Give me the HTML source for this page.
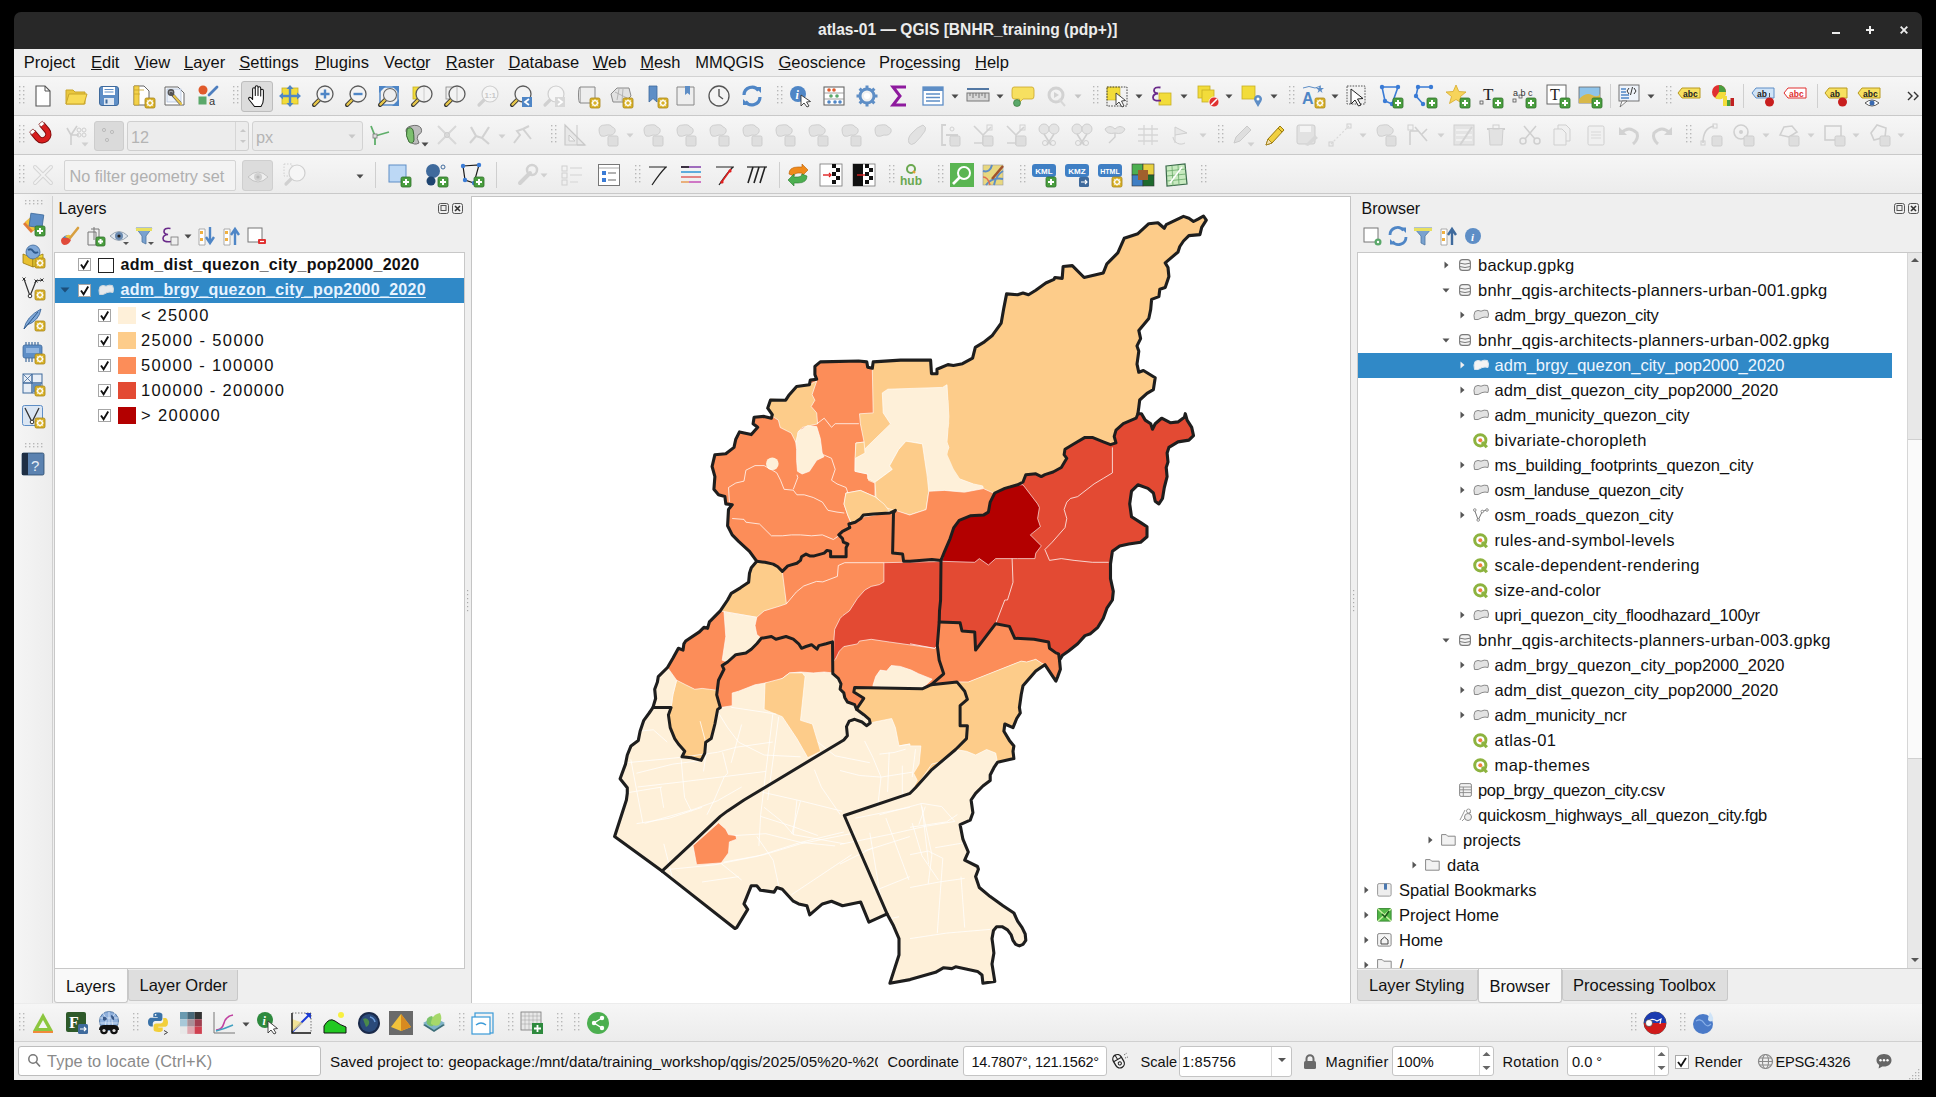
<!DOCTYPE html><html><head><meta charset="utf-8"><style>
html,body{margin:0;padding:0}
body{width:1936px;height:1097px;background:#000;position:relative;overflow:hidden;font-family:"Liberation Sans",sans-serif}
.a{position:absolute}
.t{position:absolute;white-space:pre;line-height:1;font-family:"Liberation Sans",sans-serif}
svg.a{overflow:visible}
</style></head><body>
<div class="a" style="left:14px;top:40px;width:1908px;height:1040px;background:#efefef;"></div>
<div class="a" style="left:14px;top:12px;width:1908px;height:37px;background:#282828;border-radius:7px 7px 0 0"></div>
<div class="t" style="left:818px;top:21.79px;font-size:15.6px;color:#ececec;font-weight:700;">atlas-01 — QGIS [BNHR_training (pdp+)]</div>
<div class="a" style="left:1832px;top:32px;width:8px;height:2px;background:#ececec;"></div>
<div class="a" style="left:1866px;top:29px;width:8px;height:2px;background:#ececec;"></div>
<div class="a" style="left:1869px;top:26px;width:2px;height:8px;background:#ececec;"></div>
<svg class="a" style="left:1900px;top:26px;" width="8" height="8" viewBox="0 0 8 8"><path d="M0.7 0.7L7.3 7.3M7.3 0.7L0.7 7.3" stroke="#ececec" stroke-width="1.9"/></svg>
<div class="a" style="left:14px;top:49px;width:1908px;height:27px;background:#efefef;"></div>
<div class="a" style="left:14px;top:76px;width:1908px;height:1px;background:#d2d2d2;"></div>
<div class="t" style="left:23.8px;top:53.93px;font-size:16.5px;color:#111;font-weight:400;">Pro<u>j</u>ect</div>
<div class="t" style="left:91px;top:53.93px;font-size:16.5px;color:#111;font-weight:400;"><u>E</u>dit</div>
<div class="t" style="left:134.6px;top:53.93px;font-size:16.5px;color:#111;font-weight:400;"><u>V</u>iew</div>
<div class="t" style="left:184px;top:53.93px;font-size:16.5px;color:#111;font-weight:400;"><u>L</u>ayer</div>
<div class="t" style="left:239.2px;top:53.93px;font-size:16.5px;color:#111;font-weight:400;"><u>S</u>ettings</div>
<div class="t" style="left:314.9px;top:53.93px;font-size:16.5px;color:#111;font-weight:400;"><u>P</u>lugins</div>
<div class="t" style="left:383.8px;top:53.93px;font-size:16.5px;color:#111;font-weight:400;">Vect<u>o</u>r</div>
<div class="t" style="left:445.8px;top:53.93px;font-size:16.5px;color:#111;font-weight:400;"><u>R</u>aster</div>
<div class="t" style="left:508.5px;top:53.93px;font-size:16.5px;color:#111;font-weight:400;"><u>D</u>atabase</div>
<div class="t" style="left:592.8px;top:53.93px;font-size:16.5px;color:#111;font-weight:400;"><u>W</u>eb</div>
<div class="t" style="left:640.2px;top:53.93px;font-size:16.5px;color:#111;font-weight:400;"><u>M</u>esh</div>
<div class="t" style="left:695.2px;top:53.93px;font-size:16.5px;color:#111;font-weight:400;">MMQGIS</div>
<div class="t" style="left:778.5px;top:53.93px;font-size:16.5px;color:#111;font-weight:400;"><u>G</u>eoscience</div>
<div class="t" style="left:879px;top:53.93px;font-size:16.5px;color:#111;font-weight:400;">Pro<u>c</u>essing</div>
<div class="t" style="left:975px;top:53.93px;font-size:16.5px;color:#111;font-weight:400;"><u>H</u>elp</div>
<div class="a" style="left:14px;top:77px;width:1908px;height:38px;background:linear-gradient(#f6f6f6,#ececec);"></div>
<div class="a" style="left:14px;top:115px;width:1908px;height:1px;background:#c9c9c9;"></div>
<div class="a" style="left:14px;top:116px;width:1908px;height:38px;background:linear-gradient(#f6f6f6,#ececec);"></div>
<div class="a" style="left:14px;top:154px;width:1908px;height:1px;background:#c9c9c9;"></div>
<div class="a" style="left:14px;top:155px;width:1908px;height:38px;background:linear-gradient(#f6f6f6,#ececec);"></div>
<div class="a" style="left:14px;top:193px;width:1908px;height:1px;background:#c9c9c9;"></div>
<div class="a" style="left:14px;top:194px;width:1908px;height:886px;background:#efefef;"></div>
<div class="a" style="left:14px;top:194px;width:38px;height:810px;background:linear-gradient(90deg,#f5f5f5,#ededed);"></div>
<div class="a" style="left:52px;top:196px;width:1px;height:807px;background:#d0d0d0;"></div>
<div class="t" style="left:58.5px;top:201.46px;font-size:16px;color:#111;font-weight:400;">Layers</div>
<svg class="a" style="left:438px;top:203px;" width="26" height="12" viewBox="0 0 26 12"><rect x="0.5" y="0.5" width="10" height="10" rx="2" fill="none" stroke="#555"/><rect x="3" y="2.5" width="5" height="5" fill="none" stroke="#555"/><rect x="14.5" y="0.5" width="10" height="10" rx="2" fill="none" stroke="#555"/><path d="M17 3L22 8M22 3L17 8" stroke="#333" stroke-width="1.6"/></svg>
<div class="a" style="left:54px;top:252px;width:411px;height:717px;background:#fff;box-sizing:border-box;border:1px solid #c8c8c8"></div>
<div class="a" style="left:54px;top:969px;width:74px;height:34px;background:#f9f9f9;box-sizing:border-box;border:1px solid #c8c8c8;border-top:none;border-radius:0 0 3px 3px"></div>
<div class="a" style="left:128px;top:970px;width:110px;height:31px;background:#dedede;box-sizing:border-box;border:1px solid #c8c8c8;border-top:none;border-radius:0 0 3px 3px"></div>
<div class="t" style="left:66px;top:977.53px;font-size:16.5px;color:#111;font-weight:400;">Layers</div>
<div class="t" style="left:139.5px;top:977.03px;font-size:16.5px;color:#111;font-weight:400;">Layer Order</div>
<div class="a" style="left:471px;top:196px;width:880px;height:808px;background:#fff;box-sizing:border-box;border:1px solid #c4c4c4"></div>
<div class="t" style="left:1361.5px;top:201.46px;font-size:16px;color:#111;font-weight:400;">Browser</div>
<svg class="a" style="left:1894px;top:203px;" width="28" height="12" viewBox="0 0 28 12"><rect x="0.5" y="0.5" width="10" height="10" rx="2" fill="none" stroke="#555"/><rect x="3" y="2.5" width="5" height="5" fill="none" stroke="#555"/><rect x="14.5" y="0.5" width="10" height="10" rx="2" fill="none" stroke="#555"/><path d="M17 3L22 8M22 3L17 8" stroke="#333" stroke-width="1.6"/></svg>
<div class="a" style="left:1357px;top:252px;width:565px;height:717px;background:#fff;box-sizing:border-box;border:1px solid #c8c8c8;border-right:none"></div>
<div class="a" style="left:1907px;top:253px;width:15px;height:715px;background:#e8e8e8;box-sizing:border-box;border-left:1px solid #d6d6d6"></div>
<div class="a" style="left:1908px;top:439px;width:14px;height:320px;background:#fafafa;box-sizing:border-box;border-top:1px solid #d0d0d0;border-bottom:1px solid #d0d0d0"></div>
<svg class="a" style="left:1908px;top:253px;" width="14" height="14" viewBox="0 0 14 14"><path d="M3 9L7 5L11 9Z" fill="#555"/></svg>
<svg class="a" style="left:1908px;top:953px;" width="14" height="14" viewBox="0 0 14 14"><path d="M3 5L7 9L11 5Z" fill="#555"/></svg>
<div class="a" style="left:1357px;top:970px;width:121px;height:31px;background:#dedede;box-sizing:border-box;border:1px solid #c8c8c8;border-top:none;border-radius:0 0 3px 3px"></div>
<div class="a" style="left:1478px;top:969px;width:84px;height:34px;background:#f9f9f9;box-sizing:border-box;border:1px solid #c8c8c8;border-top:none;border-radius:0 0 3px 3px"></div>
<div class="a" style="left:1562px;top:970px;width:166px;height:31px;background:#dedede;box-sizing:border-box;border:1px solid #c8c8c8;border-top:none;border-radius:0 0 3px 3px"></div>
<div class="t" style="left:1369px;top:977.03px;font-size:16.5px;color:#111;font-weight:400;">Layer Styling</div>
<div class="t" style="left:1489.5px;top:977.53px;font-size:16.5px;color:#111;font-weight:400;">Browser</div>
<div class="t" style="left:1573px;top:977.03px;font-size:16.5px;color:#111;font-weight:400;">Processing Toolbox</div>
<div class="a" style="left:14px;top:1003px;width:1908px;height:38px;background:linear-gradient(#f6f6f6,#ececec);"></div>
<div class="a" style="left:14px;top:1003px;width:1908px;height:1px;background:#ececec;"></div>
<div class="a" style="left:14px;top:1041px;width:1908px;height:1px;background:#d0d0d0;"></div>
<div class="a" style="left:14px;top:1042px;width:1908px;height:38px;background:#efefef;"></div>
<div class="a" style="left:18px;top:1046px;width:303px;height:30px;background:#fff;box-sizing:border-box;border:1px solid #bdbdbd;border-radius:3px"></div>
<svg class="a" style="left:27px;top:1053px;" width="14" height="15" viewBox="0 0 14 15"><circle cx="6" cy="6" r="4.2" fill="none" stroke="#777" stroke-width="1.5"/><path d="M9 9L13 13.5" stroke="#777" stroke-width="1.6"/></svg>
<div class="t" style="left:47px;top:1053.00px;font-size:16.3px;color:#8a8a8a;font-weight:400;letter-spacing:0.12px">Type to locate (Ctrl+K)</div>
<div class="a" style="left:330px;top:1046px;width:548px;height:30px;overflow:hidden">
<div class="t" style="left:0px;top:7.93px;font-size:15.2px;color:#111;font-weight:400;">Saved project to: geopackage:/mnt/data/training_workshop/qgis/2025/05%20-%20</div>
</div>
<div class="t" style="left:887.5px;top:1054.64px;font-size:14.6px;color:#111;font-weight:400;">Coordinate</div>
<div class="a" style="left:963px;top:1046px;width:144px;height:30px;background:#fff;box-sizing:border-box;border:1px solid #c4c4c4;border-radius:3px"></div>
<div class="t" style="left:971.5px;top:1054.73px;font-size:14.5px;color:#111;font-weight:400;letter-spacing:-0.28px">14.7807°, 121.1562°</div>
<svg class="a" style="left:1110px;top:1052px;" width="18" height="18" viewBox="0 0 18 18"><g transform="rotate(-30 9 9)"><rect x="4" y="2" width="9" height="14" rx="4.5" fill="#f4f4f4" stroke="#222" stroke-width="1.3"/><path d="M8.5 2V7M4 7H13" stroke="#222" stroke-width="1"/><circle cx="8.5" cy="11.5" r="1.6" fill="none" stroke="#222"/></g><path d="M14 3L17 1M15 6L18 5" stroke="#333" stroke-width="0.8" stroke-dasharray="1 1"/></svg>
<svg class="a" style="left:1303px;top:1054px;" width="14" height="15" viewBox="0 0 14 15"><path d="M3.5 7V4.8A3.5 3.5 0 0 1 10.5 4.8V7" fill="none" stroke="#6a6a6a" stroke-width="2"/><rect x="1" y="7" width="12" height="8" rx="1.5" fill="#6a6a6a"/></svg>
<div class="t" style="left:1140.5px;top:1054.64px;font-size:14.6px;color:#111;font-weight:400;">Scale</div>
<div class="a" style="left:1179px;top:1046px;width:113px;height:31px;background:#fff;box-sizing:border-box;border:1px solid #c4c4c4;border-radius:3px"></div>
<div class="a" style="left:1271px;top:1047px;width:1px;height:29px;background:#d8d8d8;"></div>
<svg class="a" style="left:1275px;top:1055px;" width="14" height="10" viewBox="0 0 14 10"><path d="M3 3L7 7L11 3Z" fill="#555"/></svg>
<div class="t" style="left:1182px;top:1054.64px;font-size:14.6px;color:#111;font-weight:400;letter-spacing:0.2px">1:85756</div>
<div class="t" style="left:1325.5px;top:1054.64px;font-size:14.6px;color:#111;font-weight:400;letter-spacing:0.35px">Magnifier</div>
<div class="a" style="left:1392px;top:1046px;width:102px;height:30px;background:#fff;box-sizing:border-box;border:1px solid #c4c4c4;border-radius:3px"></div>
<div class="a" style="left:1479px;top:1047px;width:1px;height:28px;background:#d8d8d8;"></div>
<svg class="a" style="left:1480px;top:1047px;" width="13" height="28" viewBox="0 0 13 28"><path d="M2.5 9L6.5 5L10.5 9Z" fill="#666"/><path d="M2.5 19L6.5 23L10.5 19Z" fill="#666"/></svg>
<div class="t" style="left:1396.5px;top:1054.64px;font-size:14.6px;color:#111;font-weight:400;">100%</div>
<div class="t" style="left:1502.5px;top:1054.64px;font-size:14.6px;color:#111;font-weight:400;letter-spacing:0.28px">Rotation</div>
<div class="a" style="left:1567px;top:1046px;width:102px;height:30px;background:#fff;box-sizing:border-box;border:1px solid #c4c4c4;border-radius:3px"></div>
<div class="a" style="left:1654px;top:1047px;width:1px;height:28px;background:#d8d8d8;"></div>
<svg class="a" style="left:1655px;top:1047px;" width="13" height="28" viewBox="0 0 13 28"><path d="M2.5 9L6.5 5L10.5 9Z" fill="#666"/><path d="M2.5 19L6.5 23L10.5 19Z" fill="#666"/></svg>
<div class="t" style="left:1572px;top:1054.64px;font-size:14.6px;color:#111;font-weight:400;">0.0 °</div>
<div class="a" style="left:1675px;top:1055px;width:14px;height:14px;background:#fff;box-sizing:border-box;border:1px solid #aaa"></div>
<svg class="a" style="left:1675px;top:1055px;" width="14" height="14" viewBox="0 0 14 14"><path d="M3 7L6 11L11 3" fill="none" stroke="#111" stroke-width="1.8"/></svg>
<div class="t" style="left:1694.5px;top:1054.64px;font-size:14.6px;color:#111;font-weight:400;">Render</div>
<svg class="a" style="left:1757px;top:1053px;" width="17" height="17" viewBox="0 0 17 17"><circle cx="8.5" cy="8.5" r="7" fill="none" stroke="#888" stroke-width="1.2"/><ellipse cx="8.5" cy="8.5" rx="3" ry="7" fill="none" stroke="#888" stroke-width="1.1"/><path d="M1.5 8.5H15.5M2.5 5H14.5M2.5 12H14.5" stroke="#888" stroke-width="1.1"/></svg>
<div class="t" style="left:1775.5px;top:1054.64px;font-size:14.6px;color:#111;font-weight:400;letter-spacing:-0.25px">EPSG:4326</div>
<svg class="a" style="left:1906px;top:1066px;" width="14" height="14" viewBox="0 0 14 14"><rect x="12" y="12" width="1.3" height="1.3" fill="#b0b0b0"/><rect x="12" y="9" width="1.3" height="1.3" fill="#b0b0b0"/><rect x="12" y="6" width="1.3" height="1.3" fill="#b0b0b0"/><rect x="12" y="3" width="1.3" height="1.3" fill="#b0b0b0"/><rect x="9" y="12" width="1.3" height="1.3" fill="#b0b0b0"/><rect x="9" y="9" width="1.3" height="1.3" fill="#b0b0b0"/><rect x="9" y="6" width="1.3" height="1.3" fill="#b0b0b0"/><rect x="6" y="12" width="1.3" height="1.3" fill="#b0b0b0"/><rect x="6" y="9" width="1.3" height="1.3" fill="#b0b0b0"/><rect x="3" y="12" width="1.3" height="1.3" fill="#b0b0b0"/></svg>
<svg class="a" style="left:1875px;top:1052px;" width="18" height="18" viewBox="0 0 18 18"><path d="M9 2C4.5 2 1.5 4.8 1.5 8.3C1.5 10.3 2.5 12 4.2 13.1L3.6 16.5L7.3 14.4C7.9 14.5 8.4 14.6 9 14.6C13.5 14.6 16.5 11.8 16.5 8.3C16.5 4.8 13.5 2 9 2Z" fill="#666"/><circle cx="5.5" cy="8.3" r="1.2" fill="#fff"/><circle cx="9" cy="8.3" r="1.2" fill="#fff"/><circle cx="12.5" cy="8.3" r="1.2" fill="#fff"/></svg>
<svg class="a" style="left:78px;top:258px;" width="13" height="13" viewBox="0 0 13 13"><rect x="0.5" y="0.5" width="12" height="12" fill="#fff" stroke="#a6a6a6"/><path d="M3 6.5L5.6 10.2L10.2 2.6" fill="none" stroke="#111" stroke-width="1.9"/></svg>
<div class="a" style="left:98px;top:258px;width:16px;height:15px;background:#fff;box-sizing:border-box;border:1.6px solid #222"></div>
<div class="t" style="left:120.5px;top:256.96px;font-size:16px;color:#111;font-weight:700;letter-spacing:0.27px">adm_dist_quezon_city_pop2000_2020</div>
<div class="a" style="left:55px;top:278px;width:409px;height:25px;background:#3089c7;"></div>
<svg class="a" style="left:60px;top:287px;" width="10" height="6" viewBox="0 0 10 6"><path d="M0.5 0.5L9.5 0.5L5 5.5Z" fill="#1d4f7a"/></svg>
<svg class="a" style="left:78px;top:284px;" width="13" height="13" viewBox="0 0 13 13"><rect x="0.5" y="0.5" width="12" height="12" fill="#fff" stroke="#a6a6a6"/><path d="M3 6.5L5.6 10.2L10.2 2.6" fill="none" stroke="#111" stroke-width="1.9"/></svg>
<svg class="a" style="left:98px;top:284px;" width="17" height="12" viewBox="0 0 17 12"><path d="M2 2.5Q5 0.5 8 2.2Q11 0.5 14.5 1.5Q16.3 5 15 8.5Q12 7.5 9 8.6Q5 11.5 1.5 10.5Q0.2 6 2 2.5Z" fill="#e6e9ec" stroke="#cfd6dc" stroke-width="1"/></svg>
<div class="t" style="left:120.5px;top:281.96px;font-size:16px;color:#e7f3ff;font-weight:700;letter-spacing:0.28px;text-decoration:underline;text-underline-offset:2px">adm_brgy_quezon_city_pop2000_2020</div>
<svg class="a" style="left:98px;top:308.5px;" width="13" height="13" viewBox="0 0 13 13"><rect x="0.5" y="0.5" width="12" height="12" fill="#fff" stroke="#a6a6a6"/><path d="M3 6.5L5.6 10.2L10.2 2.6" fill="none" stroke="#111" stroke-width="1.9"/></svg>
<div class="a" style="left:118px;top:307px;width:18px;height:17px;background:#fef0d9;"></div>
<div class="t" style="left:141px;top:306.53px;font-size:16.5px;color:#111;font-weight:400;letter-spacing:1.2px">&lt; 25000</div>
<svg class="a" style="left:98px;top:333.5px;" width="13" height="13" viewBox="0 0 13 13"><rect x="0.5" y="0.5" width="12" height="12" fill="#fff" stroke="#a6a6a6"/><path d="M3 6.5L5.6 10.2L10.2 2.6" fill="none" stroke="#111" stroke-width="1.9"/></svg>
<div class="a" style="left:118px;top:332px;width:18px;height:17px;background:#fdcc8a;"></div>
<div class="t" style="left:141px;top:331.53px;font-size:16.5px;color:#111;font-weight:400;letter-spacing:1.35px">25000 - 50000</div>
<svg class="a" style="left:98px;top:358.5px;" width="13" height="13" viewBox="0 0 13 13"><rect x="0.5" y="0.5" width="12" height="12" fill="#fff" stroke="#a6a6a6"/><path d="M3 6.5L5.6 10.2L10.2 2.6" fill="none" stroke="#111" stroke-width="1.9"/></svg>
<div class="a" style="left:118px;top:357px;width:18px;height:17px;background:#fc8d59;"></div>
<div class="t" style="left:141px;top:356.53px;font-size:16.5px;color:#111;font-weight:400;letter-spacing:1.3px">50000 - 100000</div>
<svg class="a" style="left:98px;top:383.5px;" width="13" height="13" viewBox="0 0 13 13"><rect x="0.5" y="0.5" width="12" height="12" fill="#fff" stroke="#a6a6a6"/><path d="M3 6.5L5.6 10.2L10.2 2.6" fill="none" stroke="#111" stroke-width="1.9"/></svg>
<div class="a" style="left:118px;top:382px;width:18px;height:17px;background:#e34a33;"></div>
<div class="t" style="left:141px;top:381.53px;font-size:16.5px;color:#111;font-weight:400;letter-spacing:1.3px">100000 - 200000</div>
<svg class="a" style="left:98px;top:408.5px;" width="13" height="13" viewBox="0 0 13 13"><rect x="0.5" y="0.5" width="12" height="12" fill="#fff" stroke="#a6a6a6"/><path d="M3 6.5L5.6 10.2L10.2 2.6" fill="none" stroke="#111" stroke-width="1.9"/></svg>
<div class="a" style="left:118px;top:407px;width:18px;height:17px;background:#b30000;"></div>
<div class="t" style="left:141px;top:406.53px;font-size:16.5px;color:#111;font-weight:400;letter-spacing:1.35px">&gt; 200000</div>
<div class="a" style="left:1358px;top:353px;width:534px;height:25px;background:#3089c7;"></div>
<svg class="a" style="left:1444px;top:261px;" width="5" height="8" viewBox="0 0 5 8"><path d="M0.5 0.5L4.5 4L0.5 7.5Z" fill="#555"/></svg>
<svg class="a" style="left:1459px;top:259px;" width="12" height="12" viewBox="0 0 12 12"><rect x="0.6" y="0.6" width="10.8" height="10.8" rx="3" fill="#f4f4f4" stroke="#7a7a7a" stroke-width="1.1"/><path d="M1 4.2Q6 6 11 4.2M1 7.6Q6 9.4 11 7.6" fill="none" stroke="#7a7a7a" stroke-width="1"/></svg>
<div class="t" style="left:1478px;top:257.03px;font-size:16.5px;color:#111;font-weight:400;letter-spacing:0.25px">backup.gpkg</div>
<svg class="a" style="left:1442px;top:287.5px;" width="8" height="5" viewBox="0 0 8 5"><path d="M0.5 0.5L7.5 0.5L4 4.5Z" fill="#555"/></svg>
<svg class="a" style="left:1459px;top:284px;" width="12" height="12" viewBox="0 0 12 12"><rect x="0.6" y="0.6" width="10.8" height="10.8" rx="3" fill="#f4f4f4" stroke="#7a7a7a" stroke-width="1.1"/><path d="M1 4.2Q6 6 11 4.2M1 7.6Q6 9.4 11 7.6" fill="none" stroke="#7a7a7a" stroke-width="1"/></svg>
<div class="t" style="left:1478px;top:282.03px;font-size:16.5px;color:#111;font-weight:400;letter-spacing:0.249px">bnhr_qgis-architects-planners-urban-001.gpkg</div>
<svg class="a" style="left:1460px;top:311px;" width="5" height="8" viewBox="0 0 5 8"><path d="M0.5 0.5L4.5 4L0.5 7.5Z" fill="#555"/></svg>
<svg class="a" style="left:1473px;top:309px;" width="17" height="12" viewBox="0 0 17 12"><path d="M2 2.5Q5 0.5 8 2.2Q11 0.5 14.5 1.5Q16.3 5 15 8.5Q12 7.5 9 8.6Q5 11.5 1.5 10.5Q0.2 6 2 2.5Z" fill="#e2e2e2" stroke="#8a8a8a" stroke-width="1"/></svg>
<div class="t" style="left:1494.6px;top:307.03px;font-size:16.5px;color:#111;font-weight:400;letter-spacing:-0.342px">adm_brgy_quezon_city</div>
<svg class="a" style="left:1442px;top:337.5px;" width="8" height="5" viewBox="0 0 8 5"><path d="M0.5 0.5L7.5 0.5L4 4.5Z" fill="#555"/></svg>
<svg class="a" style="left:1459px;top:334px;" width="12" height="12" viewBox="0 0 12 12"><rect x="0.6" y="0.6" width="10.8" height="10.8" rx="3" fill="#f4f4f4" stroke="#7a7a7a" stroke-width="1.1"/><path d="M1 4.2Q6 6 11 4.2M1 7.6Q6 9.4 11 7.6" fill="none" stroke="#7a7a7a" stroke-width="1"/></svg>
<div class="t" style="left:1478px;top:332.03px;font-size:16.5px;color:#111;font-weight:400;letter-spacing:0.302px">bnhr_qgis-architects-planners-urban-002.gpkg</div>
<svg class="a" style="left:1460px;top:361px;" width="5" height="8" viewBox="0 0 5 8"><path d="M0.5 0.5L4.5 4L0.5 7.5Z" fill="#f0f0f0"/></svg>
<svg class="a" style="left:1473px;top:359px;" width="17" height="12" viewBox="0 0 17 12"><path d="M2 2.5Q5 0.5 8 2.2Q11 0.5 14.5 1.5Q16.3 5 15 8.5Q12 7.5 9 8.6Q5 11.5 1.5 10.5Q0.2 6 2 2.5Z" fill="#f4f4f4" stroke="#d8e4ee" stroke-width="1"/></svg>
<div class="t" style="left:1494.6px;top:357.03px;font-size:16.5px;color:#eef6ff;font-weight:400;letter-spacing:0.0px">adm_brgy_quezon_city_pop2000_2020</div>
<svg class="a" style="left:1460px;top:386px;" width="5" height="8" viewBox="0 0 5 8"><path d="M0.5 0.5L4.5 4L0.5 7.5Z" fill="#555"/></svg>
<svg class="a" style="left:1473px;top:384px;" width="17" height="12" viewBox="0 0 17 12"><path d="M2 2.5Q5 0.5 8 2.2Q11 0.5 14.5 1.5Q16.3 5 15 8.5Q12 7.5 9 8.6Q5 11.5 1.5 10.5Q0.2 6 2 2.5Z" fill="#e2e2e2" stroke="#8a8a8a" stroke-width="1"/></svg>
<div class="t" style="left:1494.6px;top:382.03px;font-size:16.5px;color:#111;font-weight:400;letter-spacing:0.0px">adm_dist_quezon_city_pop2000_2020</div>
<svg class="a" style="left:1460px;top:411px;" width="5" height="8" viewBox="0 0 5 8"><path d="M0.5 0.5L4.5 4L0.5 7.5Z" fill="#555"/></svg>
<svg class="a" style="left:1473px;top:409px;" width="17" height="12" viewBox="0 0 17 12"><path d="M2 2.5Q5 0.5 8 2.2Q11 0.5 14.5 1.5Q16.3 5 15 8.5Q12 7.5 9 8.6Q5 11.5 1.5 10.5Q0.2 6 2 2.5Z" fill="#e2e2e2" stroke="#8a8a8a" stroke-width="1"/></svg>
<div class="t" style="left:1494.6px;top:407.03px;font-size:16.5px;color:#111;font-weight:400;letter-spacing:-0.174px">adm_municity_quezon_city</div>
<svg class="a" style="left:1473px;top:432.5px;" width="16" height="16" viewBox="0 0 16 16"><circle cx="7.3" cy="7.3" r="5.6" fill="none" stroke="#8db33f" stroke-width="3"/><path d="M9 9L13.8 14.3" stroke="#8db33f" stroke-width="3.2"/><circle cx="7.3" cy="7.3" r="2" fill="#f0803c"/></svg>
<div class="t" style="left:1494.6px;top:432.03px;font-size:16.5px;color:#111;font-weight:400;letter-spacing:0.368px">bivariate-choropleth</div>
<svg class="a" style="left:1460px;top:461px;" width="5" height="8" viewBox="0 0 5 8"><path d="M0.5 0.5L4.5 4L0.5 7.5Z" fill="#555"/></svg>
<svg class="a" style="left:1473px;top:459px;" width="17" height="12" viewBox="0 0 17 12"><path d="M2 2.5Q5 0.5 8 2.2Q11 0.5 14.5 1.5Q16.3 5 15 8.5Q12 7.5 9 8.6Q5 11.5 1.5 10.5Q0.2 6 2 2.5Z" fill="#e2e2e2" stroke="#8a8a8a" stroke-width="1"/></svg>
<div class="t" style="left:1494.6px;top:457.03px;font-size:16.5px;color:#111;font-weight:400;letter-spacing:-0.106px">ms_building_footprints_quezon_city</div>
<svg class="a" style="left:1460px;top:486px;" width="5" height="8" viewBox="0 0 5 8"><path d="M0.5 0.5L4.5 4L0.5 7.5Z" fill="#555"/></svg>
<svg class="a" style="left:1473px;top:484px;" width="17" height="12" viewBox="0 0 17 12"><path d="M2 2.5Q5 0.5 8 2.2Q11 0.5 14.5 1.5Q16.3 5 15 8.5Q12 7.5 9 8.6Q5 11.5 1.5 10.5Q0.2 6 2 2.5Z" fill="#e2e2e2" stroke="#8a8a8a" stroke-width="1"/></svg>
<div class="t" style="left:1494.6px;top:482.03px;font-size:16.5px;color:#111;font-weight:400;letter-spacing:-0.295px">osm_landuse_quezon_city</div>
<svg class="a" style="left:1460px;top:511px;" width="5" height="8" viewBox="0 0 5 8"><path d="M0.5 0.5L4.5 4L0.5 7.5Z" fill="#555"/></svg>
<svg class="a" style="left:1473px;top:508px;" width="17" height="14" viewBox="0 0 17 14"><path d="M1.5 2L5.2 12L9.3 3.5L13.5 2" fill="none" stroke="#777" stroke-width="1"/><circle cx="1.8" cy="2" r="1.3" fill="#fff" stroke="#777" stroke-width="0.8"/><circle cx="5.2" cy="12" r="1.3" fill="#fff" stroke="#777" stroke-width="0.8"/><circle cx="9.3" cy="3.5" r="1.3" fill="#fff" stroke="#777" stroke-width="0.8"/><circle cx="14" cy="2" r="1.3" fill="#fff" stroke="#777" stroke-width="0.8"/></svg>
<div class="t" style="left:1494.6px;top:507.03px;font-size:16.5px;color:#111;font-weight:400;letter-spacing:0.0px">osm_roads_quezon_city</div>
<svg class="a" style="left:1473px;top:532.5px;" width="16" height="16" viewBox="0 0 16 16"><circle cx="7.3" cy="7.3" r="5.6" fill="none" stroke="#8db33f" stroke-width="3"/><path d="M9 9L13.8 14.3" stroke="#8db33f" stroke-width="3.2"/><circle cx="7.3" cy="7.3" r="2" fill="#f0803c"/></svg>
<div class="t" style="left:1494.6px;top:532.03px;font-size:16.5px;color:#111;font-weight:400;letter-spacing:0.255px">rules-and-symbol-levels</div>
<svg class="a" style="left:1473px;top:557.5px;" width="16" height="16" viewBox="0 0 16 16"><circle cx="7.3" cy="7.3" r="5.6" fill="none" stroke="#8db33f" stroke-width="3"/><path d="M9 9L13.8 14.3" stroke="#8db33f" stroke-width="3.2"/><circle cx="7.3" cy="7.3" r="2" fill="#f0803c"/></svg>
<div class="t" style="left:1494.6px;top:557.03px;font-size:16.5px;color:#111;font-weight:400;letter-spacing:0.321px">scale-dependent-rendering</div>
<svg class="a" style="left:1473px;top:582.5px;" width="16" height="16" viewBox="0 0 16 16"><circle cx="7.3" cy="7.3" r="5.6" fill="none" stroke="#8db33f" stroke-width="3"/><path d="M9 9L13.8 14.3" stroke="#8db33f" stroke-width="3.2"/><circle cx="7.3" cy="7.3" r="2" fill="#f0803c"/></svg>
<div class="t" style="left:1494.6px;top:582.03px;font-size:16.5px;color:#111;font-weight:400;letter-spacing:0.2px">size-and-color</div>
<svg class="a" style="left:1460px;top:611px;" width="5" height="8" viewBox="0 0 5 8"><path d="M0.5 0.5L4.5 4L0.5 7.5Z" fill="#555"/></svg>
<svg class="a" style="left:1473px;top:609px;" width="17" height="12" viewBox="0 0 17 12"><path d="M2 2.5Q5 0.5 8 2.2Q11 0.5 14.5 1.5Q16.3 5 15 8.5Q12 7.5 9 8.6Q5 11.5 1.5 10.5Q0.2 6 2 2.5Z" fill="#e2e2e2" stroke="#8a8a8a" stroke-width="1"/></svg>
<div class="t" style="left:1494.6px;top:607.03px;font-size:16.5px;color:#111;font-weight:400;letter-spacing:-0.155px">upri_quezon_city_floodhazard_100yr</div>
<svg class="a" style="left:1442px;top:637.5px;" width="8" height="5" viewBox="0 0 8 5"><path d="M0.5 0.5L7.5 0.5L4 4.5Z" fill="#555"/></svg>
<svg class="a" style="left:1459px;top:634px;" width="12" height="12" viewBox="0 0 12 12"><rect x="0.6" y="0.6" width="10.8" height="10.8" rx="3" fill="#f4f4f4" stroke="#7a7a7a" stroke-width="1.1"/><path d="M1 4.2Q6 6 11 4.2M1 7.6Q6 9.4 11 7.6" fill="none" stroke="#7a7a7a" stroke-width="1"/></svg>
<div class="t" style="left:1478px;top:632.03px;font-size:16.5px;color:#111;font-weight:400;letter-spacing:0.326px">bnhr_qgis-architects-planners-urban-003.gpkg</div>
<svg class="a" style="left:1460px;top:661px;" width="5" height="8" viewBox="0 0 5 8"><path d="M0.5 0.5L4.5 4L0.5 7.5Z" fill="#555"/></svg>
<svg class="a" style="left:1473px;top:659px;" width="17" height="12" viewBox="0 0 17 12"><path d="M2 2.5Q5 0.5 8 2.2Q11 0.5 14.5 1.5Q16.3 5 15 8.5Q12 7.5 9 8.6Q5 11.5 1.5 10.5Q0.2 6 2 2.5Z" fill="#e2e2e2" stroke="#8a8a8a" stroke-width="1"/></svg>
<div class="t" style="left:1494.6px;top:657.03px;font-size:16.5px;color:#111;font-weight:400;letter-spacing:0.0px">adm_brgy_quezon_city_pop2000_2020</div>
<svg class="a" style="left:1460px;top:686px;" width="5" height="8" viewBox="0 0 5 8"><path d="M0.5 0.5L4.5 4L0.5 7.5Z" fill="#555"/></svg>
<svg class="a" style="left:1473px;top:684px;" width="17" height="12" viewBox="0 0 17 12"><path d="M2 2.5Q5 0.5 8 2.2Q11 0.5 14.5 1.5Q16.3 5 15 8.5Q12 7.5 9 8.6Q5 11.5 1.5 10.5Q0.2 6 2 2.5Z" fill="#e2e2e2" stroke="#8a8a8a" stroke-width="1"/></svg>
<div class="t" style="left:1494.6px;top:682.03px;font-size:16.5px;color:#111;font-weight:400;letter-spacing:0.0px">adm_dist_quezon_city_pop2000_2020</div>
<svg class="a" style="left:1460px;top:711px;" width="5" height="8" viewBox="0 0 5 8"><path d="M0.5 0.5L4.5 4L0.5 7.5Z" fill="#555"/></svg>
<svg class="a" style="left:1473px;top:709px;" width="17" height="12" viewBox="0 0 17 12"><path d="M2 2.5Q5 0.5 8 2.2Q11 0.5 14.5 1.5Q16.3 5 15 8.5Q12 7.5 9 8.6Q5 11.5 1.5 10.5Q0.2 6 2 2.5Z" fill="#e2e2e2" stroke="#8a8a8a" stroke-width="1"/></svg>
<div class="t" style="left:1494.6px;top:707.03px;font-size:16.5px;color:#111;font-weight:400;letter-spacing:-0.12px">adm_municity_ncr</div>
<svg class="a" style="left:1473px;top:732.5px;" width="16" height="16" viewBox="0 0 16 16"><circle cx="7.3" cy="7.3" r="5.6" fill="none" stroke="#8db33f" stroke-width="3"/><path d="M9 9L13.8 14.3" stroke="#8db33f" stroke-width="3.2"/><circle cx="7.3" cy="7.3" r="2" fill="#f0803c"/></svg>
<div class="t" style="left:1494.6px;top:732.03px;font-size:16.5px;color:#111;font-weight:400;letter-spacing:0.386px">atlas-01</div>
<svg class="a" style="left:1473px;top:757.5px;" width="16" height="16" viewBox="0 0 16 16"><circle cx="7.3" cy="7.3" r="5.6" fill="none" stroke="#8db33f" stroke-width="3"/><path d="M9 9L13.8 14.3" stroke="#8db33f" stroke-width="3.2"/><circle cx="7.3" cy="7.3" r="2" fill="#f0803c"/></svg>
<div class="t" style="left:1494.6px;top:757.03px;font-size:16.5px;color:#111;font-weight:400;letter-spacing:0.389px">map-themes</div>
<svg class="a" style="left:1459px;top:783px;" width="13" height="14" viewBox="0 0 13 14"><rect x="0.6" y="0.6" width="11.8" height="12.8" rx="1.5" fill="#f2f2f2" stroke="#888" stroke-width="1"/><path d="M1 4H12M1 6.8H12M1 9.6H12M4.3 4V13" stroke="#888" stroke-width="0.9"/></svg>
<div class="t" style="left:1478px;top:782.03px;font-size:16.5px;color:#111;font-weight:400;letter-spacing:-0.313px">pop_brgy_quezon_city.csv</div>
<svg class="a" style="left:1459px;top:808px;" width="14" height="14" viewBox="0 0 14 14"><path d="M1 12L6 2M3 13L12 4" stroke="#999" stroke-width="1"/><circle cx="9" cy="9" r="3.5" fill="#eee" stroke="#888"/><circle cx="9.5" cy="3" r="2" fill="#fff" stroke="#999"/></svg>
<div class="t" style="left:1478px;top:807.03px;font-size:16.5px;color:#111;font-weight:400;letter-spacing:-0.211px">quickosm_highways_all_quezon_city.fgb</div>
<svg class="a" style="left:1428px;top:836px;" width="5" height="8" viewBox="0 0 5 8"><path d="M0.5 0.5L4.5 4L0.5 7.5Z" fill="#555"/></svg>
<svg class="a" style="left:1441px;top:833px;" width="15" height="13" viewBox="0 0 15 13"><path d="M0.6 1.6H5.2L6.7 3.2H14.2V12.2H0.6Z" fill="#f2f2f2" stroke="#888" stroke-width="1"/></svg>
<div class="t" style="left:1463px;top:832.03px;font-size:16.5px;color:#111;font-weight:400;">projects</div>
<svg class="a" style="left:1412px;top:861px;" width="5" height="8" viewBox="0 0 5 8"><path d="M0.5 0.5L4.5 4L0.5 7.5Z" fill="#555"/></svg>
<svg class="a" style="left:1425px;top:858px;" width="15" height="13" viewBox="0 0 15 13"><path d="M0.6 1.6H5.2L6.7 3.2H14.2V12.2H0.6Z" fill="#f2f2f2" stroke="#888" stroke-width="1"/></svg>
<div class="t" style="left:1447px;top:857.03px;font-size:16.5px;color:#111;font-weight:400;">data</div>
<svg class="a" style="left:1364px;top:886px;" width="5" height="8" viewBox="0 0 5 8"><path d="M0.5 0.5L4.5 4L0.5 7.5Z" fill="#555"/></svg>
<svg class="a" style="left:1377px;top:883px;" width="15" height="14" viewBox="0 0 15 14"><rect x="0.6" y="0.6" width="13.5" height="12.5" rx="1.5" fill="#eee" stroke="#999"/><rect x="7" y="0.6" width="3" height="6" fill="#4a78b0"/></svg>
<div class="t" style="left:1399px;top:882.03px;font-size:16.5px;color:#111;font-weight:400;">Spatial Bookmarks</div>
<svg class="a" style="left:1364px;top:911px;" width="5" height="8" viewBox="0 0 5 8"><path d="M0.5 0.5L4.5 4L0.5 7.5Z" fill="#555"/></svg>
<svg class="a" style="left:1377px;top:908px;" width="15" height="14" viewBox="0 0 15 14"><rect x="0.6" y="0.6" width="13.5" height="12.5" rx="1" fill="#52b846" stroke="#3a8a35"/><path d="M1 1L14 13M14 1L1 13" stroke="#c8f0a0" stroke-width="1.5"/><path d="M5 6L8 9L12 3" stroke="#1a5a1a" stroke-width="1.6" fill="none"/></svg>
<div class="t" style="left:1399px;top:907.03px;font-size:16.5px;color:#111;font-weight:400;">Project Home</div>
<svg class="a" style="left:1364px;top:936px;" width="5" height="8" viewBox="0 0 5 8"><path d="M0.5 0.5L4.5 4L0.5 7.5Z" fill="#555"/></svg>
<svg class="a" style="left:1377px;top:933px;" width="15" height="14" viewBox="0 0 15 14"><rect x="0.6" y="0.6" width="13.5" height="12.5" rx="1.5" fill="#f4f4f4" stroke="#888"/><path d="M4 11V7L7.5 4L11 7V11Z" fill="none" stroke="#444" stroke-width="1"/></svg>
<div class="t" style="left:1399px;top:932.03px;font-size:16.5px;color:#111;font-weight:400;">Home</div>
<div class="a" style="left:1358px;top:950px;width:540px;height:18px;overflow:hidden">
<svg class="a" style="left:6px;top:11px;" width="5" height="8" viewBox="0 0 5 8"><path d="M0.5 0.5L4.5 4L0.5 7.5Z" fill="#555"/></svg>
<svg class="a" style="left:19px;top:8px;" width="15" height="13" viewBox="0 0 15 13"><path d="M0.6 1.6H5.2L6.7 3.2H14.2V12.2H0.6Z" fill="#f2f2f2" stroke="#888" stroke-width="1"/></svg>
<div class="t" style="left:41px;top:7.03px;font-size:16.5px;color:#111;font-weight:400;">/</div>
</div>
<svg class="a" style="left:0;top:0;overflow:hidden" width="1936" height="1097" viewBox="0 0 1936 1097"><defs><clipPath id="mc"><rect x="472" y="197" width="878" height="806"/></clipPath></defs><g clip-path="url(#mc)"><path d="M785.7 400.2 L789.3 394.7 L796.6 386.5 L809.4 384.7 L810.3 380.1 L816.7 379.2 L814.9 374.6 L814.9 366.4 L820.3 361.9 L858.6 361.0 L866.8 361.9 L867.7 367.3 L872.3 368.3 L873.2 361.9 L900.5 360.1 L930.6 360.1 L931.5 373.7 L937.0 373.7 L937.0 369.2 L947.9 364.6 L953.4 365.5 L962.5 363.7 L972.6 358.2 L975.3 347.3 L984.4 341.8 L992.0 335.8 L1001.2 323.1 L1003.9 307.6 L1006.6 293.9 L1017.6 294.8 L1023.0 293.0 L1028.5 294.8 L1035.8 290.2 L1045.8 283.0 L1054.0 279.3 L1054.9 277.5 L1062.2 278.4 L1063.1 266.5 L1072.3 265.6 L1084.1 277.5 L1103.3 272.9 L1106.9 263.8 L1117.8 252.9 L1124.2 238.3 L1137.9 233.7 L1148.8 223.7 L1157.9 222.8 L1164.3 228.3 L1166.2 224.6 L1183.5 216.4 L1188.9 218.2 L1193.5 221.5 L1198.1 219.1 L1203.5 216.0 L1206.3 220.1 L1201.7 227.3 L1199.9 234.6 L1188.9 235.6 L1183.5 241.0 L1179.8 246.5 L1178.0 252.0 L1165.2 262.9 L1168.0 267.5 L1168.9 276.6 L1165.2 287.5 L1159.8 289.3 L1158.9 296.6 L1151.6 299.4 L1150.7 309.4 L1148.8 318.5 L1138.8 330.4 L1140.6 338.6 L1137.0 345.9 L1138.8 351.3 L1137.0 364.1 L1138.8 372.3 L1143.4 370.5 L1155.2 377.8 L1153.4 389.6 L1147.0 393.3 L1139.7 400.0 L1138.8 407.3 L1137.9 413.7 L1141.5 413.7 L1145.2 420.1 L1150.7 423.7 L1152.5 429.2 L1155.2 423.7 L1161.6 418.2 L1170.7 422.8 L1178.0 421.9 L1184.4 417.3 L1185.3 413.7 L1187.1 420.1 L1191.7 427.3 L1193.5 435.6 L1188.9 440.1 L1178.0 441.9 L1168.9 447.4 L1167.1 452.9 L1168.0 462.0 L1166.2 467.5 L1167.1 476.6 L1164.3 487.5 L1162.5 498.5 L1158.9 503.9 L1155.2 501.2 L1153.4 493.0 L1147.9 488.4 L1137.9 484.8 L1131.5 491.2 L1129.7 503.9 L1131.5 516.7 L1141.5 523.1 L1147.0 526.7 L1147.0 536.7 L1140.6 542.2 L1128.8 544.0 L1119.7 545.9 L1112.4 551.3 L1110.5 564.1 L1110.5 578.7 L1113.3 591.4 L1112.4 600.0 L1106.9 608.2 L1103.3 618.2 L1097.8 627.3 L1090.5 633.7 L1085.0 635.6 L1077.7 643.8 L1068.6 651.0 L1062.2 655.6 L1059.5 660.2 L1060.4 669.3 L1057.7 676.6 L1055.9 681.1 L1050.4 672.9 L1044.9 664.7 L1035.8 671.1 L1023.0 685.7 L1021.2 694.8 L1019.4 707.6 L1020.3 713.0 L1016.7 718.5 L1013.0 727.6 L1004.8 724.0 L1003.9 731.3 L1009.4 740.4 L1013.9 745.9 L1013.0 751.3 L1013.9 758.6 L997.5 762.3 L993.9 767.7 L990.2 775.0 L990.2 780.5 L982.9 786.0 L975.6 793.3 L971.1 800.0 L972.9 812.8 L970.2 820.1 L960.1 824.6 L962.9 839.2 L968.3 852.0 L964.7 860.2 L977.5 866.5 L978.4 869.3 L975.6 876.6 L979.3 887.5 L990.2 896.6 L1003.0 905.7 L1013.9 913.0 L1017.6 921.2 L1022.1 927.6 L1025.2 934.0 L1025.8 940.4 L1023.0 944.4 L1019.4 945.9 L1015.7 944.4 L1013.0 940.4 L1011.2 934.9 L1007.5 929.8 L1002.1 926.7 L996.6 926.7 L993.5 930.4 L992.0 938.6 L993.0 945.9 L993.9 953.1 L992.0 964.1 L994.8 981.4 L982.9 983.2 L982.0 975.0 L977.5 971.4 L955.6 966.8 L951.9 968.6 L943.7 967.7 L935.5 972.3 L910.0 979.6 L889.9 983.2 L899.0 955.0 L899.0 938.6 L893.5 925.8 L887.1 913.9 L868.9 922.2 L860.7 902.1 L842.5 905.7 L831.5 901.2 L822.4 903.9 L809.7 914.9 L806.9 905.7 L798.7 903.9 L793.3 901.2 L782.3 889.3 L776.8 887.5 L774.1 892.1 L760.4 890.2 L756.8 885.7 L751.3 885.7 L744.0 903.9 L747.7 909.4 L736.7 927.6 L734.9 928.5 L662.0 871.1 L614.6 836.5 L626.4 800.0 L627.3 793.3 L627.3 787.8 L620.1 778.7 L625.5 764.1 L627.3 755.0 L631.0 745.9 L638.3 740.4 L640.1 731.3 L643.8 720.3 L649.2 713.0 L652.9 707.6 L655.6 698.5 L654.7 689.3 L657.4 682.0 L658.3 676.6 L667.5 667.5 L672.9 658.3 L678.4 648.3 L683.0 650.1 L683.9 643.8 L685.7 641.0 L699.4 631.9 L703.9 627.3 L707.6 628.3 L709.4 621.9 L720.3 610.9 L727.6 600.0 L731.3 593.3 L740.4 587.8 L748.6 582.3 L749.5 573.2 L751.3 567.7 L756.8 561.3 L749.5 551.3 L738.6 541.3 L732.2 534.9 L727.6 525.8 L728.5 509.4 L732.2 504.8 L725.8 503.9 L724.9 496.6 L718.5 494.8 L713.9 489.3 L714.9 476.6 L712.1 466.5 L714.9 454.7 L725.8 453.8 L734.0 447.4 L735.8 439.2 L739.5 431.9 L751.3 434.6 L757.7 427.3 L753.1 423.7 L754.1 417.3 L764.1 416.4 L771.4 418.2 L772.3 414.6 L767.7 408.2 L770.5 400.0Z" fill="#fef0d9"/><path d="M756.8 561.3 L765.0 562.3 L773.2 564.1 L777.8 566.8 L782.3 571.4 L787.8 565.9 L796.9 563.2 L800.5 560.4 L801.5 556.8 L806.0 554.1 L809.7 555.9 L814.2 555.9 L824.2 553.1 L827.0 550.4 L830.6 551.3 L830.6 556.8 L846.1 556.8 L846.1 547.7 L847.9 544.0 L843.4 542.2 L842.5 538.6 L838.8 534.9 L842.5 531.3 L849.8 527.6 L848.9 524.0 L855.2 522.2 L860.7 518.5 L863.4 514.9 L873.5 513.9 L889.9 513.0 L895.4 510.3 L893.5 513.0 L892.6 553.1 L902.6 554.1 L903.6 561.3 L909.9 561.3 L931.9 559.5 L941.0 560.4 L940.6 600.0 L939.5 610.9 L939.2 621.9 L937.3 645.6 L939.2 660.2 L943.7 673.8 L931.3 684.7 L922.2 688.8 L854.7 687.4 L853.8 692.0 L863.8 698.3 L858.3 706.5 L856.5 709.3 L856.5 709.3 L854.7 704.7 L847.4 702.0 L844.7 697.4 L843.8 692.9 L840.1 689.2 L841.0 683.8 L838.3 678.3 L832.8 673.7 L832.5 641.9 L826.1 643.8 L818.8 645.6 L817.0 649.2 L811.5 644.7 L806.0 646.5 L801.5 648.3 L798.7 643.8 L793.3 639.2 L786.0 636.5 L775.9 639.2 L771.4 636.5 L761.3 638.3 L756.8 643.8 L751.3 649.2 L745.9 652.9 L735.8 654.7 L727.6 662.0 L722.2 665.6 L724.0 669.3 L718.5 680.2 L716.7 694.8 L720.3 707.6 L717.6 709.4 L714.9 724.0 L711.2 738.6 L705.7 742.2 L704.8 753.1 L701.2 760.4 L691.2 757.7 L682.0 756.8 L684.8 751.3 L678.4 744.0 L674.7 738.6 L670.2 727.6 L668.4 714.9 L671.1 707.6 L652.9 707.6 L655.6 698.5 L654.7 689.3 L657.4 682.0 L658.3 676.6 L667.5 667.5 L672.9 658.3 L678.4 648.3 L683.0 650.1 L683.9 643.8 L685.7 641.0 L699.4 631.9 L703.9 627.3 L707.6 628.3 L709.4 621.9 L720.3 610.9 L727.6 600.0 L731.3 593.3 L740.4 587.8 L748.6 582.3 L749.5 573.2 L751.3 567.7Z" fill="#fc8d59"/><path d="M749.5 551.3 L738.6 541.3 L732.2 534.9 L727.6 525.8 L728.5 509.4 L732.2 504.8 L725.8 503.9 L724.9 496.6 L718.5 494.8 L713.9 489.3 L714.9 476.6 L712.1 466.5 L714.9 454.7 L725.8 453.8 L734.0 447.4 L735.8 439.2 L739.5 431.9 L751.3 434.6 L757.7 427.3 L753.1 423.7 L754.1 417.3 L764.1 416.4 L771.4 418.2 L772.3 414.6 L767.7 408.2 L770.5 400.0 L785.7 400.2 L789.3 394.7 L796.6 386.5 L809.4 384.7 L810.3 380.1 L816.7 379.2 L814.9 374.6 L814.9 366.4 L820.3 361.9 L858.6 361.0 L866.8 361.9 L867.7 367.3 L872.3 368.3 L873.2 361.9 L900.5 360.1 L930.6 360.1 L931.5 373.7 L937.0 373.7 L937.0 369.2 L947.9 364.6 L953.4 365.5 L962.5 363.7 L972.6 358.2 L975.3 347.3 L984.4 341.8 L992.0 335.8 L1001.2 323.1 L1003.9 307.6 L1006.6 293.9 L1017.6 294.8 L1023.0 293.0 L1028.5 294.8 L1035.8 290.2 L1045.8 283.0 L1054.0 279.3 L1054.9 277.5 L1062.2 278.4 L1063.1 266.5 L1072.3 265.6 L1084.1 277.5 L1103.3 272.9 L1106.9 263.8 L1117.8 252.9 L1124.2 238.3 L1137.9 233.7 L1148.8 223.7 L1157.9 222.8 L1164.3 228.3 L1166.2 224.6 L1183.5 216.4 L1188.9 218.2 L1193.5 221.5 L1198.1 219.1 L1203.5 216.0 L1206.3 220.1 L1201.7 227.3 L1199.9 234.6 L1188.9 235.6 L1183.5 241.0 L1179.8 246.5 L1178.0 252.0 L1165.2 262.9 L1168.0 267.5 L1168.9 276.6 L1165.2 287.5 L1159.8 289.3 L1158.9 296.6 L1151.6 299.4 L1150.7 309.4 L1148.8 318.5 L1138.8 330.4 L1140.6 338.6 L1137.0 345.9 L1138.8 351.3 L1137.0 364.1 L1138.8 372.3 L1143.4 370.5 L1155.2 377.8 L1153.4 389.6 L1147.0 393.3 L1139.7 400.0 L1138.8 407.3 L1137.9 413.7 L1137.9 413.7 L1136.1 418.2 L1123.3 423.7 L1116.0 430.1 L1114.2 436.5 L1116.0 442.8 L1110.5 444.7 L1103.3 441.9 L1092.3 437.4 L1085.0 437.4 L1074.1 443.8 L1065.0 449.2 L1064.1 454.7 L1066.8 458.3 L1061.3 467.5 L1053.1 472.0 L1044.9 474.7 L1041.3 476.6 L1035.8 473.8 L1025.8 474.7 L1023.0 482.0 L1017.6 484.8 L1004.8 488.4 L994.8 493.0 L990.2 502.1 L988.4 512.1 L983.8 514.9 L970.2 515.8 L959.2 520.3 L953.8 527.6 L950.1 538.6 L944.6 551.3 L941.0 560.4 L931.9 559.5 L909.9 561.3 L903.6 561.3 L902.6 554.1 L892.6 553.1 L893.5 513.0 L895.4 510.3 L889.9 513.0 L873.5 513.9 L863.4 514.9 L860.7 518.5 L855.2 522.2 L848.9 524.0 L849.8 527.6 L842.5 531.3 L838.8 534.9 L842.5 538.6 L843.4 542.2 L847.9 544.0 L846.1 547.7 L846.1 556.8 L830.6 556.8 L830.6 551.3 L827.0 550.4 L824.2 553.1 L814.2 555.9 L809.7 555.9 L806.0 554.1 L801.5 556.8 L800.5 560.4 L796.9 563.2 L787.8 565.9 L782.3 571.4 L777.8 566.8 L773.2 564.1 L765.0 562.3 L756.8 561.3Z" fill="#fdcc8a"/><path d="M941.0 560.4 L944.6 551.3 L950.1 538.6 L953.8 527.6 L959.2 520.3 L970.2 515.8 L983.8 514.9 L988.4 512.1 L990.2 502.1 L994.8 493.0 L1004.8 488.4 L1017.6 484.8 L1023.0 482.0 L1025.8 474.7 L1035.8 473.8 L1041.3 476.6 L1044.9 474.7 L1053.1 472.0 L1061.3 467.5 L1066.8 458.3 L1064.1 454.7 L1065.0 449.2 L1074.1 443.8 L1085.0 437.4 L1092.3 437.4 L1103.3 441.9 L1110.5 444.7 L1116.0 442.8 L1114.2 436.5 L1116.0 430.1 L1123.3 423.7 L1136.1 418.2 L1137.9 413.7 L1141.5 413.7 L1145.2 420.1 L1150.7 423.7 L1152.5 429.2 L1155.2 423.7 L1161.6 418.2 L1170.7 422.8 L1178.0 421.9 L1184.4 417.3 L1185.3 413.7 L1187.1 420.1 L1191.7 427.3 L1193.5 435.6 L1188.9 440.1 L1178.0 441.9 L1168.9 447.4 L1167.1 452.9 L1168.0 462.0 L1166.2 467.5 L1167.1 476.6 L1164.3 487.5 L1162.5 498.5 L1158.9 503.9 L1155.2 501.2 L1153.4 493.0 L1147.9 488.4 L1137.9 484.8 L1131.5 491.2 L1129.7 503.9 L1131.5 516.7 L1141.5 523.1 L1147.0 526.7 L1147.0 536.7 L1140.6 542.2 L1128.8 544.0 L1119.7 545.9 L1112.4 551.3 L1110.5 564.1 L1110.5 578.7 L1113.3 591.4 L1112.4 600.0 L1106.9 608.2 L1103.3 618.2 L1097.8 627.3 L1090.5 633.7 L1085.0 635.6 L1077.7 643.8 L1068.6 651.0 L1062.2 655.6 L1059.5 660.2 L1059.5 660.2 L1058.6 653.8 L1055.9 652.9 L1049.5 648.3 L1048.6 641.9 L1034.0 639.2 L1014.8 638.3 L1009.4 626.4 L995.7 623.7 L975.6 650.1 L974.7 631.9 L962.0 631.0 L960.1 622.8 L939.2 621.9 L940.6 600.0 L939.5 610.9Z" fill="#e34a33"/><path d="M939.2 621.9 L960.1 622.8 L962.0 631.0 L974.7 631.9 L975.6 650.1 L995.7 623.7 L1009.4 626.4 L1014.8 638.3 L1034.0 639.2 L1048.6 641.9 L1049.5 648.3 L1055.9 652.9 L1058.6 653.8 L1059.5 660.2 L1060.4 669.3 L1057.7 676.6 L1055.9 681.1 L1050.4 672.9 L1044.9 664.7 L1041.3 662.9 L1035.8 659.3 L1026.7 662.0 L1021.2 661.1 L968.3 682.0 L956.9 681.9 L931.3 684.7 L943.7 673.8 L939.2 660.2 L937.3 645.6Z" fill="#fc8d59"/><path d="M956.9 681.9 L968.3 682.0 L1021.2 661.1 L1026.7 662.0 L1035.8 659.3 L1041.3 662.9 L1044.9 664.7 L1035.8 671.1 L1023.0 685.7 L1021.2 694.8 L1019.4 707.6 L1020.3 713.0 L1016.7 718.5 L1013.0 727.6 L1004.8 724.0 L1003.9 731.3 L1009.4 740.4 L1013.9 745.9 L1013.0 751.3 L1013.9 758.6 L997.5 762.3 L995.7 753.1 L986.6 749.5 L975.6 755.0 L966.5 751.3 L955.6 749.5 L966.5 738.6 L967.4 725.8 L960.1 725.8 L960.1 705.7 L967.4 699.4 L964.7 691.2Z" fill="#fdcc8a" stroke="#fff" stroke-opacity="0.8" stroke-width="0.8"/><path d="M854.7 687.4 L922.2 688.8 L931.3 684.7 L956.9 681.9 L964.7 691.2 L967.4 699.4 L960.1 705.7 L960.1 725.8 L967.4 725.8 L966.5 738.6 L955.6 749.5 L931.9 769.6 L915.5 787.8 L910.0 793.3 L917.3 780.5 L913.6 773.2 L919.1 764.1 L920.9 745.9 L910.0 745.9 L909.9 744.0 L899.0 745.9 L895.4 727.6 L891.7 718.5 L873.5 722.2 L869.8 724.0 L870.2 723.0 L869.3 719.3 L863.8 714.7 L856.5 709.3 L858.3 706.5 L863.8 698.3 L853.8 692.0Z" fill="#fdcc8a" stroke="#fff" stroke-opacity="0.8" stroke-width="0.8"/><path d="M872.9 685.6 L875.7 676.5 L880.2 670.1 L886.6 671.0 L891.2 665.5 L900.3 666.4 L911.2 670.1 L918.5 673.7 L932.2 679.2 L922.2 688.3 L891.2 687.4 L872.9 686.5Z" fill="#fef0d9" stroke="#fff" stroke-opacity="0.8" stroke-width="0.8"/><path d="M883.9 562.7 L941.5 561.5 L940.6 600.0 L939.5 610.9 L939.2 621.9 L937.3 645.6 L935.0 648.4 L889.4 642.0 L871.2 639.3 L859.3 641.1 L857.5 643.9 L843.8 646.6 L839.3 651.2 L835.5 659.1 L833.5 661.0 L833.8 641.1 L834.7 629.3 L840.2 618.3 L842.9 615.6 L849.3 611.0 L857.5 598.3 L864.8 590.1 L871.2 586.4 L879.4 584.6 L883.9 581.9Z" fill="#e34a33" stroke="#fff" stroke-opacity="0.8" stroke-width="0.8"/><path d="M720.3 610.9 L727.6 600.0 L731.3 593.3 L740.4 587.8 L748.6 582.3 L749.5 573.2 L751.3 567.7 L756.8 561.3 L765.0 562.3 L773.2 564.1 L777.8 566.8 L782.3 571.4 L786.4 603.8 L780.0 606.0 L764.1 610.9 L756.8 617.3Z" fill="#fdcc8a" stroke="#fff" stroke-opacity="0.8" stroke-width="0.8"/><path d="M724.0 611.9 L756.8 617.3 L755.0 625.5 L756.8 634.6 L761.3 638.3 L756.8 643.8 L751.3 649.2 L745.9 652.9 L735.8 654.7 L727.6 662.0 L722.2 660.2 L725.8 636.5Z" fill="#fef0d9" stroke="#fff" stroke-opacity="0.8" stroke-width="0.8"/><path d="M676.6 680.2 L685.7 684.8 L694.8 689.3 L702.1 688.4 L709.4 689.3 L716.7 690.2 L716.7 694.8 L720.3 707.6 L717.6 709.4 L714.9 724.0 L711.2 738.6 L705.7 742.2 L704.8 753.1 L701.2 760.4 L691.2 757.7 L682.0 756.8 L684.8 751.3 L678.4 744.0 L674.7 738.6 L670.2 727.6 L668.4 714.9 L671.1 707.6 L672.9 694.8Z" fill="#fdcc8a" stroke="#fff" stroke-opacity="0.8" stroke-width="0.8"/><path d="M667.5 667.5 L676.6 680.2 L672.9 694.8 L671.1 707.6 L652.9 707.6 L655.6 698.5 L654.7 689.3 L657.4 682.0 L658.3 676.6Z" fill="#fef0d9" stroke="#fff" stroke-opacity="0.8" stroke-width="0.8"/><path d="M720.3 707.6 L716.7 694.8 L718.5 680.2 L724.0 669.3 L722.2 665.6 L727.6 662.0 L735.8 654.7 L745.9 652.9 L751.3 649.2 L756.8 643.8 L761.3 638.3 L771.4 636.5 L775.9 639.2 L786.0 636.5 L793.3 639.2 L798.7 643.8 L801.5 648.3 L806.0 646.5 L811.5 644.7 L817.0 649.2 L818.8 645.6 L826.1 643.8 L832.5 641.9 L832.5 672.9 L824.2 672.0 L813.3 672.9 L800.5 672.0 L789.6 672.9 L782.3 678.4 L771.4 683.9 L765.0 683.0 L755.0 684.8 L738.6 691.2 L732.2 693.0 L732.2 705.7Z" fill="#fc8d59" stroke="#fff" stroke-opacity="0.8" stroke-width="0.8"/><path d="M765.0 683.0 L782.3 678.4 L789.6 672.9 L802.4 672.9 L805.1 676.6 L800.5 720.3 L812.4 724.0 L820.6 751.3 L807.8 757.7 L796.9 738.6 L782.3 716.7 L764.1 709.4Z" fill="#fdcc8a" stroke="#fff" stroke-opacity="0.8" stroke-width="0.8"/><path d="M693.0 845.6 L718.5 822.8 L725.8 829.2 L728.5 834.6 L735.8 835.6 L736.7 839.2 L729.4 841.9 L728.5 852.9 L721.2 862.9 L696.6 864.7Z" fill="#fc8d59" stroke="#fff" stroke-opacity="0.8" stroke-width="0.8"/><path d="M756.8 561.3 L749.5 551.3 L738.6 541.3 L732.2 534.9 L727.6 525.8 L728.5 509.4 L732.2 504.8 L725.8 503.9 L724.9 496.6 L718.5 494.8 L713.9 489.3 L714.9 476.6 L712.1 466.5 L714.9 454.7 L725.8 453.8 L734.0 447.4 L735.8 439.2 L739.5 431.9 L751.3 434.6 L757.7 427.3 L753.1 423.7 L754.1 417.3 L764.1 416.4 L771.4 418.2 L772.3 414.6 L767.7 408.2 L770.5 400.0 L785.7 400.2 L789.3 394.7 L796.6 386.5 L809.4 384.7 L810.3 380.1 L816.7 379.2 L814.9 374.6 L814.9 366.4 L820.3 361.9 L858.6 361.0 L866.8 361.9 L867.7 367.3 L872.3 368.3 L873.2 412.9 L859.5 413.8 L860.4 423.9 L864.1 442.1 L855.9 443.0 L855.0 471.3 L867.7 474.0 L868.6 480.4 L875.0 483.1 L875.0 496.8 L860.4 490.4 L845.9 493.1 L844.0 504.1 L847.7 515.0 L851.3 523.2 L848.9 524.0 L849.8 527.6 L842.5 531.3 L838.8 534.9 L842.5 538.6 L843.4 542.2 L847.9 544.0 L846.1 547.7 L846.1 556.8 L830.6 556.8 L830.6 551.3 L827.0 550.4 L824.2 553.1 L814.2 555.9 L809.7 555.9 L806.0 554.1 L801.5 556.8 L800.5 560.4 L796.9 563.2 L787.8 565.9 L782.3 571.4 L777.8 566.8 L773.2 564.1 L765.0 562.3 L756.8 561.3Z" fill="#fc8d59" stroke="#fff" stroke-opacity="0.8" stroke-width="0.8"/><path d="M770.2 398.3 L785.7 400.2 L796.6 386.5 L809.4 384.7 L816.7 381.0 L812.1 394.7 L814.9 400.2 L811.2 406.5 L816.7 412.9 L817.6 423.9 L809.4 425.7 L802.1 427.5 L797.5 433.0 L799.4 442.1 L795.7 442.1 L791.2 433.0 L787.5 431.2 L780.2 427.5 L778.4 420.2 L772.9 416.6 L772.0 412.9 L768.4 409.3 L769.3 403.8Z" fill="#fdcc8a" stroke="#fff" stroke-opacity="0.8" stroke-width="0.8"/><path d="M798.5 431.2 L807.6 425.7 L816.7 426.6 L820.3 438.5 L822.2 453.0 L824.0 456.7 L816.7 460.3 L809.4 471.3 L802.1 474.0 L797.5 471.3 L796.6 460.3 L796.6 449.4 L795.7 442.1Z" fill="#fef0d9" stroke="#fff" stroke-opacity="0.8" stroke-width="0.8"/><path d="M882.3 392.9 L887.8 389.2 L942.5 387.4 L947.0 384.7 L947.9 400.2 L948.9 416.6 L947.0 442.1 L948.9 447.6 L946.1 454.9 L951.6 467.6 L958.9 478.6 L973.5 484.0 L982.6 485.9 L983.5 488.6 L973.5 491.3 L955.2 491.3 L930.6 491.3 L928.8 474.9 L922.4 443.9 L906.0 441.2 L898.7 449.4 L889.6 465.8 L892.3 469.4 L875.0 482.2 L867.7 478.6 L867.7 474.0 L855.0 471.3 L855.0 458.5 L890.5 423.9 L883.2 412.9Z" fill="#fef0d9" stroke="#fff" stroke-opacity="0.8" stroke-width="0.8"/><path d="M910.0 400.0 L948.3 400.0 L949.2 423.7 L945.6 438.3 L948.3 445.6 L947.4 454.7 L953.8 469.3 L961.0 480.2 L972.0 483.9 L981.1 485.7 L984.7 491.2 L990.2 493.0 L979.3 487.5 L964.7 491.2 L946.5 487.5 L930.1 492.1 L928.2 493.0 L927.3 476.6 L924.6 463.8 L920.9 440.1 L915.5 438.3 L910.0 441.9Z" fill="#fef0d9"/><path d="M906.0 441.2 L922.4 443.9 L927.0 474.9 L928.8 491.3 L926.1 509.6 L909.7 515.0 L896.9 511.4 L886.0 507.7 L875.9 496.8 L875.0 482.2 L892.3 469.4 L889.6 465.8 L898.7 449.4Z" fill="#fdcc8a" stroke="#fff" stroke-opacity="0.8" stroke-width="0.8"/><path d="M845.9 493.1 L860.4 490.4 L875.0 496.8 L884.1 504.1 L889.6 511.4 L875.0 515.0 L864.1 516.8 L851.3 523.2 L847.7 515.0 L844.0 504.1Z" fill="#fdcc8a" stroke="#fff" stroke-opacity="0.8" stroke-width="0.8"/><path d="M855.9 443.0 L864.1 442.1 L865.0 453.0 L855.0 458.5Z" fill="#fdcc8a" stroke="#fff" stroke-opacity="0.8" stroke-width="0.8"/><path d="M896.0 510.5 L909.7 515.0 L926.1 509.6 L928.8 491.3 L944.3 490.4 L964.4 492.2 L983.5 488.6 L993.5 493.1 L1009.9 485.9 L1004.8 488.4 L994.8 493.0 L990.2 502.1 L988.4 512.1 L983.8 514.9 L970.2 515.8 L959.2 520.3 L953.8 527.6 L950.1 538.6 L944.6 551.3 L941.0 560.4 L931.9 559.5 L909.9 561.3 L903.6 561.3 L902.6 554.1 L892.6 553.1 L893.5 513.0Z" fill="#fc8d59" stroke="#fff" stroke-opacity="0.8" stroke-width="0.8"/><path d="M1023.0 484.8 L1037.6 503.9 L1039.4 507.6 L1037.6 518.5 L1040.4 526.7 L1030.3 534.9 L1041.3 545.9 L1035.8 553.1 L1034.9 558.6 L1017.6 558.6 L995.7 558.6 L988.4 565.0 L979.3 558.6 L974.7 562.3 L941.9 561.3 L944.6 551.3 L950.1 538.6 L953.8 527.6 L959.2 520.3 L970.2 515.8 L983.8 514.9 L988.4 512.1 L990.2 502.1 L994.8 493.0 L1004.8 488.4 L1017.6 484.8Z" fill="#b30000" stroke="#fff" stroke-opacity="0.8" stroke-width="0.8"/><circle cx="772.3" cy="463.8" r="6.3" fill="#fef0d9"/><path d="M729.4 502.1 L728.5 487.5 L735.8 483.0 L744.0 481.1 L745.9 470.2 L755.0 465.6 L764.1 465.6 L772.3 470.2 L776.8 472.9 L780.5 480.2 L784.1 489.3 L793.3 490.2 L796.9 494.8 L804.2 494.8 L813.3 497.5 L822.4 502.1 L827.9 510.3 L837.0 512.1 L844.3 513.0" fill="none" stroke="#fff" stroke-opacity="0.85" stroke-width="0.9"/><path d="M732.2 518.5 L744.0 519.4 L745.9 522.2 L759.5 524.0 L771.4 535.8 L782.3 535.8 L791.4 534.9 L800.5 534.9 L811.5 535.8 L822.4 534.9 L833.4 539.5 L838.8 535.8" fill="none" stroke="#fff" stroke-opacity="0.85" stroke-width="0.9"/><path d="M823.3 454.7 L831.5 458.3 L835.2 469.3 L831.5 480.2 L837.0 483.9 L846.1 487.5 L847.9 493.0" fill="none" stroke="#fff" stroke-opacity="0.85" stroke-width="0.9"/><path d="M793.3 489.3 L797.8 477.5 L796.9 474.7" fill="none" stroke="#fff" stroke-opacity="0.85" stroke-width="0.9"/><path d="M817.0 423.7 L824.2 418.2 L831.5 427.3 L835.2 423.7 L858.9 423.7" fill="none" stroke="#fff" stroke-opacity="0.85" stroke-width="0.9"/><path d="M1112.4 447.4 L1112.4 472.9 L1103.3 478.4 L1094.1 483.9 L1077.7 496.6 L1070.4 498.5 L1066.8 502.1 L1064.1 509.4 L1066.8 518.5 L1065.0 527.6 L1052.2 542.2 L1044.9 549.5 L1049.5 560.4 L1061.3 558.6 L1074.1 560.4 L1092.3 562.3 L1108.7 562.3" fill="none" stroke="#fff" stroke-opacity="0.85" stroke-width="0.9"/><path d="M1012.1 558.6 L1013.0 582.3 L1007.5 600.0 L1004.8 600.0 L995.7 623.7" fill="none" stroke="#fff" stroke-opacity="0.85" stroke-width="0.9"/><path d="M786.4 603.8 L796.4 591.9 L803.7 586.0 L816.5 581.4 L822.8 581.9 L837.4 576.4 L838.3 565.5 L844.7 562.7 L883.9 562.7" fill="none" stroke="#fff" stroke-opacity="0.85" stroke-width="0.9"/><path d="M910.0 643.8 L934.6 648.3 L937.3 645.6" fill="none" stroke="#fff" stroke-opacity="0.85" stroke-width="0.9"/><path d="M899.0 745.9 L909.9 744.0" fill="none" stroke="#fff" stroke-opacity="0.85" stroke-width="0.9"/><path d="M636.5 773.2 L672.9 764.1 L702.1 760.4" fill="none" stroke="#fff" stroke-opacity="0.85" stroke-width="0.9"/><path d="M718.5 713.0 L727.6 727.6 L738.6 742.2 L764.1 755.0 L800.5 756.8" fill="none" stroke="#fff" stroke-opacity="0.85" stroke-width="0.9"/><path d="M778.7 716.7 L767.7 800.0" fill="none" stroke="#fff" stroke-opacity="0.85" stroke-width="0.9"/><path d="M636.5 823.7 L669.3 818.2 L702.1 807.3" fill="none" stroke="#fff" stroke-opacity="0.85" stroke-width="0.9"/><path d="M764.1 807.3 L782.3 821.9 L793.3 834.6 L844.3 843.8" fill="none" stroke="#fff" stroke-opacity="0.85" stroke-width="0.9"/><path d="M724.0 862.0 L764.1 854.7 L800.5 843.8 L855.2 832.8" fill="none" stroke="#fff" stroke-opacity="0.85" stroke-width="0.9"/><path d="M756.8 836.5 L773.2 860.2 L778.7 885.7" fill="none" stroke="#fff" stroke-opacity="0.85" stroke-width="0.9"/><path d="M796.9 800.0 L793.3 834.6" fill="none" stroke="#fff" stroke-opacity="0.85" stroke-width="0.9"/><path d="M663.8 843.8 L676.6 894.8" fill="none" stroke="#fff" stroke-opacity="0.85" stroke-width="0.9"/><path d="M702.1 882.0 L738.6 876.6" fill="none" stroke="#fff" stroke-opacity="0.85" stroke-width="0.9"/><path d="M791.4 894.8 L851.6 854.7" fill="none" stroke="#fff" stroke-opacity="0.85" stroke-width="0.9"/><path d="M855.2 818.2 L909.9 807.3" fill="none" stroke="#fff" stroke-opacity="0.85" stroke-width="0.9"/><path d="M864.4 851.0 L909.9 836.5" fill="none" stroke="#fff" stroke-opacity="0.85" stroke-width="0.9"/><path d="M873.5 891.2 L909.9 876.6" fill="none" stroke="#fff" stroke-opacity="0.85" stroke-width="0.9"/><path d="M910.0 827.3 L946.5 821.9 L957.4 814.6" fill="none" stroke="#fff" stroke-opacity="0.85" stroke-width="0.9"/><path d="M910.0 887.5 L939.2 882.0 L964.7 878.4" fill="none" stroke="#fff" stroke-opacity="0.85" stroke-width="0.9"/><path d="M910.0 938.6 L946.5 933.1 L990.2 929.4" fill="none" stroke="#fff" stroke-opacity="0.85" stroke-width="0.9"/><path d="M942.8 858.3 L937.3 933.1" fill="none" stroke="#fff" stroke-opacity="0.85" stroke-width="0.9"/><path d="M920.9 803.6 L931.9 854.7 L928.2 883.9" fill="none" stroke="#fff" stroke-opacity="0.85" stroke-width="0.9"/><path d="M915.5 787.8 L931.9 764.1 L946.5 760.4" fill="none" stroke="#fff" stroke-opacity="0.85" stroke-width="0.9"/><path d="M627.3 762.7 L679.3 757.5 L717.4 752.3 L736.4 747.2 L772.8 742.0" fill="none" stroke="#fff" stroke-opacity="0.85" stroke-width="0.9"/><path d="M637.7 787.0 L682.7 781.8 L724.3 776.6 L765.9 771.4" fill="none" stroke="#fff" stroke-opacity="0.85" stroke-width="0.9"/><path d="M644.6 823.4 L693.1 809.5 L717.4 800.8 L741.6 787.0" fill="none" stroke="#fff" stroke-opacity="0.85" stroke-width="0.9"/><path d="M681.0 757.5 L684.5 797.4 L691.4 811.2" fill="none" stroke="#fff" stroke-opacity="0.85" stroke-width="0.9"/><path d="M722.6 752.3 L727.8 773.1 L724.3 776.6 L713.9 800.8 L707.0 814.7" fill="none" stroke="#fff" stroke-opacity="0.85" stroke-width="0.9"/><path d="M772.8 714.2 L765.9 771.4 L760.7 814.7 L758.9 845.9" fill="none" stroke="#fff" stroke-opacity="0.85" stroke-width="0.9"/><path d="M731.2 707.3 L765.9 712.5 L776.3 714.2" fill="none" stroke="#fff" stroke-opacity="0.85" stroke-width="0.9"/><path d="M741.6 724.6 L731.2 762.7" fill="none" stroke="#fff" stroke-opacity="0.85" stroke-width="0.9"/><path d="M620.4 793.9 L662.0 787.0" fill="none" stroke="#fff" stroke-opacity="0.85" stroke-width="0.9"/><path d="M630.8 759.3 L642.9 823.4" fill="none" stroke="#fff" stroke-opacity="0.85" stroke-width="0.9"/><path d="M660.2 787.0 L663.7 807.8" fill="none" stroke="#fff" stroke-opacity="0.85" stroke-width="0.9"/><path d="M800.5 800.8 L791.8 833.7" fill="none" stroke="#fff" stroke-opacity="0.85" stroke-width="0.9"/><path d="M762.4 792.2 L800.5 800.8 L842.1 811.2" fill="none" stroke="#fff" stroke-opacity="0.85" stroke-width="0.9"/><path d="M760.7 816.4 L793.6 826.8 L817.8 835.5" fill="none" stroke="#fff" stroke-opacity="0.85" stroke-width="0.9"/><path d="M734.7 835.5 L765.9 833.7 L800.5 842.4 L835.1 845.9" fill="none" stroke="#fff" stroke-opacity="0.85" stroke-width="0.9"/><path d="M662.0 870.1 L713.9 864.9 L757.2 856.3 L800.5 842.4 L843.8 832.0" fill="none" stroke="#fff" stroke-opacity="0.85" stroke-width="0.9"/><path d="M634.2 731.6 L653.3 729.8 L667.2 742.0" fill="none" stroke="#fff" stroke-opacity="0.85" stroke-width="0.9"/><path d="M814.4 769.7 L821.3 787.0 L840.3 814.7" fill="none" stroke="#fff" stroke-opacity="0.85" stroke-width="0.9"/><path d="M720.8 863.2 L741.6 880.0" fill="none" stroke="#fff" stroke-opacity="0.85" stroke-width="0.9"/><path d="M700.1 721.2 L707.0 747.2 L703.5 771.4" fill="none" stroke="#fff" stroke-opacity="0.85" stroke-width="0.9"/><path d="M817.8 742.0 L835.1 755.8 L869.8 762.7" fill="none" stroke="#fff" stroke-opacity="0.85" stroke-width="0.9"/><path d="M840.0 770.5 L859.7 775.5 L881.0 777.1 L912.2 772.2" fill="none" stroke="#fff" stroke-opacity="0.85" stroke-width="0.9"/><path d="M864.6 741.0 L872.8 757.4 L881.0 777.1 L877.7 806.6" fill="none" stroke="#fff" stroke-opacity="0.85" stroke-width="0.9"/><path d="M879.4 754.1 L894.1 752.5 L905.6 749.2" fill="none" stroke="#fff" stroke-opacity="0.85" stroke-width="0.9"/><path d="M889.2 752.5 L887.6 791.9" fill="none" stroke="#fff" stroke-opacity="0.85" stroke-width="0.9"/><path d="M902.3 765.6 L902.3 798.4" fill="none" stroke="#fff" stroke-opacity="0.85" stroke-width="0.9"/><path d="M915.5 749.2 L912.2 777.1" fill="none" stroke="#fff" stroke-opacity="0.85" stroke-width="0.9"/><path d="M840.0 844.4 L889.2 834.5 L925.3 826.3 L954.8 821.4" fill="none" stroke="#fff" stroke-opacity="0.85" stroke-width="0.9"/><path d="M879.4 814.8 L922.0 803.4 L941.7 806.6 L954.8 821.4" fill="none" stroke="#fff" stroke-opacity="0.85" stroke-width="0.9"/><path d="M922.0 806.6 L928.6 864.1" fill="none" stroke="#fff" stroke-opacity="0.85" stroke-width="0.9"/><path d="M885.9 818.1 L908.9 880.0" fill="none" stroke="#fff" stroke-opacity="0.85" stroke-width="0.9"/><path d="M912.2 823.1 L922.0 855.9 L938.4 880.0" fill="none" stroke="#fff" stroke-opacity="0.85" stroke-width="0.9"/><path d="M935.2 847.7 L964.7 842.7" fill="none" stroke="#fff" stroke-opacity="0.85" stroke-width="0.9"/><path d="M840.0 864.1 L872.8 847.7" fill="none" stroke="#fff" stroke-opacity="0.85" stroke-width="0.9"/><path d="M925.3 806.6 L918.8 824.7" fill="none" stroke="#fff" stroke-opacity="0.85" stroke-width="0.9"/><path d="M910.0 854.7 L928.2 851.0 L942.8 858.3" fill="none" stroke="#fff" stroke-opacity="0.85" stroke-width="0.9"/><path d="M961.0 876.6 L964.7 927.6" fill="none" stroke="#fff" stroke-opacity="0.85" stroke-width="0.9"/><path d="M869.8 832.8 L882.6 909.4" fill="none" stroke="#fff" stroke-opacity="0.85" stroke-width="0.9"/><path d="M851.6 927.6 L899.0 916.7" fill="none" stroke="#fff" stroke-opacity="0.85" stroke-width="0.9"/><path d="M858.9 955.0 L899.0 945.9" fill="none" stroke="#fff" stroke-opacity="0.85" stroke-width="0.9"/><path d="M785.7 400.2 L789.3 394.7 L796.6 386.5 L809.4 384.7 L810.3 380.1 L816.7 379.2 L814.9 374.6 L814.9 366.4 L820.3 361.9 L858.6 361.0 L866.8 361.9 L867.7 367.3 L872.3 368.3 L873.2 361.9 L900.5 360.1 L930.6 360.1 L931.5 373.7 L937.0 373.7 L937.0 369.2 L947.9 364.6 L953.4 365.5 L962.5 363.7 L972.6 358.2 L975.3 347.3 L984.4 341.8 L992.0 335.8 L1001.2 323.1 L1003.9 307.6 L1006.6 293.9 L1017.6 294.8 L1023.0 293.0 L1028.5 294.8 L1035.8 290.2 L1045.8 283.0 L1054.0 279.3 L1054.9 277.5 L1062.2 278.4 L1063.1 266.5 L1072.3 265.6 L1084.1 277.5 L1103.3 272.9 L1106.9 263.8 L1117.8 252.9 L1124.2 238.3 L1137.9 233.7 L1148.8 223.7 L1157.9 222.8 L1164.3 228.3 L1166.2 224.6 L1183.5 216.4 L1188.9 218.2 L1193.5 221.5 L1198.1 219.1 L1203.5 216.0 L1206.3 220.1 L1201.7 227.3 L1199.9 234.6 L1188.9 235.6 L1183.5 241.0 L1179.8 246.5 L1178.0 252.0 L1165.2 262.9 L1168.0 267.5 L1168.9 276.6 L1165.2 287.5 L1159.8 289.3 L1158.9 296.6 L1151.6 299.4 L1150.7 309.4 L1148.8 318.5 L1138.8 330.4 L1140.6 338.6 L1137.0 345.9 L1138.8 351.3 L1137.0 364.1 L1138.8 372.3 L1143.4 370.5 L1155.2 377.8 L1153.4 389.6 L1147.0 393.3 L1139.7 400.0 L1138.8 407.3 L1137.9 413.7 L1141.5 413.7 L1145.2 420.1 L1150.7 423.7 L1152.5 429.2 L1155.2 423.7 L1161.6 418.2 L1170.7 422.8 L1178.0 421.9 L1184.4 417.3 L1185.3 413.7 L1187.1 420.1 L1191.7 427.3 L1193.5 435.6 L1188.9 440.1 L1178.0 441.9 L1168.9 447.4 L1167.1 452.9 L1168.0 462.0 L1166.2 467.5 L1167.1 476.6 L1164.3 487.5 L1162.5 498.5 L1158.9 503.9 L1155.2 501.2 L1153.4 493.0 L1147.9 488.4 L1137.9 484.8 L1131.5 491.2 L1129.7 503.9 L1131.5 516.7 L1141.5 523.1 L1147.0 526.7 L1147.0 536.7 L1140.6 542.2 L1128.8 544.0 L1119.7 545.9 L1112.4 551.3 L1110.5 564.1 L1110.5 578.7 L1113.3 591.4 L1112.4 600.0 L1106.9 608.2 L1103.3 618.2 L1097.8 627.3 L1090.5 633.7 L1085.0 635.6 L1077.7 643.8 L1068.6 651.0 L1062.2 655.6 L1059.5 660.2 L1060.4 669.3 L1057.7 676.6 L1055.9 681.1 L1050.4 672.9 L1044.9 664.7 L1035.8 671.1 L1023.0 685.7 L1021.2 694.8 L1019.4 707.6 L1020.3 713.0 L1016.7 718.5 L1013.0 727.6 L1004.8 724.0 L1003.9 731.3 L1009.4 740.4 L1013.9 745.9 L1013.0 751.3 L1013.9 758.6 L997.5 762.3 L993.9 767.7 L990.2 775.0 L990.2 780.5 L982.9 786.0 L975.6 793.3 L971.1 800.0 L972.9 812.8 L970.2 820.1 L960.1 824.6 L962.9 839.2 L968.3 852.0 L964.7 860.2 L977.5 866.5 L978.4 869.3 L975.6 876.6 L979.3 887.5 L990.2 896.6 L1003.0 905.7 L1013.9 913.0 L1017.6 921.2 L1022.1 927.6 L1025.2 934.0 L1025.8 940.4 L1023.0 944.4 L1019.4 945.9 L1015.7 944.4 L1013.0 940.4 L1011.2 934.9 L1007.5 929.8 L1002.1 926.7 L996.6 926.7 L993.5 930.4 L992.0 938.6 L993.0 945.9 L993.9 953.1 L992.0 964.1 L994.8 981.4 L982.9 983.2 L982.0 975.0 L977.5 971.4 L955.6 966.8 L951.9 968.6 L943.7 967.7 L935.5 972.3 L910.0 979.6 L889.9 983.2 L899.0 955.0 L899.0 938.6 L893.5 925.8 L887.1 913.9 L868.9 922.2 L860.7 902.1 L842.5 905.7 L831.5 901.2 L822.4 903.9 L809.7 914.9 L806.9 905.7 L798.7 903.9 L793.3 901.2 L782.3 889.3 L776.8 887.5 L774.1 892.1 L760.4 890.2 L756.8 885.7 L751.3 885.7 L744.0 903.9 L747.7 909.4 L736.7 927.6 L734.9 928.5 L662.0 871.1 L614.6 836.5 L626.4 800.0 L627.3 793.3 L627.3 787.8 L620.1 778.7 L625.5 764.1 L627.3 755.0 L631.0 745.9 L638.3 740.4 L640.1 731.3 L643.8 720.3 L649.2 713.0 L652.9 707.6 L655.6 698.5 L654.7 689.3 L657.4 682.0 L658.3 676.6 L667.5 667.5 L672.9 658.3 L678.4 648.3 L683.0 650.1 L683.9 643.8 L685.7 641.0 L699.4 631.9 L703.9 627.3 L707.6 628.3 L709.4 621.9 L720.3 610.9 L727.6 600.0 L731.3 593.3 L740.4 587.8 L748.6 582.3 L749.5 573.2 L751.3 567.7 L756.8 561.3 L749.5 551.3 L738.6 541.3 L732.2 534.9 L727.6 525.8 L728.5 509.4 L732.2 504.8 L725.8 503.9 L724.9 496.6 L718.5 494.8 L713.9 489.3 L714.9 476.6 L712.1 466.5 L714.9 454.7 L725.8 453.8 L734.0 447.4 L735.8 439.2 L739.5 431.9 L751.3 434.6 L757.7 427.3 L753.1 423.7 L754.1 417.3 L764.1 416.4 L771.4 418.2 L772.3 414.6 L767.7 408.2 L770.5 400.0Z" fill="none" stroke="#1e1e1e" stroke-width="3.1" stroke-linejoin="round"/><path d="M756.8 561.3 L765.0 562.3 L773.2 564.1 L777.8 566.8 L782.3 571.4 L787.8 565.9 L796.9 563.2 L800.5 560.4 L801.5 556.8 L806.0 554.1 L809.7 555.9 L814.2 555.9 L824.2 553.1 L827.0 550.4 L830.6 551.3 L830.6 556.8 L846.1 556.8 L846.1 547.7 L847.9 544.0 L843.4 542.2 L842.5 538.6 L838.8 534.9 L842.5 531.3 L849.8 527.6 L848.9 524.0 L855.2 522.2 L860.7 518.5 L863.4 514.9 L873.5 513.9 L889.9 513.0 L895.4 510.3 L893.5 513.0 L892.6 553.1 L902.6 554.1 L903.6 561.3 L909.9 561.3 L931.9 559.5 L941.0 560.4 L944.6 551.3 L950.1 538.6 L953.8 527.6 L959.2 520.3 L970.2 515.8 L983.8 514.9 L988.4 512.1 L990.2 502.1 L994.8 493.0 L1004.8 488.4 L1017.6 484.8 L1023.0 482.0 L1025.8 474.7 L1035.8 473.8 L1041.3 476.6 L1044.9 474.7 L1053.1 472.0 L1061.3 467.5 L1066.8 458.3 L1064.1 454.7 L1065.0 449.2 L1074.1 443.8 L1085.0 437.4 L1092.3 437.4 L1103.3 441.9 L1110.5 444.7 L1116.0 442.8 L1114.2 436.5 L1116.0 430.1 L1123.3 423.7 L1136.1 418.2 L1137.9 413.7" fill="none" stroke="#1e1e1e" stroke-width="3.0" stroke-linejoin="round" stroke-linecap="round"/><path d="M941.0 560.4 L940.6 600.0 L939.5 610.9 L939.2 621.9 L937.3 645.6 L939.2 660.2 L943.7 673.8 L931.3 684.7 L922.2 688.8 L854.7 687.4 L853.8 692.0 L863.8 698.3 L858.3 706.5 L856.5 709.3" fill="none" stroke="#1e1e1e" stroke-width="3.0" stroke-linejoin="round" stroke-linecap="round"/><path d="M652.9 707.6 L671.1 707.6 L668.4 714.9 L670.2 727.6 L674.7 738.6 L678.4 744.0 L684.8 751.3 L682.0 756.8 L691.2 757.7 L701.2 760.4 L704.8 753.1 L705.7 742.2 L711.2 738.6 L714.9 724.0 L717.6 709.4 L720.3 707.6 L716.7 694.8 L718.5 680.2 L724.0 669.3 L722.2 665.6 L727.6 662.0 L735.8 654.7 L745.9 652.9 L751.3 649.2 L756.8 643.8 L761.3 638.3 L771.4 636.5 L775.9 639.2 L786.0 636.5 L793.3 639.2 L798.7 643.8 L801.5 648.3 L806.0 646.5 L811.5 644.7 L817.0 649.2 L818.8 645.6 L826.1 643.8 L832.5 641.9 L832.8 673.7 L838.3 678.3 L841.0 683.8 L840.1 689.2 L843.8 692.9 L844.7 697.4 L847.4 702.0 L854.7 704.7 L856.5 709.3 L863.8 714.7 L869.3 719.3 L870.2 723.0 L866.5 725.7 L862.0 722.0 L854.7 719.3 L849.2 721.1 L846.5 726.6 L847.4 735.7 L843.8 740.0 L843.8 740.0 L744.0 800.0 L727.6 810.9 L720.3 816.4 L691.2 843.8 L662.0 871.1" fill="none" stroke="#1e1e1e" stroke-width="3.0" stroke-linejoin="round" stroke-linecap="round"/><path d="M931.3 684.7 L956.9 681.9 L964.7 691.2 L967.4 699.4 L960.1 705.7 L960.1 725.8 L967.4 725.8 L966.5 738.6 L955.6 749.5 L931.9 769.6 L915.5 787.8 L910.0 793.3 L844.3 815.5 L887.1 913.9" fill="none" stroke="#1e1e1e" stroke-width="3.0" stroke-linejoin="round" stroke-linecap="round"/><path d="M939.2 621.9 L960.1 622.8 L962.0 631.0 L974.7 631.9 L975.6 650.1 L995.7 623.7 L1009.4 626.4 L1014.8 638.3 L1034.0 639.2 L1048.6 641.9 L1049.5 648.3 L1055.9 652.9 L1058.6 653.8 L1059.5 660.2" fill="none" stroke="#1e1e1e" stroke-width="3.0" stroke-linejoin="round" stroke-linecap="round"/></g></svg>
<svg class="a" style="left:19px;top:86.0px;" width="6" height="20" viewBox="0 0 6 20"><rect x="0" y="0" width="1.4" height="1.4" fill="#b8b8b8"/><rect x="4" y="0" width="1.4" height="1.4" fill="#b8b8b8"/><rect x="0" y="4" width="1.4" height="1.4" fill="#b8b8b8"/><rect x="4" y="4" width="1.4" height="1.4" fill="#b8b8b8"/><rect x="0" y="8" width="1.4" height="1.4" fill="#b8b8b8"/><rect x="4" y="8" width="1.4" height="1.4" fill="#b8b8b8"/><rect x="0" y="12" width="1.4" height="1.4" fill="#b8b8b8"/><rect x="4" y="12" width="1.4" height="1.4" fill="#b8b8b8"/><rect x="0" y="16" width="1.4" height="1.4" fill="#b8b8b8"/><rect x="4" y="16" width="1.4" height="1.4" fill="#b8b8b8"/></svg>
<svg class="a" style="left:31.0px;top:84.0px;" width="24" height="24" viewBox="0 0 24 24"><path d="M5 2H14L19 7V22H5Z" fill="#fff" stroke="#555" stroke-width="1.1"/><path d="M14 2V7H19" fill="none" stroke="#555" stroke-width="1"/></svg>
<svg class="a" style="left:64.0px;top:84.0px;" width="24" height="24" viewBox="0 0 24 24"><path d="M2 6H9L11 8H21V20H2Z" fill="#e9c73e" stroke="#c9a52a" stroke-width="1"/><path d="M2 20L5 10H23L20 20Z" fill="#f7da55" stroke="#c9a52a" stroke-width="1"/></svg>
<svg class="a" style="left:97.0px;top:84.0px;" width="24" height="24" viewBox="0 0 24 24"><rect x="2.5" y="2.5" width="19" height="19" rx="2.5" fill="#5e8ec6" stroke="#3f6a9c" stroke-width="1"/><rect x="6" y="3" width="12" height="8" fill="#fff"/><path d="M7.5 5.5H16.5M7.5 8H16.5" stroke="#5e8ec6" stroke-width="1"/><rect x="7" y="14" width="10" height="7" fill="#dfe8f3"/><rect x="8.5" y="15.5" width="2" height="4" fill="#3f6a9c"/></svg>
<svg class="a" style="left:130.5px;top:84.0px;" width="24" height="24" viewBox="0 0 24 24"><path d="M3 2H13L18 7V21H3Z" fill="#fff" stroke="#666" stroke-width="1"/><path d="M3 2H8V21H3Z" fill="#f2d14a" stroke="#c9a52a" stroke-width="0.8"/><path d="M3 6H13M3 10H9" stroke="#c9a52a" stroke-width="0.8"/><rect x="14" y="14" width="10" height="10" rx="1.5" fill="#d8b22a" stroke="#a78417" stroke-width="0.8"/><circle cx="19" cy="19" r="2.4" fill="none" stroke="#fff" stroke-width="1.3"/><path d="M19 15.3V16.6M19 21.4V22.7M15.3 19H16.6M21.4 19H22.7M16.4 16.4L17.3 17.3M20.7 20.7L21.6 21.6M21.6 16.4L20.7 17.3M17.3 20.7L16.4 21.6" stroke="#fff" stroke-width="1"/></svg>
<svg class="a" style="left:163.0px;top:84.0px;" width="24" height="24" viewBox="0 0 24 24"><path d="M2 3H15L21 9V21H2Z" fill="#fff" stroke="#666" stroke-width="1"/><rect x="4" y="5" width="14" height="13" fill="#eef3fa" stroke="#9aaed0" stroke-width="0.6"/><path d="M8 9L17 19" stroke="#555" stroke-width="3.2" stroke-linecap="round"/><path d="M11 12L18 20" stroke="#e6c34a" stroke-width="2.2" stroke-linecap="round"/><circle cx="8" cy="8.5" r="2.6" fill="none" stroke="#555" stroke-width="1.6"/></svg>
<svg class="a" style="left:195.5px;top:84.0px;" width="24" height="24" viewBox="0 0 24 24"><circle cx="7" cy="6" r="4.5" fill="#e05a2b"/><rect x="2.5" y="12.5" width="8" height="8" fill="#5aa86a"/><path d="M13 11L21 3" stroke="#4f7fbf" stroke-width="2.8" stroke-linecap="round"/><text x="13" y="21" font-size="11" font-family="Liberation Sans" fill="#333">a</text></svg>
<svg class="a" style="left:233px;top:86.0px;" width="6" height="20" viewBox="0 0 6 20"><rect x="0" y="0" width="1.4" height="1.4" fill="#b8b8b8"/><rect x="4" y="0" width="1.4" height="1.4" fill="#b8b8b8"/><rect x="0" y="4" width="1.4" height="1.4" fill="#b8b8b8"/><rect x="4" y="4" width="1.4" height="1.4" fill="#b8b8b8"/><rect x="0" y="8" width="1.4" height="1.4" fill="#b8b8b8"/><rect x="4" y="8" width="1.4" height="1.4" fill="#b8b8b8"/><rect x="0" y="12" width="1.4" height="1.4" fill="#b8b8b8"/><rect x="4" y="12" width="1.4" height="1.4" fill="#b8b8b8"/><rect x="0" y="16" width="1.4" height="1.4" fill="#b8b8b8"/><rect x="4" y="16" width="1.4" height="1.4" fill="#b8b8b8"/></svg>
<div class="a" style="left:241px;top:81px;width:32px;height:31px;background:#dcdcdc;box-sizing:border-box;border:1px solid #bdbdbd;border-radius:3px"></div>
<svg class="a" style="left:245.0px;top:84.0px;" width="24" height="24" viewBox="0 0 24 24"><path d="M7.6 14.5V5A1.35 1.35 0 0 1 10.3 5V11.5V3A1.35 1.35 0 0 1 13 3V11.5V4A1.35 1.35 0 0 1 15.7 4V12V6.5A1.35 1.35 0 0 1 18.4 6.5V15Q18.4 19.5 16 22.5H9.5Q7.5 20 4 15.5Q3 14 4.3 13.4Q5.6 12.8 7.6 15.5Z" fill="#fff" stroke="#111" stroke-width="1.05" stroke-linejoin="round"/></svg>
<svg class="a" style="left:278.0px;top:84.0px;" width="24" height="24" viewBox="0 0 24 24"><rect x="4" y="4" width="16" height="16" fill="#f2dc3a" stroke="#c7b024" stroke-width="0.8"/><path d="M12 1L15.5 5H8.5Z M12 23L15.5 19H8.5Z M1 12L5 8.5V15.5Z M23 12L19 8.5V15.5Z" fill="#4f86c6"/><path d="M12 4V20M4 12H20" stroke="#4f86c6" stroke-width="2.4"/></svg>
<svg class="a" style="left:310.5px;top:84.0px;" width="24" height="24" viewBox="0 0 24 24"><path d="M3 21L9 15" stroke="#333" stroke-width="4" stroke-linecap="round"/><path d="M3.4 20.6L8.6 15.4" stroke="#e8c84a" stroke-width="2.2" stroke-linecap="round"/><circle cx="14" cy="10" r="8" fill="#f3f3f3" stroke="#5b5b5b" stroke-width="1.3"/><path d="M14 5.5V14.5M9.5 10H18.5" stroke="#4f86c6" stroke-width="2.4"/></svg>
<svg class="a" style="left:344.0px;top:84.0px;" width="24" height="24" viewBox="0 0 24 24"><path d="M3 21L9 15" stroke="#333" stroke-width="4" stroke-linecap="round"/><path d="M3.4 20.6L8.6 15.4" stroke="#e8c84a" stroke-width="2.2" stroke-linecap="round"/><circle cx="14" cy="10" r="8" fill="#f3f3f3" stroke="#5b5b5b" stroke-width="1.3"/><path d="M9.5 10H18.5" stroke="#4f86c6" stroke-width="2.4"/></svg>
<svg class="a" style="left:377.0px;top:84.0px;" width="24" height="24" viewBox="0 0 24 24"><path d="M2 2H9L2 9Z M22 2H15L22 9Z M22 22H15L22 15Z" fill="#4f86c6"/><rect x="3" y="3" width="18" height="18" fill="none" stroke="#4f86c6" stroke-width="1.4"/><path d="M3 21L9 15" stroke="#333" stroke-width="4" stroke-linecap="round"/><path d="M3.4 20.6L8.6 15.4" stroke="#e8c84a" stroke-width="2.2" stroke-linecap="round"/><circle cx="13" cy="11" r="6.5" fill="#eee" stroke="#666" stroke-width="1.1"/></svg>
<svg class="a" style="left:410.0px;top:84.0px;" width="24" height="24" viewBox="0 0 24 24"><rect x="3" y="3" width="9" height="12" fill="#f2dc3a" stroke="#c7b024" stroke-width="0.8"/><path d="M3 21L9 15" stroke="#333" stroke-width="4" stroke-linecap="round"/><path d="M3.4 20.6L8.6 15.4" stroke="#e8c84a" stroke-width="2.2" stroke-linecap="round"/><circle cx="14" cy="10" r="8" fill="#f3f3f3" stroke="#5b5b5b" stroke-width="1.3"/><path d="M14 3V17" stroke="#ccc" stroke-width="1"/></svg>
<svg class="a" style="left:443.0px;top:84.0px;" width="24" height="24" viewBox="0 0 24 24"><rect x="3" y="3" width="9" height="12" fill="#eee" stroke="#888" stroke-width="0.8"/><path d="M3 21L9 15" stroke="#333" stroke-width="4" stroke-linecap="round"/><path d="M3.4 20.6L8.6 15.4" stroke="#e8c84a" stroke-width="2.2" stroke-linecap="round"/><circle cx="14" cy="10" r="8" fill="#f3f3f3" stroke="#5b5b5b" stroke-width="1.3"/><path d="M14 3V17" stroke="#bbb" stroke-width="1"/></svg>
<svg class="a" style="left:476.0px;top:84.0px;" width="24" height="24" viewBox="0 0 24 24"><path d="M3 21L9 15" stroke="#d0d0d0" stroke-width="3.2" stroke-linecap="round"/><circle cx="14" cy="10" r="8" fill="#f6f6f6" stroke="#cfcfcf" stroke-width="1.2"/><text x="8.5" y="13.5" font-size="8" font-family="Liberation Sans" font-weight="bold" fill="#c8c8c8">1:1</text></svg>
<svg class="a" style="left:509.0px;top:84.0px;" width="24" height="24" viewBox="0 0 24 24"><path d="M3 21L9 15" stroke="#333" stroke-width="4" stroke-linecap="round"/><path d="M3.4 20.6L8.6 15.4" stroke="#e8c84a" stroke-width="2.2" stroke-linecap="round"/><circle cx="14" cy="10" r="8" fill="#f3f3f3" stroke="#5b5b5b" stroke-width="1.3"/><rect x="13" y="13" width="10" height="10" fill="#4f86c6"/><path d="M20 15L16 18L20 21" fill="none" stroke="#fff" stroke-width="1.8"/></svg>
<svg class="a" style="left:542.0px;top:84.0px;" width="24" height="24" viewBox="0 0 24 24"><path d="M3 21L9 15" stroke="#d0d0d0" stroke-width="3.2" stroke-linecap="round"/><circle cx="14" cy="10" r="8" fill="#f6f6f6" stroke="#cfcfcf" stroke-width="1.2"/><rect x="13" y="13" width="10" height="10" fill="#d8d8d8"/><path d="M16 15L20 18L16 21" fill="none" stroke="#fff" stroke-width="1.8"/></svg>
<svg class="a" style="left:576.0px;top:84.0px;" width="24" height="24" viewBox="0 0 24 24"><path d="M4 3H19V19H4Z" fill="#eee" stroke="#888" stroke-width="1"/><path d="M4 3C2 3 2 19 4 19" fill="#ddd" stroke="#888"/><rect x="14" y="14" width="10" height="10" rx="1.5" fill="#d8b22a" stroke="#a78417" stroke-width="0.8"/><circle cx="19" cy="19" r="2.4" fill="none" stroke="#fff" stroke-width="1.3"/><path d="M19 15.3V16.6M19 21.4V22.7M15.3 19H16.6M21.4 19H22.7M16.4 16.4L17.3 17.3M20.7 20.7L21.6 21.6M21.6 16.4L20.7 17.3M17.3 20.7L16.4 21.6" stroke="#fff" stroke-width="1"/></svg>
<svg class="a" style="left:608.5px;top:84.0px;" width="24" height="24" viewBox="0 0 24 24"><path d="M2 10L8 4H20L22 12L16 18H4Z" fill="#e2e2e2" stroke="#8a8a8a" stroke-width="1"/><path d="M6 8L18 14M10 5L8 16M14 5L13 17" stroke="#aaa" stroke-width="0.8"/><rect x="14" y="14" width="10" height="10" rx="1.5" fill="#d8b22a" stroke="#a78417" stroke-width="0.8"/><circle cx="19" cy="19" r="2.4" fill="none" stroke="#fff" stroke-width="1.3"/><path d="M19 15.3V16.6M19 21.4V22.7M15.3 19H16.6M21.4 19H22.7M16.4 16.4L17.3 17.3M20.7 20.7L21.6 21.6M21.6 16.4L20.7 17.3M17.3 20.7L16.4 21.6" stroke="#fff" stroke-width="1"/></svg>
<svg class="a" style="left:644.0px;top:84.0px;" width="24" height="24" viewBox="0 0 24 24"><path d="M5 2H13V18L9 14.5L5 18Z" fill="#5e8ec6" stroke="#3f6a9c" stroke-width="0.8"/><rect x="14" y="14" width="10" height="10" rx="1.5" fill="#d8b22a" stroke="#a78417" stroke-width="0.8"/><circle cx="19" cy="19" r="2.4" fill="none" stroke="#fff" stroke-width="1.3"/><path d="M19 15.3V16.6M19 21.4V22.7M15.3 19H16.6M21.4 19H22.7M16.4 16.4L17.3 17.3M20.7 20.7L21.6 21.6M21.6 16.4L20.7 17.3M17.3 20.7L16.4 21.6" stroke="#fff" stroke-width="1"/></svg>
<svg class="a" style="left:674.0px;top:84.0px;" width="24" height="24" viewBox="0 0 24 24"><path d="M3 3H20V21H3Z" fill="#eee" stroke="#888" stroke-width="1"/><path d="M11 2H16V11L13.5 9L11 11Z" fill="#5e8ec6"/></svg>
<svg class="a" style="left:707.0px;top:84.0px;" width="24" height="24" viewBox="0 0 24 24"><circle cx="12" cy="12" r="10" fill="#f4f4f4" stroke="#555" stroke-width="1.3"/><path d="M12 5V12L16 15" fill="none" stroke="#555" stroke-width="1.4"/></svg>
<svg class="a" style="left:740.0px;top:84.0px;" width="24" height="24" viewBox="0 0 24 24"><path d="M4 11A8 8 0 0 1 18.5 6.5" fill="none" stroke="#4f86c6" stroke-width="3.2"/><path d="M15 3H21V9Z" fill="#4f86c6"/><path d="M20 13A8 8 0 0 1 5.5 17.5" fill="none" stroke="#4f86c6" stroke-width="3.2"/><path d="M9 21H3V15Z" fill="#4f86c6"/></svg>
<svg class="a" style="left:777px;top:86.0px;" width="6" height="20" viewBox="0 0 6 20"><rect x="0" y="0" width="1.4" height="1.4" fill="#b8b8b8"/><rect x="4" y="0" width="1.4" height="1.4" fill="#b8b8b8"/><rect x="0" y="4" width="1.4" height="1.4" fill="#b8b8b8"/><rect x="4" y="4" width="1.4" height="1.4" fill="#b8b8b8"/><rect x="0" y="8" width="1.4" height="1.4" fill="#b8b8b8"/><rect x="4" y="8" width="1.4" height="1.4" fill="#b8b8b8"/><rect x="0" y="12" width="1.4" height="1.4" fill="#b8b8b8"/><rect x="4" y="12" width="1.4" height="1.4" fill="#b8b8b8"/><rect x="0" y="16" width="1.4" height="1.4" fill="#b8b8b8"/><rect x="4" y="16" width="1.4" height="1.4" fill="#b8b8b8"/></svg>
<svg class="a" style="left:788.0px;top:84.0px;" width="24" height="24" viewBox="0 0 24 24"><circle cx="10" cy="10" r="8" fill="#4f86c6"/><text x="7.5" y="15" font-size="12" font-weight="bold" font-style="italic" font-family="Liberation Serif" fill="#fff">i</text><path d="M13 11L13 22L16 19L19 23L21 22L18.5 18L22.5 17.5Z" fill="#fff" stroke="#333" stroke-width="0.9"/></svg>
<svg class="a" style="left:822.0px;top:84.0px;" width="24" height="24" viewBox="0 0 24 24"><rect x="2" y="3" width="20" height="18" fill="#fff" stroke="#666" stroke-width="1.1"/><path d="M2 9H22M2 15H22" stroke="#888" stroke-width="0.8"/><circle cx="7" cy="6" r="1.8" fill="#e05a2b"/><circle cx="12" cy="6" r="1.8" fill="#e05a2b"/><circle cx="9" cy="12" r="1.8" fill="#5aa86a"/><circle cx="15" cy="12" r="1.8" fill="#5aa86a"/><circle cx="7" cy="18" r="1.8" fill="#4f86c6"/><circle cx="13" cy="18" r="1.8" fill="#4f86c6"/><circle cx="18" cy="18" r="1.8" fill="#4f86c6"/></svg>
<svg class="a" style="left:855.0px;top:84.0px;" width="24" height="24" viewBox="0 0 24 24"><circle cx="12" cy="12" r="7" fill="none" stroke="#5e8ec6" stroke-width="3"/><path d="M12 1.5V6M12 18V22.5M1.5 12H6M18 12H22.5M4.6 4.6L7.7 7.7M16.3 16.3L19.4 19.4M19.4 4.6L16.3 7.7M7.7 16.3L4.6 19.4" stroke="#5e8ec6" stroke-width="3"/><circle cx="12" cy="12" r="3" fill="#fff"/></svg>
<svg class="a" style="left:888.0px;top:84.0px;" width="24" height="24" viewBox="0 0 24 24"><path d="M18 3H5L12 12L5 21H18" fill="none" stroke="#8e1a9e" stroke-width="3"/></svg>
<svg class="a" style="left:921.0px;top:84.0px;" width="24" height="24" viewBox="0 0 24 24"><rect x="2" y="3" width="20" height="18" fill="#fff" stroke="#5e8ec6" stroke-width="1.3"/><rect x="2" y="3" width="20" height="4" fill="#5e8ec6"/><path d="M5 10H19M5 13.5H19M5 17H19" stroke="#5e8ec6" stroke-width="1.3"/></svg>
<svg class="a" style="left:951px;top:94px;" width="8" height="5" viewBox="0 0 8 5"><path d="M0.5 0.5H7.5L4 4.5Z" fill="#4a4a4a"/></svg>
<svg class="a" style="left:966.0px;top:84.0px;" width="24" height="24" viewBox="0 0 24 24"><rect x="1" y="9" width="22" height="8" fill="#d8d8d8" stroke="#777" stroke-width="1"/><path d="M4 9V12M7 9V14M10 9V12M13 9V14M16 9V12M19 9V14" stroke="#777" stroke-width="1"/><path d="M1 5H23" stroke="#1e4f8a" stroke-width="1.5"/></svg>
<svg class="a" style="left:996px;top:94px;" width="8" height="5" viewBox="0 0 8 5"><path d="M0.5 0.5H7.5L4 4.5Z" fill="#4a4a4a"/></svg>
<svg class="a" style="left:1011.0px;top:84.0px;" width="24" height="24" viewBox="0 0 24 24"><path d="M3 3H21Q23 3 23 6V12Q23 15 21 15H12L8 19L8.5 15H3Q1 15 1 12V6Q1 3 3 3Z" fill="#f7e060" stroke="#c9a52a" stroke-width="0.8"/><circle cx="6" cy="19" r="3.5" fill="#5aa86a" stroke="#2f6f2a" stroke-width="0.6"/></svg>
<svg class="a" style="left:1044.0px;top:84.0px;" width="24" height="24" viewBox="0 0 24 24"><circle cx="12" cy="11" r="7" fill="none" stroke="#d2d2d2" stroke-width="3"/><path d="M10 8L15 11L10 14Z" fill="#d2d2d2"/><path d="M15 15L21 22" stroke="#d8d8d8" stroke-width="2"/></svg>
<svg class="a" style="left:1074px;top:94px;" width="8" height="5" viewBox="0 0 8 5"><path d="M0.5 0.5H7.5L4 4.5Z" fill="#c4c4c4"/></svg>
<svg class="a" style="left:1093px;top:86.0px;" width="6" height="20" viewBox="0 0 6 20"><rect x="0" y="0" width="1.4" height="1.4" fill="#b8b8b8"/><rect x="4" y="0" width="1.4" height="1.4" fill="#b8b8b8"/><rect x="0" y="4" width="1.4" height="1.4" fill="#b8b8b8"/><rect x="4" y="4" width="1.4" height="1.4" fill="#b8b8b8"/><rect x="0" y="8" width="1.4" height="1.4" fill="#b8b8b8"/><rect x="4" y="8" width="1.4" height="1.4" fill="#b8b8b8"/><rect x="0" y="12" width="1.4" height="1.4" fill="#b8b8b8"/><rect x="4" y="12" width="1.4" height="1.4" fill="#b8b8b8"/><rect x="0" y="16" width="1.4" height="1.4" fill="#b8b8b8"/><rect x="4" y="16" width="1.4" height="1.4" fill="#b8b8b8"/></svg>
<svg class="a" style="left:1105.0px;top:84.0px;" width="24" height="24" viewBox="0 0 24 24"><rect x="2" y="3" width="13" height="13" fill="#f2dc3a" stroke="#c7b024" stroke-width="0.6"/><rect x="2" y="3" width="20" height="19" fill="none" stroke="#333" stroke-width="0.9" stroke-dasharray="1.6 1.2"/><path d="M11 9L11 21L14 18L17 23L19 22L16.5 17L20.5 16.5Z" fill="#fff" stroke="#333" stroke-width="0.9"/></svg>
<svg class="a" style="left:1135px;top:94px;" width="8" height="5" viewBox="0 0 8 5"><path d="M0.5 0.5H7.5L4 4.5Z" fill="#4a4a4a"/></svg>
<svg class="a" style="left:1150.0px;top:84.0px;" width="24" height="24" viewBox="0 0 24 24"><rect x="9" y="9" width="12" height="12" fill="#f2dc3a" stroke="#c7b024" stroke-width="0.8"/><path d="M10.5 3.5Q4 2.5 4 6.5Q4 9 8 9.5Q3 10 3 13.5Q3 17.5 11 16.5" fill="none" stroke="#6a2a8a" stroke-width="1.8"/></svg>
<svg class="a" style="left:1180px;top:94px;" width="8" height="5" viewBox="0 0 8 5"><path d="M0.5 0.5H7.5L4 4.5Z" fill="#4a4a4a"/></svg>
<svg class="a" style="left:1196.0px;top:84.0px;" width="24" height="24" viewBox="0 0 24 24"><rect x="2" y="2" width="12" height="12" fill="#f2dc3a" stroke="#c7b024" stroke-width="0.8"/><rect x="6" y="6" width="12" height="12" fill="#f2dc3a" stroke="#c7b024" stroke-width="0.8"/><circle cx="18" cy="18" r="5" fill="#e03030" stroke="#fff" stroke-width="0.8"/><path d="M15 21L21 15" stroke="#fff" stroke-width="1.6"/></svg>
<svg class="a" style="left:1225px;top:94px;" width="8" height="5" viewBox="0 0 8 5"><path d="M0.5 0.5H7.5L4 4.5Z" fill="#4a4a4a"/></svg>
<svg class="a" style="left:1240.0px;top:84.0px;" width="24" height="24" viewBox="0 0 24 24"><rect x="2" y="2" width="13" height="13" fill="#f2dc3a" stroke="#c7b024" stroke-width="0.8"/><path d="M18 23L14.5 17A4 4 0 1 1 21.5 17Z" fill="#5e8ec6"/><circle cx="18" cy="15" r="1.5" fill="#fff"/></svg>
<svg class="a" style="left:1270px;top:94px;" width="8" height="5" viewBox="0 0 8 5"><path d="M0.5 0.5H7.5L4 4.5Z" fill="#4a4a4a"/></svg>
<svg class="a" style="left:1288.5px;top:86.0px;" width="6" height="20" viewBox="0 0 6 20"><rect x="0" y="0" width="1.4" height="1.4" fill="#b8b8b8"/><rect x="4" y="0" width="1.4" height="1.4" fill="#b8b8b8"/><rect x="0" y="4" width="1.4" height="1.4" fill="#b8b8b8"/><rect x="4" y="4" width="1.4" height="1.4" fill="#b8b8b8"/><rect x="0" y="8" width="1.4" height="1.4" fill="#b8b8b8"/><rect x="4" y="8" width="1.4" height="1.4" fill="#b8b8b8"/><rect x="0" y="12" width="1.4" height="1.4" fill="#b8b8b8"/><rect x="4" y="12" width="1.4" height="1.4" fill="#b8b8b8"/><rect x="0" y="16" width="1.4" height="1.4" fill="#b8b8b8"/><rect x="4" y="16" width="1.4" height="1.4" fill="#b8b8b8"/></svg>
<svg class="a" style="left:1301.0px;top:84.0px;" width="24" height="24" viewBox="0 0 24 24"><path d="M2 4Q8 1 14 4M14 4L20 2" stroke="#5e8ec6" stroke-width="1" fill="none"/><text x="1" y="20" font-size="16" font-weight="bold" font-family="Liberation Sans" fill="#4f86c6">A</text><path d="M19 1L20 4H23L20.5 6L21.5 9L19 7L16.5 9L17.5 6L15 4H18Z" fill="#5e8ec6"/><rect x="14" y="14" width="10" height="10" rx="1.5" fill="#d8b22a" stroke="#a78417" stroke-width="0.8"/><circle cx="19" cy="19" r="2.4" fill="none" stroke="#fff" stroke-width="1.3"/><path d="M19 15.3V16.6M19 21.4V22.7M15.3 19H16.6M21.4 19H22.7M16.4 16.4L17.3 17.3M20.7 20.7L21.6 21.6M21.6 16.4L20.7 17.3M17.3 20.7L16.4 21.6" stroke="#fff" stroke-width="1"/></svg>
<svg class="a" style="left:1331px;top:94px;" width="8" height="5" viewBox="0 0 8 5"><path d="M0.5 0.5H7.5L4 4.5Z" fill="#4a4a4a"/></svg>
<svg class="a" style="left:1345.0px;top:84.0px;" width="24" height="24" viewBox="0 0 24 24"><rect x="2" y="2" width="18" height="18" fill="none" stroke="#444" stroke-width="0.9" stroke-dasharray="1.6 1.2"/><path d="M6 5L6 20L10 16L13.5 22L16 21L12.5 15L18 14.5Z" fill="#fff" stroke="#222" stroke-width="1"/></svg>
<svg class="a" style="left:1379.0px;top:84.0px;" width="24" height="24" viewBox="0 0 24 24"><path d="M3 3L19 3L13 20L6 17Z" fill="none" stroke="#3a7bd5" stroke-width="1.6"/><circle cx="3" cy="3" r="2.2" fill="#3a7bd5"/><circle cx="19" cy="3" r="2.2" fill="#3a7bd5"/><circle cx="13" cy="20" r="2.2" fill="#3a7bd5"/><circle cx="6" cy="17" r="2.2" fill="#3a7bd5"/><rect x="14" y="14" width="10" height="10" rx="1.5" fill="#4a9e3f" stroke="#2f6f2a" stroke-width="0.8"/><path d="M19 16V22M16 19H22" stroke="#fff" stroke-width="2"/></svg>
<svg class="a" style="left:1413.0px;top:84.0px;" width="24" height="24" viewBox="0 0 24 24"><path d="M18 3L5 3L3 12L10 20" fill="none" stroke="#3a7bd5" stroke-width="1.6"/><circle cx="18" cy="3" r="2.2" fill="#3a7bd5"/><circle cx="5" cy="3" r="2.2" fill="#3a7bd5"/><circle cx="3" cy="12" r="2.2" fill="#3a7bd5"/><circle cx="10" cy="20" r="2.2" fill="#3a7bd5"/><rect x="14" y="14" width="10" height="10" rx="1.5" fill="#4a9e3f" stroke="#2f6f2a" stroke-width="0.8"/><path d="M19 16V22M16 19H22" stroke="#fff" stroke-width="2"/></svg>
<svg class="a" style="left:1446.0px;top:84.0px;" width="24" height="24" viewBox="0 0 24 24"><path d="M10 1L12.8 7.5L20 8L14.5 12.5L16.5 19.5L10 15.5L3.5 19.5L5.5 12.5L0 8L7.2 7.5Z" fill="#f7d45a" stroke="#d6a92a" stroke-width="0.8"/><rect x="14" y="14" width="10" height="10" rx="1.5" fill="#4a9e3f" stroke="#2f6f2a" stroke-width="0.8"/><path d="M19 16V22M16 19H22" stroke="#fff" stroke-width="2"/></svg>
<svg class="a" style="left:1479.0px;top:84.0px;" width="24" height="24" viewBox="0 0 24 24"><text x="4" y="16" font-size="17" font-family="Liberation Serif" fill="#222">T</text><rect x="1" y="17" width="3" height="3" fill="none" stroke="#555" stroke-width="0.8"/><rect x="14" y="14" width="10" height="10" rx="1.5" fill="#4a9e3f" stroke="#2f6f2a" stroke-width="0.8"/><path d="M19 16V22M16 19H22" stroke="#fff" stroke-width="2"/></svg>
<svg class="a" style="left:1512.0px;top:84.0px;" width="24" height="24" viewBox="0 0 24 24"><text x="1" y="12" font-size="9" font-family="Liberation Sans" fill="#333">a b c</text><rect x="1" y="15" width="3" height="3" fill="none" stroke="#555" stroke-width="0.8"/><rect x="7" y="11" width="3" height="3" fill="none" stroke="#555" stroke-width="0.8"/><rect x="14" y="14" width="10" height="10" rx="1.5" fill="#4a9e3f" stroke="#2f6f2a" stroke-width="0.8"/><path d="M19 16V22M16 19H22" stroke="#fff" stroke-width="2"/></svg>
<svg class="a" style="left:1545.5px;top:84.0px;" width="24" height="24" viewBox="0 0 24 24"><rect x="1" y="1" width="19" height="19" fill="#fff" stroke="#666" stroke-width="1"/><text x="4" y="16" font-size="16" font-family="Liberation Serif" fill="#222">T</text><rect x="14" y="14" width="10" height="10" rx="1.5" fill="#4a9e3f" stroke="#2f6f2a" stroke-width="0.8"/><path d="M19 16V22M16 19H22" stroke="#fff" stroke-width="2"/></svg>
<svg class="a" style="left:1578.0px;top:84.0px;" width="24" height="24" viewBox="0 0 24 24"><rect x="1" y="3" width="21" height="16" fill="#8fc4ea" stroke="#666" stroke-width="0.8"/><path d="M1 15Q8 8 14 11T22 10V19H1Z" fill="#d8b84a"/><rect x="14" y="14" width="10" height="10" rx="1.5" fill="#4a9e3f" stroke="#2f6f2a" stroke-width="0.8"/><path d="M19 16V22M16 19H22" stroke="#fff" stroke-width="2"/></svg>
<div class="a" style="left:1609.5px;top:84.0px;width:1px;height:24px;background:#cfcfcf;"></div>
<svg class="a" style="left:1617.0px;top:84.0px;" width="24" height="24" viewBox="0 0 24 24"><rect x="2" y="1" width="20" height="16" fill="#eef3fa" stroke="#666" stroke-width="0.9"/><path d="M4 5H9M4 8H9M4 11H12M4 14H12" stroke="#4f86c6" stroke-width="1.4"/><path d="M12 4L10 7L12 10M17 4L19 7L17 10M15.5 3L13.5 11" fill="none" stroke="#333" stroke-width="1"/><path d="M5 17L3 23L10 17Z" fill="#fff" stroke="#666" stroke-width="0.8"/></svg>
<svg class="a" style="left:1647px;top:94px;" width="8" height="5" viewBox="0 0 8 5"><path d="M0.5 0.5H7.5L4 4.5Z" fill="#4a4a4a"/></svg>
<svg class="a" style="left:1666px;top:86.0px;" width="6" height="20" viewBox="0 0 6 20"><rect x="0" y="0" width="1.4" height="1.4" fill="#b8b8b8"/><rect x="4" y="0" width="1.4" height="1.4" fill="#b8b8b8"/><rect x="0" y="4" width="1.4" height="1.4" fill="#b8b8b8"/><rect x="4" y="4" width="1.4" height="1.4" fill="#b8b8b8"/><rect x="0" y="8" width="1.4" height="1.4" fill="#b8b8b8"/><rect x="4" y="8" width="1.4" height="1.4" fill="#b8b8b8"/><rect x="0" y="12" width="1.4" height="1.4" fill="#b8b8b8"/><rect x="4" y="12" width="1.4" height="1.4" fill="#b8b8b8"/><rect x="0" y="16" width="1.4" height="1.4" fill="#b8b8b8"/><rect x="4" y="16" width="1.4" height="1.4" fill="#b8b8b8"/></svg>
<svg class="a" style="left:1677.0px;top:84.0px;" width="24" height="24" viewBox="0 0 24 24"><path d="M1 9L5 4H23V14H5Z" fill="#f7e060" stroke="#b89a20" stroke-width="1"/><text x="6" y="12.5" font-size="8.5" font-weight="bold" font-family="Liberation Sans" fill="#222">abc</text></svg>
<svg class="a" style="left:1711.0px;top:84.0px;" width="24" height="24" viewBox="0 0 24 24"><circle cx="8" cy="8" r="7" fill="#e03030"/><path d="M8 8L8 1A7 7 0 0 1 15 8Z" fill="#4a9e3f"/><path d="M8 8L15 8A7 7 0 0 1 4 14Z" fill="#f2dc3a"/><rect x="12" y="12" width="4" height="10" fill="#f2dc3a"/><rect x="16" y="16" width="3.5" height="6" fill="#4a9e3f"/><rect x="19.5" y="14" width="3.5" height="8" fill="#c02020"/></svg>
<div class="a" style="left:1743px;top:84.0px;width:1px;height:24px;background:#cfcfcf;"></div>
<svg class="a" style="left:1751.0px;top:84.0px;" width="24" height="24" viewBox="0 0 24 24"><path d="M1 9L5 4H23V14H5Z" fill="#cfe3f7" stroke="#5e8ec6" stroke-width="1"/><text x="6" y="12.5" font-size="8.5" font-weight="bold" font-family="Liberation Sans" fill="#222">ab</text><circle cx="18.5" cy="18" r="4.5" fill="#c81e1e"/><path d="M18.5 13V9" stroke="#555" stroke-width="1"/></svg>
<svg class="a" style="left:1783.0px;top:84.0px;" width="24" height="24" viewBox="0 0 24 24"><path d="M1 9L5 4H23V14H5Z" fill="#fff" stroke="#e03030" stroke-width="1"/><text x="6" y="12.5" font-size="8.5" font-weight="bold" font-family="Liberation Sans" fill="#e03030">abc</text></svg>
<div class="a" style="left:1816.5px;top:84.0px;width:1px;height:24px;background:#cfcfcf;"></div>
<svg class="a" style="left:1824.0px;top:84.0px;" width="24" height="24" viewBox="0 0 24 24"><path d="M1 9L5 4H23V14H5Z" fill="#f7e060" stroke="#b89a20" stroke-width="1"/><text x="6" y="12.5" font-size="8.5" font-weight="bold" font-family="Liberation Sans" fill="#222">ab</text><circle cx="18.5" cy="18" r="4.5" fill="#c81e1e"/></svg>
<svg class="a" style="left:1857.0px;top:84.0px;" width="24" height="24" viewBox="0 0 24 24"><path d="M1 9L5 4H23V14H5Z" fill="#f7e060" stroke="#b89a20" stroke-width="1"/><text x="6" y="12.5" font-size="8.5" font-weight="bold" font-family="Liberation Sans" fill="#222">abc</text><path d="M8 19Q15 13 22 19Q15 25 8 19Z" fill="#fff" stroke="#333" stroke-width="0.8"/><circle cx="15" cy="19" r="2.5" fill="#3a6ab0"/></svg>
<svg class="a" style="left:1906px;top:90px;" width="14" height="12" viewBox="0 0 14 12"><path d="M2 2L6 6L2 10M8 2L12 6L8 10" fill="none" stroke="#333" stroke-width="1.4"/></svg>
<svg class="a" style="left:19px;top:125.0px;" width="6" height="20" viewBox="0 0 6 20"><rect x="0" y="0" width="1.4" height="1.4" fill="#b8b8b8"/><rect x="4" y="0" width="1.4" height="1.4" fill="#b8b8b8"/><rect x="0" y="4" width="1.4" height="1.4" fill="#b8b8b8"/><rect x="4" y="4" width="1.4" height="1.4" fill="#b8b8b8"/><rect x="0" y="8" width="1.4" height="1.4" fill="#b8b8b8"/><rect x="4" y="8" width="1.4" height="1.4" fill="#b8b8b8"/><rect x="0" y="12" width="1.4" height="1.4" fill="#b8b8b8"/><rect x="4" y="12" width="1.4" height="1.4" fill="#b8b8b8"/><rect x="0" y="16" width="1.4" height="1.4" fill="#b8b8b8"/><rect x="4" y="16" width="1.4" height="1.4" fill="#b8b8b8"/></svg>
<svg class="a" style="left:31.0px;top:123.0px;" width="24" height="24" viewBox="0 0 24 24"><g transform="rotate(-40 12 12)"><path d="M6 3V11A6 6 0 0 0 18 11V3" fill="none" stroke="#7a0a0a" stroke-width="6.4"/><path d="M6 3V11A6 6 0 0 0 18 11V3" fill="none" stroke="#d81e1e" stroke-width="4.6"/><rect x="3.7" y="1" width="4.6" height="3.6" fill="#fff" stroke="#7a0a0a" stroke-width="0.6"/><rect x="15.7" y="1" width="4.6" height="3.6" fill="#fff" stroke="#7a0a0a" stroke-width="0.6"/></g></svg>
<svg class="a" style="left:65.0px;top:123.0px;" width="24" height="24" viewBox="0 0 24 24"><path d="M6 22V12L2 5M6 12L12 3M6 12H14" stroke="#cfcfcf" stroke-width="1.6" fill="none"/><circle cx="14" cy="7" r="2" fill="none" stroke="#cfcfcf"/><circle cx="19" cy="7" r="2" fill="none" stroke="#cfcfcf"/><circle cx="14" cy="12" r="2" fill="none" stroke="#cfcfcf"/><circle cx="19" cy="12" r="2" fill="none" stroke="#cfcfcf"/></svg>
<svg class="a" style="left:81px;top:142px;" width="8" height="5" viewBox="0 0 8 5"><path d="M0.5 0.5H7.5L4 4.5Z" fill="#d0d0d0"/></svg>
<div class="a" style="left:94px;top:121px;width:30px;height:30px;background:#dadada;box-sizing:border-box;border:1px solid #cdcdcd;border-radius:3px"></div>
<svg class="a" style="left:100px;top:126px;" width="18" height="20" viewBox="0 0 18 20"><circle cx="4" cy="4" r="1.6" fill="none" stroke="#bbb"/><circle cx="12" cy="6" r="1.6" fill="none" stroke="#bbb"/><circle cx="7" cy="14" r="1.6" fill="none" stroke="#bbb"/></svg>
<div class="a" style="left:127px;top:121px;width:122px;height:30px;background:#ececec;box-sizing:border-box;border:1px solid #cfcfcf;border-radius:3px"></div>
<div class="a" style="left:235px;top:122px;width:1px;height:28px;background:#d6d6d6;"></div>
<svg class="a" style="left:237px;top:124px;" width="12" height="24" viewBox="0 0 12 24"><path d="M3 8L6 5L9 8Z" fill="#c8c8c8"/><path d="M3 16L6 19L9 16Z" fill="#c8c8c8"/></svg>
<div class="t" style="left:131px;top:128.70px;font-size:16.3px;color:#b4b4b4;font-weight:400;">12</div>
<div class="a" style="left:252px;top:121px;width:111px;height:30px;background:#ececec;box-sizing:border-box;border:1px solid #d2d2d2;border-radius:3px"></div>
<div class="t" style="left:256px;top:128.70px;font-size:16.3px;color:#b4b4b4;font-weight:400;">px</div>
<svg class="a" style="left:348px;top:134px;" width="8" height="5" viewBox="0 0 8 5"><path d="M0.5 0.5H7.5L4 4.5Z" fill="#c8c8c8"/></svg>
<svg class="a" style="left:369.0px;top:123.0px;" width="24" height="24" viewBox="0 0 24 24"><path d="M6 22V13M6 13L2 3M6 13L20 9" stroke="#5fae6a" stroke-width="1.8" fill="none"/><rect x="4" y="11" width="4" height="4" fill="#ddd" stroke="#777" stroke-width="0.8"/></svg>
<svg class="a" style="left:402.0px;top:123.0px;" width="24" height="24" viewBox="0 0 24 24"><path d="M9 3Q16 1 19 5Q21 10 16 12Q14 15 17 20Q12 23 8 18Q5 12 4 8Q4 4 9 3Z" fill="#bdbdbd" stroke="#555" stroke-width="0.8"/><path d="M5 6Q9 3 11 7Q12 11 12 17Q11 22 7 19Q3 13 5 6Z" fill="#7cbf6e" stroke="#2f5f2a" stroke-width="0.9"/></svg>
<svg class="a" style="left:421px;top:142px;" width="8" height="5" viewBox="0 0 8 5"><path d="M0.5 0.5H7.5L4 4.5Z" fill="#4a4a4a"/></svg>
<svg class="a" style="left:435.0px;top:123.0px;" width="24" height="24" viewBox="0 0 24 24"><path d="M3 3L21 21M21 3L3 21" stroke="#d8d8d8" stroke-width="2"/><circle cx="12" cy="12" r="2.5" fill="none" stroke="#ccc"/></svg>
<svg class="a" style="left:468.0px;top:123.0px;" width="24" height="24" viewBox="0 0 24 24"><path d="M2 20L8 13L14 15L21 4M8 13L3 4M14 15L21 21" stroke="#d2d2d2" stroke-width="2.2" fill="none"/></svg>
<svg class="a" style="left:497.5px;top:134px;" width="8" height="5" viewBox="0 0 8 5"><path d="M0.5 0.5H7.5L4 4.5Z" fill="#d0d0d0"/></svg>
<svg class="a" style="left:511.0px;top:123.0px;" width="24" height="24" viewBox="0 0 24 24"><path d="M3 20L9 12L6 8L12 6L20 16M12 6L18 3" stroke="#d2d2d2" stroke-width="2" fill="none"/></svg>
<svg class="a" style="left:551px;top:125.0px;" width="6" height="20" viewBox="0 0 6 20"><rect x="0" y="0" width="1.4" height="1.4" fill="#b8b8b8"/><rect x="4" y="0" width="1.4" height="1.4" fill="#b8b8b8"/><rect x="0" y="4" width="1.4" height="1.4" fill="#b8b8b8"/><rect x="4" y="4" width="1.4" height="1.4" fill="#b8b8b8"/><rect x="0" y="8" width="1.4" height="1.4" fill="#b8b8b8"/><rect x="4" y="8" width="1.4" height="1.4" fill="#b8b8b8"/><rect x="0" y="12" width="1.4" height="1.4" fill="#b8b8b8"/><rect x="4" y="12" width="1.4" height="1.4" fill="#b8b8b8"/><rect x="0" y="16" width="1.4" height="1.4" fill="#b8b8b8"/><rect x="4" y="16" width="1.4" height="1.4" fill="#b8b8b8"/></svg>
<svg class="a" style="left:563.0px;top:123.0px;" width="24" height="24" viewBox="0 0 24 24"><path d="M2 2L22 22H2Z" fill="#e8e8e8" stroke="#c8c8c8" stroke-width="1.2"/><path d="M6 12L12 18H6Z" fill="#f4f4f4" stroke="#c8c8c8"/><path d="M14 2V22H22" stroke="#c8c8c8" fill="none"/></svg>
<svg class="a" style="left:596.0px;top:123.0px;" width="24" height="24" viewBox="0 0 24 24"><path d="M3 7Q3 2 9 2Q15 1 16 4Q20 5 19 9Q17 13 12 12Q8 14 5 13Q3 11 3 7Z" fill="#e2e2e2" stroke="#cfcfcf" stroke-width="1"/><rect x="12" y="13" width="10" height="10" rx="1.5" fill="#dedede" stroke="#cdcdcd"/></svg>
<svg class="a" style="left:641.0px;top:123.0px;" width="24" height="24" viewBox="0 0 24 24"><path d="M3 7Q3 2 9 2Q15 1 16 4Q20 5 19 9Q17 13 12 12Q8 14 5 13Q3 11 3 7Z" fill="#e2e2e2" stroke="#cfcfcf" stroke-width="1"/><rect x="12" y="13" width="10" height="10" rx="1.5" fill="#dedede" stroke="#cdcdcd"/></svg>
<svg class="a" style="left:674.0px;top:123.0px;" width="24" height="24" viewBox="0 0 24 24"><path d="M3 7Q3 2 9 2Q15 1 16 4Q20 5 19 9Q17 13 12 12Q8 14 5 13Q3 11 3 7Z" fill="#e2e2e2" stroke="#cfcfcf" stroke-width="1"/><rect x="12" y="13" width="10" height="10" rx="1.5" fill="#dedede" stroke="#cdcdcd"/></svg>
<svg class="a" style="left:707.0px;top:123.0px;" width="24" height="24" viewBox="0 0 24 24"><path d="M3 7Q3 2 9 2Q15 1 16 4Q20 5 19 9Q17 13 12 12Q8 14 5 13Q3 11 3 7Z" fill="#e2e2e2" stroke="#cfcfcf" stroke-width="1"/><rect x="12" y="13" width="10" height="10" rx="1.5" fill="#dedede" stroke="#cdcdcd"/></svg>
<svg class="a" style="left:740.0px;top:123.0px;" width="24" height="24" viewBox="0 0 24 24"><path d="M3 7Q3 2 9 2Q15 1 16 4Q20 5 19 9Q17 13 12 12Q8 14 5 13Q3 11 3 7Z" fill="#e2e2e2" stroke="#cfcfcf" stroke-width="1"/><rect x="12" y="13" width="10" height="10" rx="1.5" fill="#dedede" stroke="#cdcdcd"/></svg>
<svg class="a" style="left:773.0px;top:123.0px;" width="24" height="24" viewBox="0 0 24 24"><path d="M3 7Q3 2 9 2Q15 1 16 4Q20 5 19 9Q17 13 12 12Q8 14 5 13Q3 11 3 7Z" fill="#e2e2e2" stroke="#cfcfcf" stroke-width="1"/><rect x="12" y="13" width="10" height="10" rx="1.5" fill="#dedede" stroke="#cdcdcd"/></svg>
<svg class="a" style="left:806.0px;top:123.0px;" width="24" height="24" viewBox="0 0 24 24"><path d="M3 7Q3 2 9 2Q15 1 16 4Q20 5 19 9Q17 13 12 12Q8 14 5 13Q3 11 3 7Z" fill="#e2e2e2" stroke="#cfcfcf" stroke-width="1"/><rect x="12" y="13" width="10" height="10" rx="1.5" fill="#dedede" stroke="#cdcdcd"/></svg>
<svg class="a" style="left:839.0px;top:123.0px;" width="24" height="24" viewBox="0 0 24 24"><path d="M3 7Q3 2 9 2Q15 1 16 4Q20 5 19 9Q17 13 12 12Q8 14 5 13Q3 11 3 7Z" fill="#e2e2e2" stroke="#cfcfcf" stroke-width="1"/><rect x="12" y="13" width="10" height="10" rx="1.5" fill="#dedede" stroke="#cdcdcd"/></svg>
<svg class="a" style="left:626px;top:133px;" width="8" height="5" viewBox="0 0 8 5"><path d="M0.5 0.5H7.5L4 4.5Z" fill="#d0d0d0"/></svg>
<svg class="a" style="left:872.0px;top:123.0px;" width="24" height="24" viewBox="0 0 24 24"><path d="M3 7Q3 2 9 2Q15 1 16 4Q20 5 19 9Q17 13 12 12Q8 14 5 13Q3 11 3 7Z" fill="#e2e2e2" stroke="#cfcfcf" stroke-width="1"/></svg>
<svg class="a" style="left:905.0px;top:123.0px;" width="24" height="24" viewBox="0 0 24 24"><path d="M4 20Q2 15 7 10Q12 4 18 2Q22 4 20 8Q16 14 10 20Q6 23 4 20Z" fill="#e2e2e2" stroke="#cfcfcf"/></svg>
<svg class="a" style="left:938.0px;top:123.0px;" width="24" height="24" viewBox="0 0 24 24"><path d="M8 2H4V22H8M8 12H20" stroke="#d2d2d2" stroke-width="1.8" fill="none"/><circle cx="14" cy="6" r="2" fill="none" stroke="#d2d2d2"/><circle cx="14" cy="18" r="2" fill="none" stroke="#d2d2d2"/><rect x="12" y="13" width="10" height="10" rx="1.5" fill="#dedede" stroke="#cdcdcd"/></svg>
<svg class="a" style="left:971.0px;top:123.0px;" width="24" height="24" viewBox="0 0 24 24"><path d="M3 3L12 12L20 4M12 12V22M3 20H12" stroke="#d2d2d2" stroke-width="1.6" fill="none"/><rect x="16" y="2" width="5" height="5" fill="none" stroke="#d2d2d2"/><rect x="12" y="13" width="10" height="10" rx="1.5" fill="#dedede" stroke="#cdcdcd"/></svg>
<svg class="a" style="left:1004.0px;top:123.0px;" width="24" height="24" viewBox="0 0 24 24"><path d="M3 3L12 12L20 4M12 12V22M3 20H12" stroke="#d2d2d2" stroke-width="1.6" fill="none"/><rect x="16" y="2" width="5" height="5" fill="none" stroke="#d2d2d2"/><rect x="12" y="13" width="10" height="10" rx="1.5" fill="#dedede" stroke="#cdcdcd"/></svg>
<svg class="a" style="left:1037.0px;top:123.0px;" width="24" height="24" viewBox="0 0 24 24"><circle cx="7" cy="6" r="5" fill="#e4e4e4" stroke="#cfcfcf"/><circle cx="17" cy="6" r="5" fill="#e4e4e4" stroke="#cfcfcf"/><path d="M7 11L14 22M17 11L10 22" stroke="#cfcfcf" stroke-width="1.6"/><circle cx="8" cy="20" r="2.5" fill="none" stroke="#cfcfcf"/><circle cx="16" cy="20" r="2.5" fill="none" stroke="#cfcfcf"/></svg>
<svg class="a" style="left:1070.0px;top:123.0px;" width="24" height="24" viewBox="0 0 24 24"><circle cx="7" cy="6" r="5" fill="#e4e4e4" stroke="#cfcfcf"/><circle cx="17" cy="6" r="5" fill="#e4e4e4" stroke="#cfcfcf"/><path d="M7 11L14 22M17 11L10 22" stroke="#cfcfcf" stroke-width="1.6"/><circle cx="8" cy="20" r="2.5" fill="none" stroke="#cfcfcf"/><circle cx="16" cy="20" r="2.5" fill="none" stroke="#cfcfcf"/></svg>
<svg class="a" style="left:1103.0px;top:123.0px;" width="24" height="24" viewBox="0 0 24 24"><path d="M2 6Q7 1 12 6Q17 1 22 6Q20 12 12 10Q4 12 2 6Z" fill="#e4e4e4" stroke="#cfcfcf"/><path d="M12 10L12 14L6 20" stroke="#cfcfcf" stroke-width="1.4" fill="none"/></svg>
<svg class="a" style="left:1136.0px;top:123.0px;" width="24" height="24" viewBox="0 0 24 24"><path d="M2 6H22M2 12H22M2 18H22M8 2V22M16 2V22" stroke="#d6d6d6" stroke-width="1.3"/></svg>
<svg class="a" style="left:1169.0px;top:123.0px;" width="24" height="24" viewBox="0 0 24 24"><path d="M6 20L6 4L18 10L6 12" fill="#e8e8e8" stroke="#cfcfcf"/><path d="M4 14A8 8 0 0 0 16 20" stroke="#cfcfcf" fill="none"/></svg>
<svg class="a" style="left:1199px;top:133px;" width="8" height="5" viewBox="0 0 8 5"><path d="M0.5 0.5H7.5L4 4.5Z" fill="#d0d0d0"/></svg>
<svg class="a" style="left:1218px;top:125.0px;" width="6" height="20" viewBox="0 0 6 20"><rect x="0" y="0" width="1.4" height="1.4" fill="#b8b8b8"/><rect x="4" y="0" width="1.4" height="1.4" fill="#b8b8b8"/><rect x="0" y="4" width="1.4" height="1.4" fill="#b8b8b8"/><rect x="4" y="4" width="1.4" height="1.4" fill="#b8b8b8"/><rect x="0" y="8" width="1.4" height="1.4" fill="#b8b8b8"/><rect x="4" y="8" width="1.4" height="1.4" fill="#b8b8b8"/><rect x="0" y="12" width="1.4" height="1.4" fill="#b8b8b8"/><rect x="4" y="12" width="1.4" height="1.4" fill="#b8b8b8"/><rect x="0" y="16" width="1.4" height="1.4" fill="#b8b8b8"/><rect x="4" y="16" width="1.4" height="1.4" fill="#b8b8b8"/></svg>
<svg class="a" style="left:1230.0px;top:123.0px;" width="24" height="24" viewBox="0 0 24 24"><path d="M4 20L6 14L17 3L21 7L10 18Z" fill="#dedede" stroke="#cacaca"/></svg>
<svg class="a" style="left:1247px;top:142px;" width="8" height="5" viewBox="0 0 8 5"><path d="M0.5 0.5H7.5L4 4.5Z" fill="#d0d0d0"/></svg>
<svg class="a" style="left:1263.0px;top:123.0px;" width="24" height="24" viewBox="0 0 24 24"><path d="M3 22L5 16L17 3L21 7L9 20Z" fill="#f0d040" stroke="#9a7a10" stroke-width="1"/><path d="M3 22L5 16L9 20Z" fill="#f4e0b0" stroke="#9a7a10" stroke-width="0.8"/><path d="M15 5L19 9" stroke="#9a7a10" stroke-width="1"/></svg>
<svg class="a" style="left:1295.0px;top:123.0px;" width="24" height="24" viewBox="0 0 24 24"><rect x="2" y="2" width="18" height="19" rx="2" fill="#e2e2e2" stroke="#cdcdcd"/><rect x="5" y="3" width="11" height="6" fill="#f4f4f4"/><path d="M10 22L20 12L23 15L13 23Z" fill="#d8d8d8"/></svg>
<svg class="a" style="left:1328.0px;top:123.0px;" width="24" height="24" viewBox="0 0 24 24"><path d="M3 21L21 3" stroke="#d8d8d8" stroke-width="1.2" stroke-dasharray="2 2"/><rect x="1" y="19" width="4" height="4" fill="none" stroke="#d0d0d0"/><rect x="19" y="1" width="4" height="4" fill="none" stroke="#d0d0d0"/></svg>
<svg class="a" style="left:1359px;top:133px;" width="8" height="5" viewBox="0 0 8 5"><path d="M0.5 0.5H7.5L4 4.5Z" fill="#d0d0d0"/></svg>
<svg class="a" style="left:1374.0px;top:123.0px;" width="24" height="24" viewBox="0 0 24 24"><path d="M3 7Q3 2 9 2Q15 1 16 4Q20 5 19 9Q17 13 12 12Q8 14 5 13Q3 11 3 7Z" fill="#e2e2e2" stroke="#cfcfcf" stroke-width="1"/><rect x="12" y="13" width="10" height="10" rx="1.5" fill="#dedede" stroke="#cdcdcd"/></svg>
<svg class="a" style="left:1407.0px;top:123.0px;" width="24" height="24" viewBox="0 0 24 24"><path d="M3 22V8M3 8H12M8 4L20 18M14 12L20 6" stroke="#d0d0d0" stroke-width="1.6"/><rect x="1" y="2" width="5" height="5" fill="none" stroke="#d0d0d0"/></svg>
<svg class="a" style="left:1436.5px;top:133px;" width="8" height="5" viewBox="0 0 8 5"><path d="M0.5 0.5H7.5L4 4.5Z" fill="#d0d0d0"/></svg>
<svg class="a" style="left:1452.0px;top:123.0px;" width="24" height="24" viewBox="0 0 24 24"><rect x="2" y="2" width="20" height="20" fill="#e4e4e4" stroke="#cfcfcf"/><path d="M4 7H20M4 12H20M4 17H20" stroke="#f4f4f4" stroke-width="1.6"/><path d="M8 22L20 4" stroke="#d2d2d2" stroke-width="2"/></svg>
<svg class="a" style="left:1484.0px;top:123.0px;" width="24" height="24" viewBox="0 0 24 24"><path d="M3 6H21" stroke="#cfcfcf" stroke-width="2"/><path d="M5 6L6 22H18L19 6" fill="#e2e2e2" stroke="#cfcfcf"/><rect x="9" y="2" width="6" height="4" fill="none" stroke="#cfcfcf"/></svg>
<svg class="a" style="left:1518.0px;top:123.0px;" width="24" height="24" viewBox="0 0 24 24"><circle cx="5" cy="18" r="3" fill="none" stroke="#cfcfcf" stroke-width="1.5"/><circle cx="19" cy="18" r="3" fill="none" stroke="#cfcfcf" stroke-width="1.5"/><path d="M7 16L18 3M17 16L6 3" stroke="#cfcfcf" stroke-width="1.5"/></svg>
<svg class="a" style="left:1550.0px;top:123.0px;" width="24" height="24" viewBox="0 0 24 24"><path d="M8 2H16L20 6V18H8Z" fill="#f0f0f0" stroke="#cfcfcf"/><path d="M4 6H12L16 10V22H4Z" fill="#f0f0f0" stroke="#cfcfcf"/></svg>
<svg class="a" style="left:1584.0px;top:123.0px;" width="24" height="24" viewBox="0 0 24 24"><rect x="4" y="3" width="16" height="19" rx="1.5" fill="#f0f0f0" stroke="#cfcfcf"/><path d="M7 9H17M7 12H17M7 15H17" stroke="#d8d8d8"/></svg>
<svg class="a" style="left:1617.0px;top:123.0px;" width="24" height="24" viewBox="0 0 24 24"><path d="M4 10Q12 2 20 10Q22 16 16 21" fill="none" stroke="#d2d2d2" stroke-width="3"/><path d="M2 4V12H10Z" fill="#d2d2d2"/></svg>
<svg class="a" style="left:1650.0px;top:123.0px;" width="24" height="24" viewBox="0 0 24 24"><path d="M20 10Q12 2 4 10Q2 16 8 21" fill="none" stroke="#d2d2d2" stroke-width="3"/><path d="M22 4V12H14Z" fill="#d2d2d2"/></svg>
<svg class="a" style="left:1686px;top:125.0px;" width="6" height="20" viewBox="0 0 6 20"><rect x="0" y="0" width="1.4" height="1.4" fill="#b8b8b8"/><rect x="4" y="0" width="1.4" height="1.4" fill="#b8b8b8"/><rect x="0" y="4" width="1.4" height="1.4" fill="#b8b8b8"/><rect x="4" y="4" width="1.4" height="1.4" fill="#b8b8b8"/><rect x="0" y="8" width="1.4" height="1.4" fill="#b8b8b8"/><rect x="4" y="8" width="1.4" height="1.4" fill="#b8b8b8"/><rect x="0" y="12" width="1.4" height="1.4" fill="#b8b8b8"/><rect x="4" y="12" width="1.4" height="1.4" fill="#b8b8b8"/><rect x="0" y="16" width="1.4" height="1.4" fill="#b8b8b8"/><rect x="4" y="16" width="1.4" height="1.4" fill="#b8b8b8"/></svg>
<svg class="a" style="left:1700.0px;top:123.0px;" width="24" height="24" viewBox="0 0 24 24"><path d="M3 20Q3 5 14 3" stroke="#d0d0d0" stroke-width="1.6" fill="none"/><rect x="1" y="18" width="4" height="4" fill="none" stroke="#d0d0d0"/><rect x="13" y="1" width="4" height="4" fill="none" stroke="#d0d0d0"/><rect x="12" y="13" width="10" height="10" rx="1.5" fill="#dedede" stroke="#cdcdcd"/></svg>
<svg class="a" style="left:1732.0px;top:123.0px;" width="24" height="24" viewBox="0 0 24 24"><circle cx="9" cy="9" r="7" fill="none" stroke="#d0d0d0" stroke-width="1.6"/><circle cx="9" cy="9" r="2" fill="#d0d0d0"/><rect x="12" y="13" width="10" height="10" rx="1.5" fill="#dedede" stroke="#cdcdcd"/></svg>
<svg class="a" style="left:1761.75px;top:133px;" width="8" height="5" viewBox="0 0 8 5"><path d="M0.5 0.5H7.5L4 4.5Z" fill="#d0d0d0"/></svg>
<svg class="a" style="left:1777.0px;top:123.0px;" width="24" height="24" viewBox="0 0 24 24"><path d="M3 12L7 4L15 3L20 9L12 14Z" fill="none" stroke="#d0d0d0" stroke-width="1.6"/><rect x="12" y="13" width="10" height="10" rx="1.5" fill="#dedede" stroke="#cdcdcd"/></svg>
<svg class="a" style="left:1806.75px;top:133px;" width="8" height="5" viewBox="0 0 8 5"><path d="M0.5 0.5H7.5L4 4.5Z" fill="#d0d0d0"/></svg>
<svg class="a" style="left:1823.0px;top:123.0px;" width="24" height="24" viewBox="0 0 24 24"><rect x="2" y="3" width="16" height="14" fill="none" stroke="#d0d0d0" stroke-width="1.6"/><rect x="12" y="13" width="10" height="10" rx="1.5" fill="#dedede" stroke="#cdcdcd"/></svg>
<svg class="a" style="left:1851.75px;top:133px;" width="8" height="5" viewBox="0 0 8 5"><path d="M0.5 0.5H7.5L4 4.5Z" fill="#d0d0d0"/></svg>
<svg class="a" style="left:1868.0px;top:123.0px;" width="24" height="24" viewBox="0 0 24 24"><path d="M3 10L9 2L18 5L17 14L6 17Z" fill="none" stroke="#d0d0d0" stroke-width="1.6"/><rect x="12" y="13" width="10" height="10" rx="1.5" fill="#dedede" stroke="#cdcdcd"/></svg>
<svg class="a" style="left:1897px;top:133px;" width="8" height="5" viewBox="0 0 8 5"><path d="M0.5 0.5H7.5L4 4.5Z" fill="#d0d0d0"/></svg>
<svg class="a" style="left:19px;top:165.0px;" width="6" height="20" viewBox="0 0 6 20"><rect x="0" y="0" width="1.4" height="1.4" fill="#b8b8b8"/><rect x="4" y="0" width="1.4" height="1.4" fill="#b8b8b8"/><rect x="0" y="4" width="1.4" height="1.4" fill="#b8b8b8"/><rect x="4" y="4" width="1.4" height="1.4" fill="#b8b8b8"/><rect x="0" y="8" width="1.4" height="1.4" fill="#b8b8b8"/><rect x="4" y="8" width="1.4" height="1.4" fill="#b8b8b8"/><rect x="0" y="12" width="1.4" height="1.4" fill="#b8b8b8"/><rect x="4" y="12" width="1.4" height="1.4" fill="#b8b8b8"/><rect x="0" y="16" width="1.4" height="1.4" fill="#b8b8b8"/><rect x="4" y="16" width="1.4" height="1.4" fill="#b8b8b8"/></svg>
<svg class="a" style="left:31.0px;top:163.0px;" width="24" height="24" viewBox="0 0 24 24"><path d="M4 4L20 20M20 4L4 20" stroke="#d6d6d6" stroke-width="4" stroke-linecap="round"/><path d="M4 4L20 20M20 4L4 20" stroke="#f2f2f2" stroke-width="2" stroke-linecap="round"/></svg>
<div class="a" style="left:64px;top:160px;width:172px;height:31px;background:#f3f3f3;box-sizing:border-box;border:1px solid #d4d4d4;border-radius:2px"></div>
<div class="t" style="left:69.5px;top:168.20px;font-size:16.3px;color:#b0b0b0;font-weight:400;">No filter geometry set</div>
<div class="a" style="left:242px;top:160px;width:31px;height:31px;background:#dcdcdc;box-sizing:border-box;border:1px solid #cfcfcf;border-radius:3px"></div>
<svg class="a" style="left:245.5px;top:165.0px;" width="24" height="20" viewBox="0 0 24 20"><path d="M2 12Q12 2 22 12Q12 22 2 12Z" fill="#eee" stroke="#c4c4c4"/><circle cx="12" cy="12" r="4" fill="#d0d0d0"/><circle cx="12" cy="12" r="1.6" fill="#b8b8b8"/></svg>
<svg class="a" style="left:283.0px;top:163.0px;" width="24" height="24" viewBox="0 0 24 24"><rect x="1" y="1" width="8" height="12" fill="none" stroke="#d0d0d0" stroke-dasharray="1.5 1.5"/><path d="M3 21L9 15" stroke="#d0d0d0" stroke-width="3.2" stroke-linecap="round"/><circle cx="14" cy="10" r="8" fill="#f6f6f6" stroke="#cfcfcf" stroke-width="1.2"/></svg>
<svg class="a" style="left:356px;top:174px;" width="8" height="5" viewBox="0 0 8 5"><path d="M0.5 0.5H7.5L4 4.5Z" fill="#4a4a4a"/></svg>
<div class="a" style="left:374.5px;top:162.0px;width:1px;height:26px;background:#cfcfcf;"></div>
<svg class="a" style="left:387.0px;top:163.0px;" width="24" height="24" viewBox="0 0 24 24"><rect x="2" y="2" width="17" height="17" fill="#bcd8f5" stroke="#5e8ec6" stroke-width="1"/><rect x="14" y="14" width="10" height="10" rx="1.5" fill="#4a9e3f" stroke="#2f6f2a" stroke-width="0.8"/><path d="M19 16V22M16 19H22" stroke="#fff" stroke-width="2"/></svg>
<svg class="a" style="left:424.0px;top:163.0px;" width="24" height="24" viewBox="0 0 24 24"><circle cx="9" cy="8" r="7" fill="#3f6a9c"/><circle cx="7" cy="18" r="4.5" fill="#1e4470"/><circle cx="19" cy="4" r="2" fill="none" stroke="#3f6a9c"/><rect x="14" y="14" width="10" height="10" rx="1.5" fill="#4a9e3f" stroke="#2f6f2a" stroke-width="0.8"/><path d="M19 16V22M16 19H22" stroke="#fff" stroke-width="2"/></svg>
<svg class="a" style="left:460.0px;top:163.0px;" width="24" height="24" viewBox="0 0 24 24"><path d="M3 3L19 2L14 20L5 17Z" fill="none" stroke="#1a1a1a" stroke-width="1.2"/><circle cx="3" cy="3" r="2.2" fill="#3a7bd5"/><circle cx="19" cy="2" r="2.2" fill="#3a7bd5"/><circle cx="14" cy="20" r="2.2" fill="#3a7bd5"/><circle cx="5" cy="17" r="2.2" fill="#3a7bd5"/><rect x="14" y="14" width="10" height="10" rx="1.5" fill="#4a9e3f" stroke="#2f6f2a" stroke-width="0.8"/><path d="M19 16V22M16 19H22" stroke="#fff" stroke-width="2"/></svg>
<div class="a" style="left:496px;top:162.0px;width:1px;height:26px;background:#cfcfcf;"></div>
<svg class="a" style="left:516.0px;top:163.0px;" width="24" height="24" viewBox="0 0 24 24"><path d="M4 20L14 10" stroke="#d2d2d2" stroke-width="4" stroke-linecap="round"/><circle cx="16" cy="7" r="5" fill="none" stroke="#d2d2d2" stroke-width="2.5"/></svg>
<svg class="a" style="left:540px;top:173px;" width="8" height="5" viewBox="0 0 8 5"><path d="M0.5 0.5H7.5L4 4.5Z" fill="#d0d0d0"/></svg>
<svg class="a" style="left:560.0px;top:163.0px;" width="24" height="24" viewBox="0 0 24 24"><rect x="2" y="3" width="5" height="5" fill="none" stroke="#d0d0d0"/><rect x="2" y="10" width="5" height="5" fill="none" stroke="#d0d0d0"/><rect x="2" y="17" width="5" height="5" fill="none" stroke="#d0d0d0"/><path d="M10 5H22M10 12H22M10 19H18" stroke="#e2e2e2" stroke-width="2"/></svg>
<svg class="a" style="left:597.0px;top:163.0px;" width="24" height="24" viewBox="0 0 24 24"><rect x="1.5" y="1.5" width="21" height="21" fill="#fff" stroke="#777" stroke-width="1"/><path d="M2 5H22" stroke="#aaa"/><rect x="5" y="8" width="4" height="4" fill="#3a7bd5"/><rect x="5" y="15" width="4" height="4" fill="#3a7bd5"/><path d="M11 10H19M11 17H19" stroke="#999" stroke-width="1.4"/></svg>
<svg class="a" style="left:635px;top:165.0px;" width="6" height="20" viewBox="0 0 6 20"><rect x="0" y="0" width="1.4" height="1.4" fill="#b8b8b8"/><rect x="4" y="0" width="1.4" height="1.4" fill="#b8b8b8"/><rect x="0" y="4" width="1.4" height="1.4" fill="#b8b8b8"/><rect x="4" y="4" width="1.4" height="1.4" fill="#b8b8b8"/><rect x="0" y="8" width="1.4" height="1.4" fill="#b8b8b8"/><rect x="4" y="8" width="1.4" height="1.4" fill="#b8b8b8"/><rect x="0" y="12" width="1.4" height="1.4" fill="#b8b8b8"/><rect x="4" y="12" width="1.4" height="1.4" fill="#b8b8b8"/><rect x="0" y="16" width="1.4" height="1.4" fill="#b8b8b8"/><rect x="4" y="16" width="1.4" height="1.4" fill="#b8b8b8"/></svg>
<svg class="a" style="left:646.0px;top:163.0px;" width="24" height="24" viewBox="0 0 24 24"><path d="M3 4H21M20 4Q14 10 6 22" stroke="#222" stroke-width="1.2" fill="none"/></svg>
<svg class="a" style="left:679.0px;top:163.0px;" width="24" height="24" viewBox="0 0 24 24"><path d="M2 4H22" stroke="#8a4ab0" stroke-width="1.6"/><path d="M2 4H10" stroke="#222" stroke-width="1.6"/><path d="M2 9H22" stroke="#3a9ad8" stroke-width="1.6"/><path d="M2 14H22" stroke="#e06a6a" stroke-width="1.6"/><path d="M2 19H22" stroke="#e8a060" stroke-width="1.6"/><path d="M10 19H22" stroke="#c86ad8" stroke-width="1.6"/></svg>
<svg class="a" style="left:713.0px;top:163.0px;" width="24" height="24" viewBox="0 0 24 24"><path d="M3 4H21M20 4Q14 10 6 22" stroke="#222" stroke-width="1.2" fill="none"/><path d="M18 6Q13 13 8 20" stroke="#e02020" stroke-width="1.6" fill="none"/><circle cx="17" cy="8" r="1.6" fill="#e02020"/><circle cx="9" cy="19" r="1.6" fill="#e02020"/></svg>
<svg class="a" style="left:745.0px;top:163.0px;" width="24" height="24" viewBox="0 0 24 24"><path d="M2 4H22" stroke="#222" stroke-width="1.2"/><path d="M8 4L3 20M14 4L9 20M20 4L15 20" stroke="#222" stroke-width="1.6"/></svg>
<div class="a" style="left:778.5px;top:162.0px;width:1px;height:26px;background:#cfcfcf;"></div>
<svg class="a" style="left:786.0px;top:163.0px;" width="24" height="24" viewBox="0 0 24 24"><path d="M3 11Q3 4 12 4H16V1L22 7L16 13V10H12Q8 10 8 13Z" fill="#f08a1a" stroke="#b85a00" stroke-width="0.6"/><path d="M21 13Q21 20 12 20H8V23L2 17L8 11V14H12Q16 14 16 11Z" fill="#4caf50" stroke="#2a7a2e" stroke-width="0.6"/></svg>
<svg class="a" style="left:819.0px;top:163.0px;" width="24" height="24" viewBox="0 0 24 24"><rect x="1" y="1" width="22" height="22" fill="#fff" stroke="#777" stroke-width="0.8"/><path d="M13 1H17V5H13ZM17 5H21V9H17ZM13 9H17V13H13ZM17 13H21V17H17ZM13 17H17V21H13Z" fill="#111"/><path d="M4 12H12" stroke="#e02020" stroke-width="1.4"/><path d="M10 10L12 12L10 14" fill="none" stroke="#e02020" stroke-width="1.2"/></svg>
<svg class="a" style="left:852.0px;top:163.0px;" width="24" height="24" viewBox="0 0 24 24"><rect x="1" y="1" width="22" height="22" fill="#fff" stroke="#777" stroke-width="0.8"/><rect x="1" y="1" width="10" height="22" fill="#111"/><path d="M13 1H17V5H13ZM17 5H21V9H17ZM13 9H17V13H13ZM17 13H21V17H17ZM13 17H17V21H13Z" fill="#111"/><path d="M5 12H13" stroke="#e02020" stroke-width="1.4"/></svg>
<svg class="a" style="left:889px;top:165.0px;" width="6" height="20" viewBox="0 0 6 20"><rect x="0" y="0" width="1.4" height="1.4" fill="#b8b8b8"/><rect x="4" y="0" width="1.4" height="1.4" fill="#b8b8b8"/><rect x="0" y="4" width="1.4" height="1.4" fill="#b8b8b8"/><rect x="4" y="4" width="1.4" height="1.4" fill="#b8b8b8"/><rect x="0" y="8" width="1.4" height="1.4" fill="#b8b8b8"/><rect x="4" y="8" width="1.4" height="1.4" fill="#b8b8b8"/><rect x="0" y="12" width="1.4" height="1.4" fill="#b8b8b8"/><rect x="4" y="12" width="1.4" height="1.4" fill="#b8b8b8"/><rect x="0" y="16" width="1.4" height="1.4" fill="#b8b8b8"/><rect x="4" y="16" width="1.4" height="1.4" fill="#b8b8b8"/></svg>
<svg class="a" style="left:899.0px;top:163.0px;" width="26" height="24" viewBox="0 0 26 24"><circle cx="12" cy="6" r="4" fill="none" stroke="#6aa84f" stroke-width="2"/><path d="M14 8L16 10" stroke="#e8a030" stroke-width="2"/><text x="1" y="22" font-size="12" font-weight="bold" font-family="Liberation Sans" fill="#6aa84f">hub</text></svg>
<svg class="a" style="left:938px;top:165.0px;" width="6" height="20" viewBox="0 0 6 20"><rect x="0" y="0" width="1.4" height="1.4" fill="#b8b8b8"/><rect x="4" y="0" width="1.4" height="1.4" fill="#b8b8b8"/><rect x="0" y="4" width="1.4" height="1.4" fill="#b8b8b8"/><rect x="4" y="4" width="1.4" height="1.4" fill="#b8b8b8"/><rect x="0" y="8" width="1.4" height="1.4" fill="#b8b8b8"/><rect x="4" y="8" width="1.4" height="1.4" fill="#b8b8b8"/><rect x="0" y="12" width="1.4" height="1.4" fill="#b8b8b8"/><rect x="4" y="12" width="1.4" height="1.4" fill="#b8b8b8"/><rect x="0" y="16" width="1.4" height="1.4" fill="#b8b8b8"/><rect x="4" y="16" width="1.4" height="1.4" fill="#b8b8b8"/></svg>
<svg class="a" style="left:950.0px;top:163.0px;" width="24" height="24" viewBox="0 0 24 24"><rect x="0" y="0" width="24" height="24" fill="#5ab552"/><circle cx="14" cy="10" r="6" fill="none" stroke="#fff" stroke-width="2"/><path d="M9.5 14.5L3 21" stroke="#fff" stroke-width="2.6"/></svg>
<svg class="a" style="left:982.0px;top:163.0px;" width="24" height="24" viewBox="0 0 24 24"><rect x="1" y="2" width="20" height="20" fill="#e8d880" stroke="#999" stroke-width="0.6"/><path d="M1 8Q8 10 10 2M4 22Q10 14 21 16M12 22Q14 12 21 8" stroke="#5e8ec6" stroke-width="2" fill="none"/><path d="M1 14Q6 14 8 22" stroke="#e07050" stroke-width="1.5" fill="none"/><path d="M10 16L21 3" stroke="#a0522d" stroke-width="2.5"/></svg>
<svg class="a" style="left:1020px;top:165.0px;" width="6" height="20" viewBox="0 0 6 20"><rect x="0" y="0" width="1.4" height="1.4" fill="#b8b8b8"/><rect x="4" y="0" width="1.4" height="1.4" fill="#b8b8b8"/><rect x="0" y="4" width="1.4" height="1.4" fill="#b8b8b8"/><rect x="4" y="4" width="1.4" height="1.4" fill="#b8b8b8"/><rect x="0" y="8" width="1.4" height="1.4" fill="#b8b8b8"/><rect x="4" y="8" width="1.4" height="1.4" fill="#b8b8b8"/><rect x="0" y="12" width="1.4" height="1.4" fill="#b8b8b8"/><rect x="4" y="12" width="1.4" height="1.4" fill="#b8b8b8"/><rect x="0" y="16" width="1.4" height="1.4" fill="#b8b8b8"/><rect x="4" y="16" width="1.4" height="1.4" fill="#b8b8b8"/></svg>
<svg class="a" style="left:1032.0px;top:163.0px;" width="24" height="24" viewBox="0 0 24 24"><rect x="0" y="1" width="24" height="13" rx="3" fill="#3f7fc4"/><text x="12" y="11" font-size="8" font-weight="bold" font-family="Liberation Sans" fill="#fff" text-anchor="middle">KML</text><rect x="14" y="14" width="10" height="10" rx="1.5" fill="#4a9e3f" stroke="#2f6f2a" stroke-width="0.8"/><path d="M19 16V22M16 19H22" stroke="#fff" stroke-width="2"/></svg>
<svg class="a" style="left:1065.0px;top:163.0px;" width="24" height="24" viewBox="0 0 24 24"><rect x="0" y="1" width="24" height="13" rx="3" fill="#3f7fc4"/><text x="12" y="11" font-size="8" font-weight="bold" font-family="Liberation Sans" fill="#fff" text-anchor="middle">KMZ</text><rect x="14" y="14" width="10" height="10" rx="1.5" fill="#3f6a9c"/><path d="M16 19H22M20 17L22 19L20 21" stroke="#fff" stroke-width="1.2" fill="none"/></svg>
<svg class="a" style="left:1098.0px;top:163.0px;" width="24" height="24" viewBox="0 0 24 24"><rect x="0" y="1" width="24" height="13" rx="3" fill="#3f7fc4"/><text x="12" y="11" font-size="7" font-weight="bold" font-family="Liberation Sans" fill="#fff" text-anchor="middle">HTML</text><rect x="14" y="14" width="10" height="10" rx="1.5" fill="#d8b22a" stroke="#a78417" stroke-width="0.8"/><circle cx="19" cy="19" r="2.4" fill="none" stroke="#fff" stroke-width="1.3"/><path d="M19 15.3V16.6M19 21.4V22.7M15.3 19H16.6M21.4 19H22.7M16.4 16.4L17.3 17.3M20.7 20.7L21.6 21.6M21.6 16.4L20.7 17.3M17.3 20.7L16.4 21.6" stroke="#fff" stroke-width="1"/></svg>
<svg class="a" style="left:1131.0px;top:163.0px;" width="24" height="24" viewBox="0 0 24 24"><rect x="1" y="1" width="11" height="11" fill="#4caf50" stroke="#333" stroke-width="0.6"/><rect x="12" y="1" width="11" height="11" fill="#e8d040" stroke="#333" stroke-width="0.6"/><rect x="1" y="12" width="11" height="11" fill="#3f7fc4" stroke="#333" stroke-width="0.6"/><rect x="12" y="12" width="11" height="11" fill="#1e6a2e" stroke="#333" stroke-width="0.6"/><rect x="7" y="7" width="10" height="10" fill="#a0602d"/></svg>
<svg class="a" style="left:1164.0px;top:163.0px;" width="24" height="24" viewBox="0 0 24 24"><path d="M2 3L21 1L23 21L3 23Z" fill="#c8eac0" stroke="#3a6a4a" stroke-width="1.2"/><path d="M3 8L22 6M3 13L22 11M3 18L22 16M8 3L9 23M14 2L15 22" stroke="#6aaa6a" stroke-width="0.8"/><path d="M6 20L18 4" stroke="#fff" stroke-width="1.6"/></svg>
<svg class="a" style="left:1201px;top:165.0px;" width="6" height="20" viewBox="0 0 6 20"><rect x="0" y="0" width="1.4" height="1.4" fill="#b8b8b8"/><rect x="4" y="0" width="1.4" height="1.4" fill="#b8b8b8"/><rect x="0" y="4" width="1.4" height="1.4" fill="#b8b8b8"/><rect x="4" y="4" width="1.4" height="1.4" fill="#b8b8b8"/><rect x="0" y="8" width="1.4" height="1.4" fill="#b8b8b8"/><rect x="4" y="8" width="1.4" height="1.4" fill="#b8b8b8"/><rect x="0" y="12" width="1.4" height="1.4" fill="#b8b8b8"/><rect x="4" y="12" width="1.4" height="1.4" fill="#b8b8b8"/><rect x="0" y="16" width="1.4" height="1.4" fill="#b8b8b8"/><rect x="4" y="16" width="1.4" height="1.4" fill="#b8b8b8"/></svg>
<svg class="a" style="left:25px;top:200px;" width="18" height="4" viewBox="0 0 18 4"><rect x="0" y="0" width="1.4" height="1.4" fill="#b8b8b8"/><rect x="0" y="3" width="1.4" height="1.4" fill="#b8b8b8"/><rect x="4" y="0" width="1.4" height="1.4" fill="#b8b8b8"/><rect x="4" y="3" width="1.4" height="1.4" fill="#b8b8b8"/><rect x="8" y="0" width="1.4" height="1.4" fill="#b8b8b8"/><rect x="8" y="3" width="1.4" height="1.4" fill="#b8b8b8"/><rect x="12" y="0" width="1.4" height="1.4" fill="#b8b8b8"/><rect x="12" y="3" width="1.4" height="1.4" fill="#b8b8b8"/><rect x="16" y="0" width="1.4" height="1.4" fill="#b8b8b8"/><rect x="16" y="3" width="1.4" height="1.4" fill="#b8b8b8"/></svg>
<svg class="a" style="left:21.0px;top:212.0px;" width="24" height="24" viewBox="0 0 24 24"><path d="M2 12L10 5L18 14L10 21Z" fill="#e07a3a"/><path d="M4 10L12 3L20 12L12 19Z" fill="#f2c23a"/><rect x="9" y="2" width="13" height="13" fill="#5e8ec6" stroke="#3f6a9c" stroke-width="0.8" transform="rotate(8 15 8)"/><rect x="14" y="14" width="10" height="10" rx="1.5" fill="#4a9e3f" stroke="#2f6f2a" stroke-width="0.8"/><path d="M19 16V22M16 19H22" stroke="#fff" stroke-width="2"/></svg>
<svg class="a" style="left:21.0px;top:244.0px;" width="24" height="24" viewBox="0 0 24 24"><path d="M2 10L12 14V23L2 19Z" fill="#e8c030" stroke="#9a7a10" stroke-width="0.8"/><path d="M12 14L22 10V19L12 23Z" fill="#f2dc3a" stroke="#9a7a10" stroke-width="0.8"/><circle cx="12" cy="8" r="7" fill="#7fa8d8" stroke="#3f6a9c" stroke-width="0.8"/><path d="M7 6Q10 4 12 7Q14 10 17 8" stroke="#2f5a8c" stroke-width="2" fill="none"/><rect x="14" y="14" width="10" height="10" rx="1.5" fill="#d8b22a" stroke="#a78417" stroke-width="0.8"/><circle cx="19" cy="19" r="2.4" fill="none" stroke="#fff" stroke-width="1.3"/><path d="M19 15.3V16.6M19 21.4V22.7M15.3 19H16.6M21.4 19H22.7M16.4 16.4L17.3 17.3M20.7 20.7L21.6 21.6M21.6 16.4L20.7 17.3M17.3 20.7L16.4 21.6" stroke="#fff" stroke-width="1"/></svg>
<svg class="a" style="left:21.0px;top:276.0px;" width="24" height="24" viewBox="0 0 24 24"><path d="M3 3L9 20L15 5L21 4" fill="none" stroke="#333" stroke-width="1.2"/><path d="M1.5 1.5L4.5 4.5M1.5 4.5L4.5 1.5" stroke="#333"/><circle cx="9" cy="20" r="1.8" fill="#fff" stroke="#333"/><path d="M13.5 3.5L16.5 6.5M13.5 6.5L16.5 3.5M19.5 2.5L22.5 5.5M19.5 5.5L22.5 2.5" stroke="#333"/><rect x="14" y="14" width="10" height="10" rx="1.5" fill="#d8b22a" stroke="#a78417" stroke-width="0.8"/><circle cx="19" cy="19" r="2.4" fill="none" stroke="#fff" stroke-width="1.3"/><path d="M19 15.3V16.6M19 21.4V22.7M15.3 19H16.6M21.4 19H22.7M16.4 16.4L17.3 17.3M20.7 20.7L21.6 21.6M21.6 16.4L20.7 17.3M17.3 20.7L16.4 21.6" stroke="#fff" stroke-width="1"/></svg>
<svg class="a" style="left:21.0px;top:307.0px;" width="24" height="24" viewBox="0 0 24 24"><path d="M3 22Q5 10 20 2Q18 14 6 18Z" fill="#7fa8d8" stroke="#3f6a9c" stroke-width="0.9"/><path d="M3 22L17 5" stroke="#2f5a8c" stroke-width="1"/><rect x="14" y="14" width="10" height="10" rx="1.5" fill="#d8b22a" stroke="#a78417" stroke-width="0.8"/><circle cx="19" cy="19" r="2.4" fill="none" stroke="#fff" stroke-width="1.3"/><path d="M19 15.3V16.6M19 21.4V22.7M15.3 19H16.6M21.4 19H22.7M16.4 16.4L17.3 17.3M20.7 20.7L21.6 21.6M21.6 16.4L20.7 17.3M17.3 20.7L16.4 21.6" stroke="#fff" stroke-width="1"/></svg>
<svg class="a" style="left:21.0px;top:340.0px;" width="24" height="24" viewBox="0 0 24 24"><rect x="2" y="5" width="19" height="13" rx="2" fill="#5e8ec6" stroke="#3f6a9c" stroke-width="0.8"/><path d="M5 2V5M8 2V5M11 2V5M14 2V5M17 2V5M5 18V22M8 18V22M11 18V22" stroke="#3f6a9c" stroke-width="1.2"/><rect x="5" y="8" width="13" height="5" fill="#8fb4e0"/><rect x="14" y="14" width="10" height="10" rx="1.5" fill="#d8b22a" stroke="#a78417" stroke-width="0.8"/><circle cx="19" cy="19" r="2.4" fill="none" stroke="#fff" stroke-width="1.3"/><path d="M19 15.3V16.6M19 21.4V22.7M15.3 19H16.6M21.4 19H22.7M16.4 16.4L17.3 17.3M20.7 20.7L21.6 21.6M21.6 16.4L20.7 17.3M17.3 20.7L16.4 21.6" stroke="#fff" stroke-width="1"/></svg>
<svg class="a" style="left:21.0px;top:372.0px;" width="24" height="24" viewBox="0 0 24 24"><rect x="2" y="2" width="19" height="19" fill="#e8eef6" stroke="#3f6a9c" stroke-width="1"/><path d="M2 11H21M11 2V21" stroke="#3f6a9c" stroke-width="1.4"/><path d="M2 2L11 11M11 2L2 11" stroke="#3f6a9c" stroke-width="0.8"/><rect x="12" y="12" width="8" height="8" fill="#5e8ec6"/><rect x="14" y="14" width="10" height="10" rx="1.5" fill="#d8b22a" stroke="#a78417" stroke-width="0.8"/><circle cx="19" cy="19" r="2.4" fill="none" stroke="#fff" stroke-width="1.3"/><path d="M19 15.3V16.6M19 21.4V22.7M15.3 19H16.6M21.4 19H22.7M16.4 16.4L17.3 17.3M20.7 20.7L21.6 21.6M21.6 16.4L20.7 17.3M17.3 20.7L16.4 21.6" stroke="#fff" stroke-width="1"/></svg>
<svg class="a" style="left:21.0px;top:404.0px;" width="24" height="24" viewBox="0 0 24 24"><rect x="1.5" y="1.5" width="20" height="20" rx="2" fill="#dbe6f3" stroke="#5e8ec6" stroke-width="1"/><path d="M4 4L11 18L18 4" fill="none" stroke="#333" stroke-width="1.3"/><circle cx="11" cy="18" r="1.8" fill="#fff" stroke="#333"/><rect x="14" y="14" width="10" height="10" rx="1.5" fill="#d8b22a" stroke="#a78417" stroke-width="0.8"/><circle cx="19" cy="19" r="2.4" fill="none" stroke="#fff" stroke-width="1.3"/><path d="M19 15.3V16.6M19 21.4V22.7M15.3 19H16.6M21.4 19H22.7M16.4 16.4L17.3 17.3M20.7 20.7L21.6 21.6M21.6 16.4L20.7 17.3M17.3 20.7L16.4 21.6" stroke="#fff" stroke-width="1"/></svg>
<svg class="a" style="left:25px;top:443px;" width="18" height="4" viewBox="0 0 18 4"><rect x="0" y="0" width="1.4" height="1.4" fill="#b8b8b8"/><rect x="0" y="3" width="1.4" height="1.4" fill="#b8b8b8"/><rect x="4" y="0" width="1.4" height="1.4" fill="#b8b8b8"/><rect x="4" y="3" width="1.4" height="1.4" fill="#b8b8b8"/><rect x="8" y="0" width="1.4" height="1.4" fill="#b8b8b8"/><rect x="8" y="3" width="1.4" height="1.4" fill="#b8b8b8"/><rect x="12" y="0" width="1.4" height="1.4" fill="#b8b8b8"/><rect x="12" y="3" width="1.4" height="1.4" fill="#b8b8b8"/><rect x="16" y="0" width="1.4" height="1.4" fill="#b8b8b8"/><rect x="16" y="3" width="1.4" height="1.4" fill="#b8b8b8"/></svg>
<svg class="a" style="left:21.0px;top:452.0px;" width="24" height="24" viewBox="0 0 24 24"><rect x="1" y="1" width="22" height="22" rx="1.5" fill="#5b82b0" stroke="#2a4a6a" stroke-width="0.8"/><rect x="1" y="1" width="6" height="22" fill="#1e2e44"/><text x="10" y="19" font-size="15" font-family="Liberation Sans" fill="#e8f0f8">?</text></svg>
<svg class="a" style="left:59.0px;top:225.0px;" width="22" height="22" viewBox="0 0 22 22"><path d="M2 15Q4 10 9 12L12 15Q10 20 5 20Q2 19 2 15Z" fill="#e04a3a"/><path d="M4 13Q6 9 10 11L11 13" fill="#4f86c6"/><path d="M6 12Q9 8 12 11L12 14" fill="#f2c23a"/><path d="M11 13L19 3" stroke="#d8a040" stroke-width="2.6" stroke-linecap="round"/></svg>
<svg class="a" style="left:84.0px;top:225.0px;" width="22" height="22" viewBox="0 0 22 22"><path d="M4 7H12V20H4Z M7 4H15V17" fill="none" stroke="#777" stroke-width="1"/><path d="M10 2V15" stroke="#777"/><rect x="12" y="12" width="9" height="9" rx="1.5" fill="#4a9e3f" stroke="#2f6f2a" stroke-width="0.8"/><path d="M16.5 14V19M14 16.5H19" stroke="#fff" stroke-width="2"/></svg>
<svg class="a" style="left:109.0px;top:225.0px;" width="22" height="22" viewBox="0 0 22 22"><path d="M1 11Q10 2 19 11Q10 20 1 11Z" fill="#dfe6ee" stroke="#9aa6b2"/><circle cx="10" cy="11" r="4" fill="#6a8ab0"/><circle cx="10" cy="11" r="1.6" fill="#222"/><path d="M14 17H20L17 20Z" fill="#555"/></svg>
<svg class="a" style="left:134.0px;top:225.0px;" width="22" height="22" viewBox="0 0 22 22"><path d="M2 3H18L12 11V19L8 17V11Z" fill="#7aa2cf" stroke="#4f76a3" stroke-width="0.8"/><path d="M2 3H18V6H2Z" fill="#e8e060"/><path d="M14 17H20L17 20Z" fill="#555"/></svg>
<svg class="a" style="left:160.0px;top:225.0px;" width="22" height="22" viewBox="0 0 22 22"><path d="M10.5 3.5Q4 2.5 4 6.5Q4 9 8 9.5Q3 10 3 13.5Q3 17.5 11 16.5" fill="none" stroke="#6a2a8a" stroke-width="1.6"/><rect x="11" y="12" width="7" height="8" fill="#eee" stroke="#777" stroke-width="0.8"/></svg>
<svg class="a" style="left:184px;top:234px;" width="8" height="5" viewBox="0 0 8 5"><path d="M0.5 0.5H7.5L4 4.5Z" fill="#4a4a4a"/></svg>
<svg class="a" style="left:196.0px;top:225.0px;" width="22" height="22" viewBox="0 0 22 22"><path d="M3 4H9V20H3Z" fill="#fff" stroke="#999" stroke-width="0.8"/><rect x="4" y="6" width="3" height="3" fill="#f0b040"/><rect x="4" y="13" width="3" height="3" fill="#f0b040"/><path d="M14 2V16M10 12L14 18L18 12" stroke="#4f86c6" stroke-width="2.4" fill="none"/></svg>
<svg class="a" style="left:221.0px;top:225.0px;" width="22" height="22" viewBox="0 0 22 22"><path d="M3 4H9V20H3Z" fill="#fff" stroke="#999" stroke-width="0.8"/><rect x="4" y="6" width="3" height="3" fill="#f0b040"/><rect x="4" y="13" width="3" height="3" fill="#f0b040"/><path d="M14 20V6M10 10L14 4L18 10" stroke="#4f86c6" stroke-width="2.4" fill="none"/></svg>
<svg class="a" style="left:246.0px;top:225.0px;" width="22" height="22" viewBox="0 0 22 22"><rect x="2" y="3" width="14" height="14" fill="#fff" stroke="#777" stroke-width="1"/><rect x="12" y="14" width="8" height="5" rx="1" fill="#e03030"/><path d="M14 16.5H18" stroke="#fff" stroke-width="1.2"/></svg>
<svg class="a" style="left:1361.5px;top:225.0px;" width="22" height="22" viewBox="0 0 22 22"><rect x="2" y="3" width="14" height="14" fill="#fff" stroke="#777" stroke-width="1"/><circle cx="16" cy="17" r="3.5" fill="#5aa86a"/><circle cx="16" cy="17" r="1.2" fill="#fff"/></svg>
<svg class="a" style="left:1387.0px;top:225.0px;" width="22" height="22" viewBox="0 0 22 22"><path d="M3 10A7.5 7.5 0 0 1 16.5 5.5" fill="none" stroke="#4f86c6" stroke-width="2.8"/><path d="M13.5 2.5H19V8Z" fill="#4f86c6"/><path d="M19 12A7.5 7.5 0 0 1 5.5 16.5" fill="none" stroke="#4f86c6" stroke-width="2.8"/><path d="M8.5 19.5H3V14Z" fill="#4f86c6"/></svg>
<svg class="a" style="left:1412.0px;top:225.0px;" width="22" height="22" viewBox="0 0 22 22"><path d="M2 3H20L13 11V20L9 18V11Z" fill="#7aa2cf" stroke="#4f76a3" stroke-width="0.8"/><path d="M2 3H20V6H2Z" fill="#e8e060"/></svg>
<svg class="a" style="left:1437.5px;top:225.0px;" width="22" height="22" viewBox="0 0 22 22"><path d="M3 4H9V20H3Z" fill="#fff" stroke="#999" stroke-width="0.8"/><rect x="4" y="6" width="3" height="3" fill="#f0b040"/><rect x="4" y="13" width="3" height="3" fill="#f0b040"/><path d="M14 20V6M10 10L14 4L18 10" stroke="#3f6a9c" stroke-width="2.4" fill="none"/></svg>
<svg class="a" style="left:1461.5px;top:225.0px;" width="22" height="22" viewBox="0 0 22 22"><circle cx="11" cy="11" r="8" fill="#5e8ec6"/><text x="9" y="16" font-size="11" font-weight="bold" font-style="italic" font-family="Liberation Serif" fill="#fff">i</text></svg>
<svg class="a" style="left:19px;top:1013.0px;" width="6" height="20" viewBox="0 0 6 20"><rect x="0" y="0" width="1.4" height="1.4" fill="#b8b8b8"/><rect x="4" y="0" width="1.4" height="1.4" fill="#b8b8b8"/><rect x="0" y="4" width="1.4" height="1.4" fill="#b8b8b8"/><rect x="4" y="4" width="1.4" height="1.4" fill="#b8b8b8"/><rect x="0" y="8" width="1.4" height="1.4" fill="#b8b8b8"/><rect x="4" y="8" width="1.4" height="1.4" fill="#b8b8b8"/><rect x="0" y="12" width="1.4" height="1.4" fill="#b8b8b8"/><rect x="4" y="12" width="1.4" height="1.4" fill="#b8b8b8"/><rect x="0" y="16" width="1.4" height="1.4" fill="#b8b8b8"/><rect x="4" y="16" width="1.4" height="1.4" fill="#b8b8b8"/></svg>
<svg class="a" style="left:30.8px;top:1011.0px;" width="24" height="24" viewBox="0 0 24 24"><path d="M12 2L22 20H2Z" fill="#8cc63f"/><path d="M12 9L16.5 17H7.5Z" fill="#f4f4f4"/><path d="M2 21H22" stroke="#f08a3a" stroke-width="2"/></svg>
<svg class="a" style="left:65.0px;top:1011.0px;" width="24" height="24" viewBox="0 0 24 24"><rect x="1" y="1" width="20" height="20" rx="2" fill="#2e5a2a"/><text x="4" y="17" font-size="16" font-weight="bold" font-family="Liberation Serif" fill="#fff">F</text><rect x="13" y="13" width="10" height="10" rx="1.5" fill="#3f6a9c"/><path d="M15 18H21M19 16L21 18L19 20" stroke="#fff" stroke-width="1.2" fill="none"/></svg>
<svg class="a" style="left:97.0px;top:1011.0px;" width="24" height="24" viewBox="0 0 24 24"><circle cx="12" cy="10" r="9.5" fill="#8fb0dc" stroke="#3f6a9c" stroke-width="0.8"/><path d="M3 7H21M2.5 12H21.5M12 0.5V19.5M6 2Q12 10 6 18M18 2Q12 10 18 18" stroke="#e8f0fa" stroke-width="0.7" fill="none"/><path d="M6 6Q9 5 10 8Q8 11 6 9Z M14 4Q18 5 17 9Q14 9 14 4Z" fill="#3a5a8a"/><path d="M2 19Q2 14 7 14H17Q22 14 22 19" fill="#111"/><circle cx="7" cy="19.5" r="3.8" fill="#111"/><circle cx="17" cy="19.5" r="3.8" fill="#111"/><circle cx="7" cy="19.5" r="1.6" fill="#ddd"/><circle cx="17" cy="19.5" r="1.6" fill="#ddd"/></svg>
<svg class="a" style="left:133px;top:1013.0px;" width="6" height="20" viewBox="0 0 6 20"><rect x="0" y="0" width="1.4" height="1.4" fill="#b8b8b8"/><rect x="4" y="0" width="1.4" height="1.4" fill="#b8b8b8"/><rect x="0" y="4" width="1.4" height="1.4" fill="#b8b8b8"/><rect x="4" y="4" width="1.4" height="1.4" fill="#b8b8b8"/><rect x="0" y="8" width="1.4" height="1.4" fill="#b8b8b8"/><rect x="4" y="8" width="1.4" height="1.4" fill="#b8b8b8"/><rect x="0" y="12" width="1.4" height="1.4" fill="#b8b8b8"/><rect x="4" y="12" width="1.4" height="1.4" fill="#b8b8b8"/><rect x="0" y="16" width="1.4" height="1.4" fill="#b8b8b8"/><rect x="4" y="16" width="1.4" height="1.4" fill="#b8b8b8"/></svg>
<svg class="a" style="left:146.0px;top:1011.0px;" width="24" height="24" viewBox="0 0 24 24"><path d="M11.5 1.5C7 1.5 7.3 3.5 7.3 3.5V6H11.7V6.8H5.4C5.4 6.8 2 6.5 2 11.1C2 15.7 5 15.5 5 15.5H6.8V13.1C6.8 13.1 6.7 10.1 9.7 10.1H13.6C13.6 10.1 16.4 10.2 16.4 7.4V3.9C16.4 3.9 16.8 1.5 11.5 1.5Z" fill="#3a72a8"/><circle cx="9.6" cy="3.8" r="0.9" fill="#fff"/><path d="M12.5 21C17 21 16.7 19 16.7 19V16.5H12.3V15.7H18.6C18.6 15.7 22 16 22 11.4C22 6.8 19 7 19 7H17.2V9.4C17.2 9.4 17.3 12.4 14.3 12.4H10.4C10.4 12.4 7.6 12.3 7.6 15.1V18.6C7.6 18.6 7.2 21 12.5 21Z" fill="#f2cf3a"/><path d="M18 19.5L21.5 21.5L18 23.5" stroke="#444" stroke-width="1" fill="none"/></svg>
<svg class="a" style="left:179.0px;top:1011.0px;" width="24" height="24" viewBox="0 0 24 24"><rect x="1" y="1" width="7.3" height="7.3" fill="#6a9ab0"/><rect x="8.3" y="1" width="7.3" height="7.3" fill="#486878"/><rect x="15.6" y="1" width="7.3" height="7.3" fill="#333"/><rect x="1" y="8.3" width="7.3" height="7.3" fill="#a8c8d8"/><rect x="8.3" y="8.3" width="7.3" height="7.3" fill="#a89098"/><rect x="15.6" y="8.3" width="7.3" height="7.3" fill="#a04050"/><rect x="1" y="15.6" width="7.3" height="7.3" fill="#e8e8e8"/><rect x="8.3" y="15.6" width="7.3" height="7.3" fill="#e0a8b0"/><rect x="15.6" y="15.6" width="7.3" height="7.3" fill="#d04050"/></svg>
<svg class="a" style="left:212.0px;top:1011.0px;" width="24" height="24" viewBox="0 0 24 24"><path d="M2 1V22H23" stroke="#777" stroke-width="1" fill="none"/><path d="M4 19Q10 19 12 12T21 4" stroke="#c040a0" stroke-width="1.6" fill="none"/><path d="M4 20Q12 18 21 14" stroke="#40a0c0" stroke-width="1.4" fill="none"/></svg>
<svg class="a" style="left:242px;top:1022px;" width="8" height="5" viewBox="0 0 8 5"><path d="M0.5 0.5H7.5L4 4.5Z" fill="#4a4a4a"/></svg>
<svg class="a" style="left:256.0px;top:1011.0px;" width="24" height="24" viewBox="0 0 24 24"><circle cx="9" cy="9" r="8" fill="#2e8a3e"/><text x="6.5" y="14" font-size="12" font-weight="bold" font-style="italic" font-family="Liberation Serif" fill="#fff">i</text><path d="M12 10L12 22L15 19L18 23L20 22L17.5 18L21.5 17.5Z" fill="#fff" stroke="#333" stroke-width="0.9"/></svg>
<svg class="a" style="left:289.0px;top:1011.0px;" width="24" height="24" viewBox="0 0 24 24"><path d="M3 21L21 3" stroke="#1a3ad8" stroke-width="2"/><path d="M16 2H22V8Z" fill="#1a3ad8"/><path d="M3 21V8L14 12Z" fill="#f2e080" opacity="0.8"/><path d="M3 2V22H22" stroke="#111" stroke-width="1.4" fill="none"/><path d="M3 2H22V22" stroke="#555" stroke-width="0.8" stroke-dasharray="1.5 1.5" fill="none"/></svg>
<svg class="a" style="left:323.0px;top:1011.0px;" width="24" height="24" viewBox="0 0 24 24"><path d="M1 22V15Q6 6 12 10Q17 14 23 16V22Z" fill="#22c822" stroke="#111" stroke-width="1"/><circle cx="18" cy="4" r="3" fill="#f8f040"/></svg>
<svg class="a" style="left:356.5px;top:1011.0px;" width="24" height="24" viewBox="0 0 24 24"><circle cx="12" cy="12" r="11" fill="#1a2a4a"/><circle cx="12" cy="12" r="9" fill="#2a4a7a"/><path d="M6 8Q10 6 12 10Q13 14 9 16" fill="#4a8a4a"/><path d="M13 6Q17 7 18 11" stroke="#6a9ad8" stroke-width="1.5" fill="none"/></svg>
<svg class="a" style="left:389.0px;top:1011.0px;" width="24" height="24" viewBox="0 0 24 24"><rect x="0" y="0" width="24" height="24" fill="#6a6a6a"/><path d="M2 16L12 3L22 16L12 20Z" fill="#f2c23a"/><path d="M12 3L22 16L12 20Z" fill="#d88a20"/></svg>
<svg class="a" style="left:422.0px;top:1011.0px;" width="24" height="24" viewBox="0 0 24 24"><path d="M12 8L23 14L12 21L1 14Z" fill="#3d6e78"/><path d="M12 6L23 12L12 19L1 12Z" fill="#7fb3c8"/><path d="M5 13Q3 6 10 5Q13 9 11 15Q8 16 5 13Z" fill="#7cc36a"/><path d="M9 13Q9 4 18 2Q21 8 17 14Q13 16 9 13Z" fill="#a6d86a"/></svg>
<svg class="a" style="left:458.5px;top:1013.0px;" width="6" height="20" viewBox="0 0 6 20"><rect x="0" y="0" width="1.4" height="1.4" fill="#b8b8b8"/><rect x="4" y="0" width="1.4" height="1.4" fill="#b8b8b8"/><rect x="0" y="4" width="1.4" height="1.4" fill="#b8b8b8"/><rect x="4" y="4" width="1.4" height="1.4" fill="#b8b8b8"/><rect x="0" y="8" width="1.4" height="1.4" fill="#b8b8b8"/><rect x="4" y="8" width="1.4" height="1.4" fill="#b8b8b8"/><rect x="0" y="12" width="1.4" height="1.4" fill="#b8b8b8"/><rect x="4" y="12" width="1.4" height="1.4" fill="#b8b8b8"/><rect x="0" y="16" width="1.4" height="1.4" fill="#b8b8b8"/><rect x="4" y="16" width="1.4" height="1.4" fill="#b8b8b8"/></svg>
<svg class="a" style="left:472.0px;top:1011.0px;" width="24" height="24" viewBox="0 0 24 24"><rect x="3" y="2" width="18" height="20" fill="none" stroke="#3a9ad8" stroke-width="1.2"/><rect x="0" y="6" width="18" height="17" fill="#fff" stroke="#3a9ad8" stroke-width="1.2"/><path d="M4 14Q9 10 14 14" stroke="#3a9ad8" stroke-width="1.4" fill="none"/></svg>
<svg class="a" style="left:507.5px;top:1013.0px;" width="6" height="20" viewBox="0 0 6 20"><rect x="0" y="0" width="1.4" height="1.4" fill="#b8b8b8"/><rect x="4" y="0" width="1.4" height="1.4" fill="#b8b8b8"/><rect x="0" y="4" width="1.4" height="1.4" fill="#b8b8b8"/><rect x="4" y="4" width="1.4" height="1.4" fill="#b8b8b8"/><rect x="0" y="8" width="1.4" height="1.4" fill="#b8b8b8"/><rect x="4" y="8" width="1.4" height="1.4" fill="#b8b8b8"/><rect x="0" y="12" width="1.4" height="1.4" fill="#b8b8b8"/><rect x="4" y="12" width="1.4" height="1.4" fill="#b8b8b8"/><rect x="0" y="16" width="1.4" height="1.4" fill="#b8b8b8"/><rect x="4" y="16" width="1.4" height="1.4" fill="#b8b8b8"/></svg>
<svg class="a" style="left:520.0px;top:1011.0px;" width="24" height="24" viewBox="0 0 24 24"><rect x="1" y="1" width="20" height="18" fill="#e8e8e8" stroke="#777" stroke-width="0.8"/><path d="M1 5H21M1 9H21M1 13H21M5 1V19M9 1V19M13 1V19M17 1V19" stroke="#aaa" stroke-width="0.6"/><rect x="12" y="12" width="11" height="11" fill="#2e8a3e"/><path d="M17.5 14V21M14 17.5H21" stroke="#fff" stroke-width="1.8"/></svg>
<svg class="a" style="left:557px;top:1013.0px;" width="6" height="20" viewBox="0 0 6 20"><rect x="0" y="0" width="1.4" height="1.4" fill="#b8b8b8"/><rect x="4" y="0" width="1.4" height="1.4" fill="#b8b8b8"/><rect x="0" y="4" width="1.4" height="1.4" fill="#b8b8b8"/><rect x="4" y="4" width="1.4" height="1.4" fill="#b8b8b8"/><rect x="0" y="8" width="1.4" height="1.4" fill="#b8b8b8"/><rect x="4" y="8" width="1.4" height="1.4" fill="#b8b8b8"/><rect x="0" y="12" width="1.4" height="1.4" fill="#b8b8b8"/><rect x="4" y="12" width="1.4" height="1.4" fill="#b8b8b8"/><rect x="0" y="16" width="1.4" height="1.4" fill="#b8b8b8"/><rect x="4" y="16" width="1.4" height="1.4" fill="#b8b8b8"/></svg>
<svg class="a" style="left:574px;top:1013.0px;" width="6" height="20" viewBox="0 0 6 20"><rect x="0" y="0" width="1.4" height="1.4" fill="#b8b8b8"/><rect x="4" y="0" width="1.4" height="1.4" fill="#b8b8b8"/><rect x="0" y="4" width="1.4" height="1.4" fill="#b8b8b8"/><rect x="4" y="4" width="1.4" height="1.4" fill="#b8b8b8"/><rect x="0" y="8" width="1.4" height="1.4" fill="#b8b8b8"/><rect x="4" y="8" width="1.4" height="1.4" fill="#b8b8b8"/><rect x="0" y="12" width="1.4" height="1.4" fill="#b8b8b8"/><rect x="4" y="12" width="1.4" height="1.4" fill="#b8b8b8"/><rect x="0" y="16" width="1.4" height="1.4" fill="#b8b8b8"/><rect x="4" y="16" width="1.4" height="1.4" fill="#b8b8b8"/></svg>
<svg class="a" style="left:586.0px;top:1011.0px;" width="24" height="24" viewBox="0 0 24 24"><circle cx="12" cy="12" r="11" fill="#4caf50"/><circle cx="16" cy="7" r="2.2" fill="#fff"/><circle cx="8" cy="12" r="2.2" fill="#fff"/><circle cx="16" cy="17" r="2.2" fill="#fff"/><path d="M16 7L8 12L16 17" stroke="#fff" stroke-width="1.4" fill="none"/></svg>
<svg class="a" style="left:1630.5px;top:1013.0px;" width="6" height="20" viewBox="0 0 6 20"><rect x="0" y="0" width="1.4" height="1.4" fill="#b8b8b8"/><rect x="4" y="0" width="1.4" height="1.4" fill="#b8b8b8"/><rect x="0" y="4" width="1.4" height="1.4" fill="#b8b8b8"/><rect x="4" y="4" width="1.4" height="1.4" fill="#b8b8b8"/><rect x="0" y="8" width="1.4" height="1.4" fill="#b8b8b8"/><rect x="4" y="8" width="1.4" height="1.4" fill="#b8b8b8"/><rect x="0" y="12" width="1.4" height="1.4" fill="#b8b8b8"/><rect x="4" y="12" width="1.4" height="1.4" fill="#b8b8b8"/><rect x="0" y="16" width="1.4" height="1.4" fill="#b8b8b8"/><rect x="4" y="16" width="1.4" height="1.4" fill="#b8b8b8"/></svg>
<svg class="a" style="left:1643.0px;top:1011.0px;" width="24" height="24" viewBox="0 0 24 24"><circle cx="12" cy="12" r="11" fill="#fff" stroke="#222" stroke-width="0.8"/><path d="M1 12A11 11 0 0 1 23 12Z" fill="#1a3ab0"/><path d="M1 12A11 11 0 0 0 23 12Z" fill="#d01a1a"/><path d="M4 12Q8 6 14 10L18 8L17 13" stroke="#fff" stroke-width="1.2" fill="none"/><circle cx="6" cy="12" r="3.5" fill="#fff" stroke="#222" stroke-width="0.6"/></svg>
<svg class="a" style="left:1679.5px;top:1013.0px;" width="6" height="20" viewBox="0 0 6 20"><rect x="0" y="0" width="1.4" height="1.4" fill="#b8b8b8"/><rect x="4" y="0" width="1.4" height="1.4" fill="#b8b8b8"/><rect x="0" y="4" width="1.4" height="1.4" fill="#b8b8b8"/><rect x="4" y="4" width="1.4" height="1.4" fill="#b8b8b8"/><rect x="0" y="8" width="1.4" height="1.4" fill="#b8b8b8"/><rect x="4" y="8" width="1.4" height="1.4" fill="#b8b8b8"/><rect x="0" y="12" width="1.4" height="1.4" fill="#b8b8b8"/><rect x="4" y="12" width="1.4" height="1.4" fill="#b8b8b8"/><rect x="0" y="16" width="1.4" height="1.4" fill="#b8b8b8"/><rect x="4" y="16" width="1.4" height="1.4" fill="#b8b8b8"/></svg>
<svg class="a" style="left:1692.0px;top:1011.0px;" width="24" height="24" viewBox="0 0 24 24"><circle cx="11" cy="13" r="10" fill="#4a7ac8"/><path d="M4 10Q9 7 12 12T19 13" stroke="#8ab0e8" stroke-width="1.2" fill="none"/><path d="M18 1Q22 6 21 9Q19 12 16 9Q16 6 18 1Z" fill="#cfe4f8"/></svg>
<svg class="a" style="left:466px;top:590px;" width="4" height="24" viewBox="0 0 4 24"><rect x="1" y="0" width="1.2" height="1.2" fill="#aaa"/><rect x="1" y="4" width="1.2" height="1.2" fill="#aaa"/><rect x="1" y="8" width="1.2" height="1.2" fill="#aaa"/><rect x="1" y="12" width="1.2" height="1.2" fill="#aaa"/><rect x="1" y="16" width="1.2" height="1.2" fill="#aaa"/><rect x="1" y="20" width="1.2" height="1.2" fill="#aaa"/></svg>
<svg class="a" style="left:1352px;top:590px;" width="4" height="24" viewBox="0 0 4 24"><rect x="1" y="0" width="1.2" height="1.2" fill="#aaa"/><rect x="1" y="4" width="1.2" height="1.2" fill="#aaa"/><rect x="1" y="8" width="1.2" height="1.2" fill="#aaa"/><rect x="1" y="12" width="1.2" height="1.2" fill="#aaa"/><rect x="1" y="16" width="1.2" height="1.2" fill="#aaa"/><rect x="1" y="20" width="1.2" height="1.2" fill="#aaa"/></svg>
</body></html>
